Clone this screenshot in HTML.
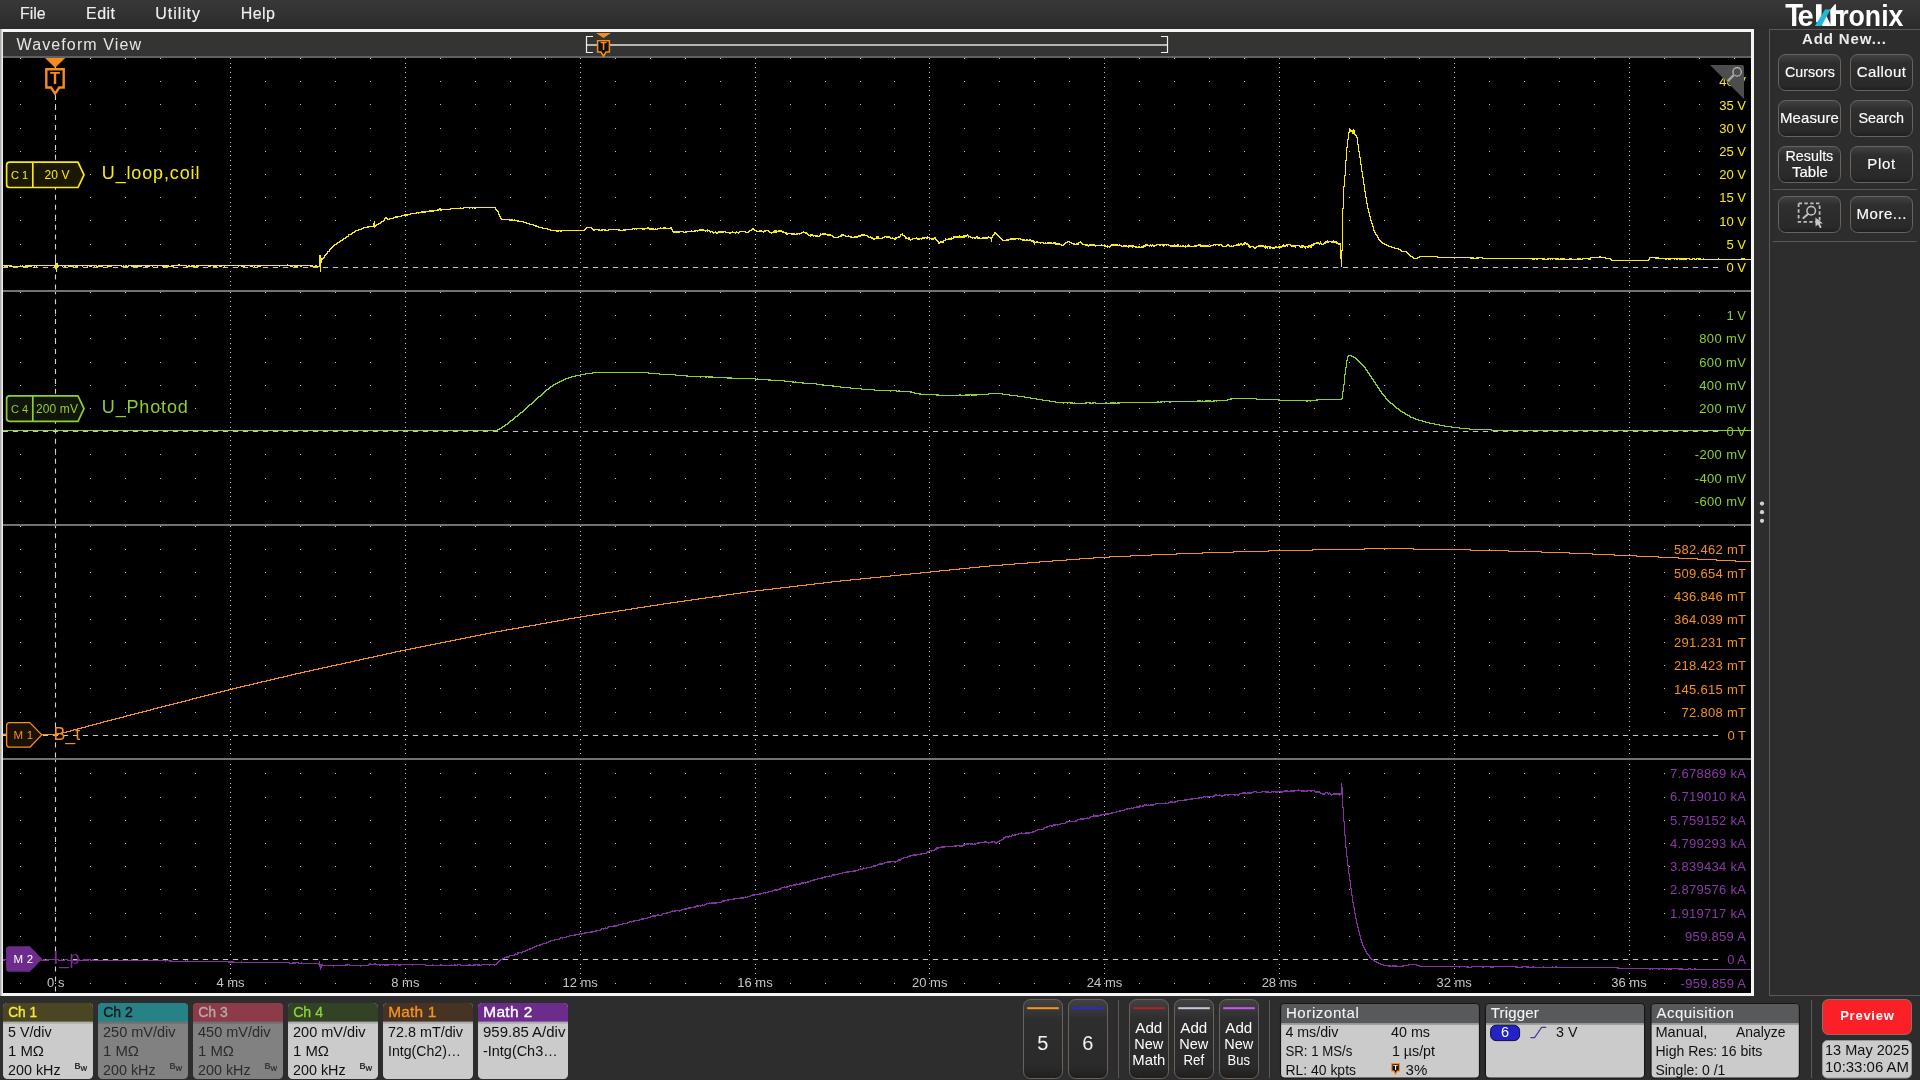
<!DOCTYPE html>
<html><head><meta charset="utf-8"><title>Tektronix Waveform View</title>
<style>
html,body{margin:0;padding:0;background:#2d2d2d;overflow:hidden;}
svg{display:block;font-family:"Liberation Sans", sans-serif;will-change:transform;}
</style></head><body>
<svg width="1920" height="1080" viewBox="0 0 1920 1080">
<defs>
<linearGradient id="gbtn" x1="0" y1="0" x2="0" y2="1"><stop offset="0" stop-color="#424242"/><stop offset="0.25" stop-color="#2e2e2e"/><stop offset="0.85" stop-color="#2a2a2a"/><stop offset="1" stop-color="#1e1e1e"/></linearGradient>
<linearGradient id="gtop" x1="0" y1="0" x2="0" y2="1"><stop offset="0" stop-color="#383838"/><stop offset="1" stop-color="#2b2b2b"/></linearGradient>
<linearGradient id="gleft" x1="0" y1="0" x2="1" y2="0"><stop offset="0" stop-color="#9a9a9a"/><stop offset="1" stop-color="#ffffff"/></linearGradient>
</defs>
<rect x="0" y="0" width="1920" height="1080" fill="#2d2d2d"/>
<rect x="0" y="0" width="1920" height="29" fill="url(#gtop)"/>
<text x="20.00" y="19.25" font-size="16" fill="#efefef" textLength="25.7" lengthAdjust="spacingAndGlyphs" stroke="#efefef" stroke-width="0.15">File</text>
<text x="86.00" y="19.25" font-size="16" fill="#efefef" textLength="29.0" lengthAdjust="spacing" stroke="#efefef" stroke-width="0.15">Edit</text>
<text x="155.30" y="19.25" font-size="16" fill="#efefef" textLength="44.7" lengthAdjust="spacing" stroke="#efefef" stroke-width="0.15">Utility</text>
<text x="240.70" y="19.25" font-size="16" fill="#efefef" textLength="34.3" lengthAdjust="spacing" stroke="#efefef" stroke-width="0.15">Help</text>
<rect x="0" y="29" width="1754" height="967" fill="#f4f4f4"/>
<rect x="0" y="29" width="3" height="967" fill="url(#gleft)"/>
<rect x="3" y="32" width="1748" height="24" fill="#343433"/>
<rect x="3" y="56" width="1748" height="2" fill="#606163"/>
<rect x="3" y="58" width="1748" height="935" fill="#000000"/>
<text x="16.50" y="49.75" font-size="16" fill="#e6e6e6" textLength="124.6" lengthAdjust="spacing">Waveform View</text>
<path d="M20 58.5h1M55 58.5h1M90 58.5h1M125 58.5h1M160 58.5h1M195 58.5h1M230 58.5h1M265 58.5h1M300 58.5h1M335 58.5h1M370 58.5h1M405 58.5h1M440 58.5h1M475 58.5h1M510 58.5h1M545 58.5h1M580 58.5h1M615 58.5h1M650 58.5h1M685 58.5h1M720 58.5h1M755 58.5h1M790 58.5h1M825 58.5h1M860 58.5h1M894 58.5h1M929 58.5h1M964 58.5h1M999 58.5h1M1034 58.5h1M1069 58.5h1M1104 58.5h1M1139 58.5h1M1174 58.5h1M1209 58.5h1M1244 58.5h1M1279 58.5h1M1314 58.5h1M1349 58.5h1M1384 58.5h1M1419 58.5h1M1454 58.5h1M1489 58.5h1M1524 58.5h1M1559 58.5h1M1594 58.5h1M1629 58.5h1M1664 58.5h1M1699 58.5h1M1734 58.5h1M20 81.5h1M55 81.5h1M90 81.5h1M125 81.5h1M160 81.5h1M195 81.5h1M230 81.5h1M265 81.5h1M300 81.5h1M335 81.5h1M370 81.5h1M405 81.5h1M440 81.5h1M475 81.5h1M510 81.5h1M545 81.5h1M580 81.5h1M615 81.5h1M650 81.5h1M685 81.5h1M720 81.5h1M755 81.5h1M790 81.5h1M825 81.5h1M860 81.5h1M894 81.5h1M929 81.5h1M964 81.5h1M999 81.5h1M1034 81.5h1M1069 81.5h1M1104 81.5h1M1139 81.5h1M1174 81.5h1M1209 81.5h1M1244 81.5h1M1279 81.5h1M1314 81.5h1M1349 81.5h1M1384 81.5h1M1419 81.5h1M1454 81.5h1M1489 81.5h1M1524 81.5h1M1559 81.5h1M1594 81.5h1M1629 81.5h1M1664 81.5h1M1699 81.5h1M1734 81.5h1M20 104.5h1M55 104.5h1M90 104.5h1M125 104.5h1M160 104.5h1M195 104.5h1M230 104.5h1M265 104.5h1M300 104.5h1M335 104.5h1M370 104.5h1M405 104.5h1M440 104.5h1M475 104.5h1M510 104.5h1M545 104.5h1M580 104.5h1M615 104.5h1M650 104.5h1M685 104.5h1M720 104.5h1M755 104.5h1M790 104.5h1M825 104.5h1M860 104.5h1M894 104.5h1M929 104.5h1M964 104.5h1M999 104.5h1M1034 104.5h1M1069 104.5h1M1104 104.5h1M1139 104.5h1M1174 104.5h1M1209 104.5h1M1244 104.5h1M1279 104.5h1M1314 104.5h1M1349 104.5h1M1384 104.5h1M1419 104.5h1M1454 104.5h1M1489 104.5h1M1524 104.5h1M1559 104.5h1M1594 104.5h1M1629 104.5h1M1664 104.5h1M1699 104.5h1M1734 104.5h1M20 128.5h1M55 128.5h1M90 128.5h1M125 128.5h1M160 128.5h1M195 128.5h1M230 128.5h1M265 128.5h1M300 128.5h1M335 128.5h1M370 128.5h1M405 128.5h1M440 128.5h1M475 128.5h1M510 128.5h1M545 128.5h1M580 128.5h1M615 128.5h1M650 128.5h1M685 128.5h1M720 128.5h1M755 128.5h1M790 128.5h1M825 128.5h1M860 128.5h1M894 128.5h1M929 128.5h1M964 128.5h1M999 128.5h1M1034 128.5h1M1069 128.5h1M1104 128.5h1M1139 128.5h1M1174 128.5h1M1209 128.5h1M1244 128.5h1M1279 128.5h1M1314 128.5h1M1349 128.5h1M1384 128.5h1M1419 128.5h1M1454 128.5h1M1489 128.5h1M1524 128.5h1M1559 128.5h1M1594 128.5h1M1629 128.5h1M1664 128.5h1M1699 128.5h1M1734 128.5h1M20 151.5h1M55 151.5h1M90 151.5h1M125 151.5h1M160 151.5h1M195 151.5h1M230 151.5h1M265 151.5h1M300 151.5h1M335 151.5h1M370 151.5h1M405 151.5h1M440 151.5h1M475 151.5h1M510 151.5h1M545 151.5h1M580 151.5h1M615 151.5h1M650 151.5h1M685 151.5h1M720 151.5h1M755 151.5h1M790 151.5h1M825 151.5h1M860 151.5h1M894 151.5h1M929 151.5h1M964 151.5h1M999 151.5h1M1034 151.5h1M1069 151.5h1M1104 151.5h1M1139 151.5h1M1174 151.5h1M1209 151.5h1M1244 151.5h1M1279 151.5h1M1314 151.5h1M1349 151.5h1M1384 151.5h1M1419 151.5h1M1454 151.5h1M1489 151.5h1M1524 151.5h1M1559 151.5h1M1594 151.5h1M1629 151.5h1M1664 151.5h1M1699 151.5h1M1734 151.5h1M20 174.5h1M55 174.5h1M90 174.5h1M125 174.5h1M160 174.5h1M195 174.5h1M230 174.5h1M265 174.5h1M300 174.5h1M335 174.5h1M370 174.5h1M405 174.5h1M440 174.5h1M475 174.5h1M510 174.5h1M545 174.5h1M580 174.5h1M615 174.5h1M650 174.5h1M685 174.5h1M720 174.5h1M755 174.5h1M790 174.5h1M825 174.5h1M860 174.5h1M894 174.5h1M929 174.5h1M964 174.5h1M999 174.5h1M1034 174.5h1M1069 174.5h1M1104 174.5h1M1139 174.5h1M1174 174.5h1M1209 174.5h1M1244 174.5h1M1279 174.5h1M1314 174.5h1M1349 174.5h1M1384 174.5h1M1419 174.5h1M1454 174.5h1M1489 174.5h1M1524 174.5h1M1559 174.5h1M1594 174.5h1M1629 174.5h1M1664 174.5h1M1699 174.5h1M1734 174.5h1M20 197.5h1M55 197.5h1M90 197.5h1M125 197.5h1M160 197.5h1M195 197.5h1M230 197.5h1M265 197.5h1M300 197.5h1M335 197.5h1M370 197.5h1M405 197.5h1M440 197.5h1M475 197.5h1M510 197.5h1M545 197.5h1M580 197.5h1M615 197.5h1M650 197.5h1M685 197.5h1M720 197.5h1M755 197.5h1M790 197.5h1M825 197.5h1M860 197.5h1M894 197.5h1M929 197.5h1M964 197.5h1M999 197.5h1M1034 197.5h1M1069 197.5h1M1104 197.5h1M1139 197.5h1M1174 197.5h1M1209 197.5h1M1244 197.5h1M1279 197.5h1M1314 197.5h1M1349 197.5h1M1384 197.5h1M1419 197.5h1M1454 197.5h1M1489 197.5h1M1524 197.5h1M1559 197.5h1M1594 197.5h1M1629 197.5h1M1664 197.5h1M1699 197.5h1M1734 197.5h1M20 220.5h1M55 220.5h1M90 220.5h1M125 220.5h1M160 220.5h1M195 220.5h1M230 220.5h1M265 220.5h1M300 220.5h1M335 220.5h1M370 220.5h1M405 220.5h1M440 220.5h1M475 220.5h1M510 220.5h1M545 220.5h1M580 220.5h1M615 220.5h1M650 220.5h1M685 220.5h1M720 220.5h1M755 220.5h1M790 220.5h1M825 220.5h1M860 220.5h1M894 220.5h1M929 220.5h1M964 220.5h1M999 220.5h1M1034 220.5h1M1069 220.5h1M1104 220.5h1M1139 220.5h1M1174 220.5h1M1209 220.5h1M1244 220.5h1M1279 220.5h1M1314 220.5h1M1349 220.5h1M1384 220.5h1M1419 220.5h1M1454 220.5h1M1489 220.5h1M1524 220.5h1M1559 220.5h1M1594 220.5h1M1629 220.5h1M1664 220.5h1M1699 220.5h1M1734 220.5h1M20 244.5h1M55 244.5h1M90 244.5h1M125 244.5h1M160 244.5h1M195 244.5h1M230 244.5h1M265 244.5h1M300 244.5h1M335 244.5h1M370 244.5h1M405 244.5h1M440 244.5h1M475 244.5h1M510 244.5h1M545 244.5h1M580 244.5h1M615 244.5h1M650 244.5h1M685 244.5h1M720 244.5h1M755 244.5h1M790 244.5h1M825 244.5h1M860 244.5h1M894 244.5h1M929 244.5h1M964 244.5h1M999 244.5h1M1034 244.5h1M1069 244.5h1M1104 244.5h1M1139 244.5h1M1174 244.5h1M1209 244.5h1M1244 244.5h1M1279 244.5h1M1314 244.5h1M1349 244.5h1M1384 244.5h1M1419 244.5h1M1454 244.5h1M1489 244.5h1M1524 244.5h1M1559 244.5h1M1594 244.5h1M1629 244.5h1M1664 244.5h1M1699 244.5h1M1734 244.5h1M20 267.5h1M55 267.5h1M90 267.5h1M125 267.5h1M160 267.5h1M195 267.5h1M230 267.5h1M265 267.5h1M300 267.5h1M335 267.5h1M370 267.5h1M405 267.5h1M440 267.5h1M475 267.5h1M510 267.5h1M545 267.5h1M580 267.5h1M615 267.5h1M650 267.5h1M685 267.5h1M720 267.5h1M755 267.5h1M790 267.5h1M825 267.5h1M860 267.5h1M894 267.5h1M929 267.5h1M964 267.5h1M999 267.5h1M1034 267.5h1M1069 267.5h1M1104 267.5h1M1139 267.5h1M1174 267.5h1M1209 267.5h1M1244 267.5h1M1279 267.5h1M1314 267.5h1M1349 267.5h1M1384 267.5h1M1419 267.5h1M1454 267.5h1M1489 267.5h1M1524 267.5h1M1559 267.5h1M1594 267.5h1M1629 267.5h1M1664 267.5h1M1699 267.5h1M1734 267.5h1M20 290.5h1M55 290.5h1M90 290.5h1M125 290.5h1M160 290.5h1M195 290.5h1M230 290.5h1M265 290.5h1M300 290.5h1M335 290.5h1M370 290.5h1M405 290.5h1M440 290.5h1M475 290.5h1M510 290.5h1M545 290.5h1M580 290.5h1M615 290.5h1M650 290.5h1M685 290.5h1M720 290.5h1M755 290.5h1M790 290.5h1M825 290.5h1M860 290.5h1M894 290.5h1M929 290.5h1M964 290.5h1M999 290.5h1M1034 290.5h1M1069 290.5h1M1104 290.5h1M1139 290.5h1M1174 290.5h1M1209 290.5h1M1244 290.5h1M1279 290.5h1M1314 290.5h1M1349 290.5h1M1384 290.5h1M1419 290.5h1M1454 290.5h1M1489 290.5h1M1524 290.5h1M1559 290.5h1M1594 290.5h1M1629 290.5h1M1664 290.5h1M1699 290.5h1M1734 290.5h1M20 292.5h1M55 292.5h1M90 292.5h1M125 292.5h1M160 292.5h1M195 292.5h1M230 292.5h1M265 292.5h1M300 292.5h1M335 292.5h1M370 292.5h1M405 292.5h1M440 292.5h1M475 292.5h1M510 292.5h1M545 292.5h1M580 292.5h1M615 292.5h1M650 292.5h1M685 292.5h1M720 292.5h1M755 292.5h1M790 292.5h1M825 292.5h1M860 292.5h1M894 292.5h1M929 292.5h1M964 292.5h1M999 292.5h1M1034 292.5h1M1069 292.5h1M1104 292.5h1M1139 292.5h1M1174 292.5h1M1209 292.5h1M1244 292.5h1M1279 292.5h1M1314 292.5h1M1349 292.5h1M1384 292.5h1M1419 292.5h1M1454 292.5h1M1489 292.5h1M1524 292.5h1M1559 292.5h1M1594 292.5h1M1629 292.5h1M1664 292.5h1M1699 292.5h1M1734 292.5h1M20 315.5h1M55 315.5h1M90 315.5h1M125 315.5h1M160 315.5h1M195 315.5h1M230 315.5h1M265 315.5h1M300 315.5h1M335 315.5h1M370 315.5h1M405 315.5h1M440 315.5h1M475 315.5h1M510 315.5h1M545 315.5h1M580 315.5h1M615 315.5h1M650 315.5h1M685 315.5h1M720 315.5h1M755 315.5h1M790 315.5h1M825 315.5h1M860 315.5h1M894 315.5h1M929 315.5h1M964 315.5h1M999 315.5h1M1034 315.5h1M1069 315.5h1M1104 315.5h1M1139 315.5h1M1174 315.5h1M1209 315.5h1M1244 315.5h1M1279 315.5h1M1314 315.5h1M1349 315.5h1M1384 315.5h1M1419 315.5h1M1454 315.5h1M1489 315.5h1M1524 315.5h1M1559 315.5h1M1594 315.5h1M1629 315.5h1M1664 315.5h1M1699 315.5h1M1734 315.5h1M20 338.5h1M55 338.5h1M90 338.5h1M125 338.5h1M160 338.5h1M195 338.5h1M230 338.5h1M265 338.5h1M300 338.5h1M335 338.5h1M370 338.5h1M405 338.5h1M440 338.5h1M475 338.5h1M510 338.5h1M545 338.5h1M580 338.5h1M615 338.5h1M650 338.5h1M685 338.5h1M720 338.5h1M755 338.5h1M790 338.5h1M825 338.5h1M860 338.5h1M894 338.5h1M929 338.5h1M964 338.5h1M999 338.5h1M1034 338.5h1M1069 338.5h1M1104 338.5h1M1139 338.5h1M1174 338.5h1M1209 338.5h1M1244 338.5h1M1279 338.5h1M1314 338.5h1M1349 338.5h1M1384 338.5h1M1419 338.5h1M1454 338.5h1M1489 338.5h1M1524 338.5h1M1559 338.5h1M1594 338.5h1M1629 338.5h1M1664 338.5h1M1699 338.5h1M1734 338.5h1M20 362.5h1M55 362.5h1M90 362.5h1M125 362.5h1M160 362.5h1M195 362.5h1M230 362.5h1M265 362.5h1M300 362.5h1M335 362.5h1M370 362.5h1M405 362.5h1M440 362.5h1M475 362.5h1M510 362.5h1M545 362.5h1M580 362.5h1M615 362.5h1M650 362.5h1M685 362.5h1M720 362.5h1M755 362.5h1M790 362.5h1M825 362.5h1M860 362.5h1M894 362.5h1M929 362.5h1M964 362.5h1M999 362.5h1M1034 362.5h1M1069 362.5h1M1104 362.5h1M1139 362.5h1M1174 362.5h1M1209 362.5h1M1244 362.5h1M1279 362.5h1M1314 362.5h1M1349 362.5h1M1384 362.5h1M1419 362.5h1M1454 362.5h1M1489 362.5h1M1524 362.5h1M1559 362.5h1M1594 362.5h1M1629 362.5h1M1664 362.5h1M1699 362.5h1M1734 362.5h1M20 385.5h1M55 385.5h1M90 385.5h1M125 385.5h1M160 385.5h1M195 385.5h1M230 385.5h1M265 385.5h1M300 385.5h1M335 385.5h1M370 385.5h1M405 385.5h1M440 385.5h1M475 385.5h1M510 385.5h1M545 385.5h1M580 385.5h1M615 385.5h1M650 385.5h1M685 385.5h1M720 385.5h1M755 385.5h1M790 385.5h1M825 385.5h1M860 385.5h1M894 385.5h1M929 385.5h1M964 385.5h1M999 385.5h1M1034 385.5h1M1069 385.5h1M1104 385.5h1M1139 385.5h1M1174 385.5h1M1209 385.5h1M1244 385.5h1M1279 385.5h1M1314 385.5h1M1349 385.5h1M1384 385.5h1M1419 385.5h1M1454 385.5h1M1489 385.5h1M1524 385.5h1M1559 385.5h1M1594 385.5h1M1629 385.5h1M1664 385.5h1M1699 385.5h1M1734 385.5h1M20 408.5h1M55 408.5h1M90 408.5h1M125 408.5h1M160 408.5h1M195 408.5h1M230 408.5h1M265 408.5h1M300 408.5h1M335 408.5h1M370 408.5h1M405 408.5h1M440 408.5h1M475 408.5h1M510 408.5h1M545 408.5h1M580 408.5h1M615 408.5h1M650 408.5h1M685 408.5h1M720 408.5h1M755 408.5h1M790 408.5h1M825 408.5h1M860 408.5h1M894 408.5h1M929 408.5h1M964 408.5h1M999 408.5h1M1034 408.5h1M1069 408.5h1M1104 408.5h1M1139 408.5h1M1174 408.5h1M1209 408.5h1M1244 408.5h1M1279 408.5h1M1314 408.5h1M1349 408.5h1M1384 408.5h1M1419 408.5h1M1454 408.5h1M1489 408.5h1M1524 408.5h1M1559 408.5h1M1594 408.5h1M1629 408.5h1M1664 408.5h1M1699 408.5h1M1734 408.5h1M20 431.5h1M55 431.5h1M90 431.5h1M125 431.5h1M160 431.5h1M195 431.5h1M230 431.5h1M265 431.5h1M300 431.5h1M335 431.5h1M370 431.5h1M405 431.5h1M440 431.5h1M475 431.5h1M510 431.5h1M545 431.5h1M580 431.5h1M615 431.5h1M650 431.5h1M685 431.5h1M720 431.5h1M755 431.5h1M790 431.5h1M825 431.5h1M860 431.5h1M894 431.5h1M929 431.5h1M964 431.5h1M999 431.5h1M1034 431.5h1M1069 431.5h1M1104 431.5h1M1139 431.5h1M1174 431.5h1M1209 431.5h1M1244 431.5h1M1279 431.5h1M1314 431.5h1M1349 431.5h1M1384 431.5h1M1419 431.5h1M1454 431.5h1M1489 431.5h1M1524 431.5h1M1559 431.5h1M1594 431.5h1M1629 431.5h1M1664 431.5h1M1699 431.5h1M1734 431.5h1M20 454.5h1M55 454.5h1M90 454.5h1M125 454.5h1M160 454.5h1M195 454.5h1M230 454.5h1M265 454.5h1M300 454.5h1M335 454.5h1M370 454.5h1M405 454.5h1M440 454.5h1M475 454.5h1M510 454.5h1M545 454.5h1M580 454.5h1M615 454.5h1M650 454.5h1M685 454.5h1M720 454.5h1M755 454.5h1M790 454.5h1M825 454.5h1M860 454.5h1M894 454.5h1M929 454.5h1M964 454.5h1M999 454.5h1M1034 454.5h1M1069 454.5h1M1104 454.5h1M1139 454.5h1M1174 454.5h1M1209 454.5h1M1244 454.5h1M1279 454.5h1M1314 454.5h1M1349 454.5h1M1384 454.5h1M1419 454.5h1M1454 454.5h1M1489 454.5h1M1524 454.5h1M1559 454.5h1M1594 454.5h1M1629 454.5h1M1664 454.5h1M1699 454.5h1M1734 454.5h1M20 478.5h1M55 478.5h1M90 478.5h1M125 478.5h1M160 478.5h1M195 478.5h1M230 478.5h1M265 478.5h1M300 478.5h1M335 478.5h1M370 478.5h1M405 478.5h1M440 478.5h1M475 478.5h1M510 478.5h1M545 478.5h1M580 478.5h1M615 478.5h1M650 478.5h1M685 478.5h1M720 478.5h1M755 478.5h1M790 478.5h1M825 478.5h1M860 478.5h1M894 478.5h1M929 478.5h1M964 478.5h1M999 478.5h1M1034 478.5h1M1069 478.5h1M1104 478.5h1M1139 478.5h1M1174 478.5h1M1209 478.5h1M1244 478.5h1M1279 478.5h1M1314 478.5h1M1349 478.5h1M1384 478.5h1M1419 478.5h1M1454 478.5h1M1489 478.5h1M1524 478.5h1M1559 478.5h1M1594 478.5h1M1629 478.5h1M1664 478.5h1M1699 478.5h1M1734 478.5h1M20 501.5h1M55 501.5h1M90 501.5h1M125 501.5h1M160 501.5h1M195 501.5h1M230 501.5h1M265 501.5h1M300 501.5h1M335 501.5h1M370 501.5h1M405 501.5h1M440 501.5h1M475 501.5h1M510 501.5h1M545 501.5h1M580 501.5h1M615 501.5h1M650 501.5h1M685 501.5h1M720 501.5h1M755 501.5h1M790 501.5h1M825 501.5h1M860 501.5h1M894 501.5h1M929 501.5h1M964 501.5h1M999 501.5h1M1034 501.5h1M1069 501.5h1M1104 501.5h1M1139 501.5h1M1174 501.5h1M1209 501.5h1M1244 501.5h1M1279 501.5h1M1314 501.5h1M1349 501.5h1M1384 501.5h1M1419 501.5h1M1454 501.5h1M1489 501.5h1M1524 501.5h1M1559 501.5h1M1594 501.5h1M1629 501.5h1M1664 501.5h1M1699 501.5h1M1734 501.5h1M20 524.5h1M55 524.5h1M90 524.5h1M125 524.5h1M160 524.5h1M195 524.5h1M230 524.5h1M265 524.5h1M300 524.5h1M335 524.5h1M370 524.5h1M405 524.5h1M440 524.5h1M475 524.5h1M510 524.5h1M545 524.5h1M580 524.5h1M615 524.5h1M650 524.5h1M685 524.5h1M720 524.5h1M755 524.5h1M790 524.5h1M825 524.5h1M860 524.5h1M894 524.5h1M929 524.5h1M964 524.5h1M999 524.5h1M1034 524.5h1M1069 524.5h1M1104 524.5h1M1139 524.5h1M1174 524.5h1M1209 524.5h1M1244 524.5h1M1279 524.5h1M1314 524.5h1M1349 524.5h1M1384 524.5h1M1419 524.5h1M1454 524.5h1M1489 524.5h1M1524 524.5h1M1559 524.5h1M1594 524.5h1M1629 524.5h1M1664 524.5h1M1699 524.5h1M1734 524.5h1M20 526.5h1M55 526.5h1M90 526.5h1M125 526.5h1M160 526.5h1M195 526.5h1M230 526.5h1M265 526.5h1M300 526.5h1M335 526.5h1M370 526.5h1M405 526.5h1M440 526.5h1M475 526.5h1M510 526.5h1M545 526.5h1M580 526.5h1M615 526.5h1M650 526.5h1M685 526.5h1M720 526.5h1M755 526.5h1M790 526.5h1M825 526.5h1M860 526.5h1M894 526.5h1M929 526.5h1M964 526.5h1M999 526.5h1M1034 526.5h1M1069 526.5h1M1104 526.5h1M1139 526.5h1M1174 526.5h1M1209 526.5h1M1244 526.5h1M1279 526.5h1M1314 526.5h1M1349 526.5h1M1384 526.5h1M1419 526.5h1M1454 526.5h1M1489 526.5h1M1524 526.5h1M1559 526.5h1M1594 526.5h1M1629 526.5h1M1664 526.5h1M1699 526.5h1M1734 526.5h1M20 549.5h1M55 549.5h1M90 549.5h1M125 549.5h1M160 549.5h1M195 549.5h1M230 549.5h1M265 549.5h1M300 549.5h1M335 549.5h1M370 549.5h1M405 549.5h1M440 549.5h1M475 549.5h1M510 549.5h1M545 549.5h1M580 549.5h1M615 549.5h1M650 549.5h1M685 549.5h1M720 549.5h1M755 549.5h1M790 549.5h1M825 549.5h1M860 549.5h1M894 549.5h1M929 549.5h1M964 549.5h1M999 549.5h1M1034 549.5h1M1069 549.5h1M1104 549.5h1M1139 549.5h1M1174 549.5h1M1209 549.5h1M1244 549.5h1M1279 549.5h1M1314 549.5h1M1349 549.5h1M1384 549.5h1M1419 549.5h1M1454 549.5h1M1489 549.5h1M1524 549.5h1M1559 549.5h1M1594 549.5h1M1629 549.5h1M1664 549.5h1M1699 549.5h1M1734 549.5h1M20 572.5h1M55 572.5h1M90 572.5h1M125 572.5h1M160 572.5h1M195 572.5h1M230 572.5h1M265 572.5h1M300 572.5h1M335 572.5h1M370 572.5h1M405 572.5h1M440 572.5h1M475 572.5h1M510 572.5h1M545 572.5h1M580 572.5h1M615 572.5h1M650 572.5h1M685 572.5h1M720 572.5h1M755 572.5h1M790 572.5h1M825 572.5h1M860 572.5h1M894 572.5h1M929 572.5h1M964 572.5h1M999 572.5h1M1034 572.5h1M1069 572.5h1M1104 572.5h1M1139 572.5h1M1174 572.5h1M1209 572.5h1M1244 572.5h1M1279 572.5h1M1314 572.5h1M1349 572.5h1M1384 572.5h1M1419 572.5h1M1454 572.5h1M1489 572.5h1M1524 572.5h1M1559 572.5h1M1594 572.5h1M1629 572.5h1M1664 572.5h1M1699 572.5h1M1734 572.5h1M20 596.5h1M55 596.5h1M90 596.5h1M125 596.5h1M160 596.5h1M195 596.5h1M230 596.5h1M265 596.5h1M300 596.5h1M335 596.5h1M370 596.5h1M405 596.5h1M440 596.5h1M475 596.5h1M510 596.5h1M545 596.5h1M580 596.5h1M615 596.5h1M650 596.5h1M685 596.5h1M720 596.5h1M755 596.5h1M790 596.5h1M825 596.5h1M860 596.5h1M894 596.5h1M929 596.5h1M964 596.5h1M999 596.5h1M1034 596.5h1M1069 596.5h1M1104 596.5h1M1139 596.5h1M1174 596.5h1M1209 596.5h1M1244 596.5h1M1279 596.5h1M1314 596.5h1M1349 596.5h1M1384 596.5h1M1419 596.5h1M1454 596.5h1M1489 596.5h1M1524 596.5h1M1559 596.5h1M1594 596.5h1M1629 596.5h1M1664 596.5h1M1699 596.5h1M1734 596.5h1M20 619.5h1M55 619.5h1M90 619.5h1M125 619.5h1M160 619.5h1M195 619.5h1M230 619.5h1M265 619.5h1M300 619.5h1M335 619.5h1M370 619.5h1M405 619.5h1M440 619.5h1M475 619.5h1M510 619.5h1M545 619.5h1M580 619.5h1M615 619.5h1M650 619.5h1M685 619.5h1M720 619.5h1M755 619.5h1M790 619.5h1M825 619.5h1M860 619.5h1M894 619.5h1M929 619.5h1M964 619.5h1M999 619.5h1M1034 619.5h1M1069 619.5h1M1104 619.5h1M1139 619.5h1M1174 619.5h1M1209 619.5h1M1244 619.5h1M1279 619.5h1M1314 619.5h1M1349 619.5h1M1384 619.5h1M1419 619.5h1M1454 619.5h1M1489 619.5h1M1524 619.5h1M1559 619.5h1M1594 619.5h1M1629 619.5h1M1664 619.5h1M1699 619.5h1M1734 619.5h1M20 642.5h1M55 642.5h1M90 642.5h1M125 642.5h1M160 642.5h1M195 642.5h1M230 642.5h1M265 642.5h1M300 642.5h1M335 642.5h1M370 642.5h1M405 642.5h1M440 642.5h1M475 642.5h1M510 642.5h1M545 642.5h1M580 642.5h1M615 642.5h1M650 642.5h1M685 642.5h1M720 642.5h1M755 642.5h1M790 642.5h1M825 642.5h1M860 642.5h1M894 642.5h1M929 642.5h1M964 642.5h1M999 642.5h1M1034 642.5h1M1069 642.5h1M1104 642.5h1M1139 642.5h1M1174 642.5h1M1209 642.5h1M1244 642.5h1M1279 642.5h1M1314 642.5h1M1349 642.5h1M1384 642.5h1M1419 642.5h1M1454 642.5h1M1489 642.5h1M1524 642.5h1M1559 642.5h1M1594 642.5h1M1629 642.5h1M1664 642.5h1M1699 642.5h1M1734 642.5h1M20 665.5h1M55 665.5h1M90 665.5h1M125 665.5h1M160 665.5h1M195 665.5h1M230 665.5h1M265 665.5h1M300 665.5h1M335 665.5h1M370 665.5h1M405 665.5h1M440 665.5h1M475 665.5h1M510 665.5h1M545 665.5h1M580 665.5h1M615 665.5h1M650 665.5h1M685 665.5h1M720 665.5h1M755 665.5h1M790 665.5h1M825 665.5h1M860 665.5h1M894 665.5h1M929 665.5h1M964 665.5h1M999 665.5h1M1034 665.5h1M1069 665.5h1M1104 665.5h1M1139 665.5h1M1174 665.5h1M1209 665.5h1M1244 665.5h1M1279 665.5h1M1314 665.5h1M1349 665.5h1M1384 665.5h1M1419 665.5h1M1454 665.5h1M1489 665.5h1M1524 665.5h1M1559 665.5h1M1594 665.5h1M1629 665.5h1M1664 665.5h1M1699 665.5h1M1734 665.5h1M20 688.5h1M55 688.5h1M90 688.5h1M125 688.5h1M160 688.5h1M195 688.5h1M230 688.5h1M265 688.5h1M300 688.5h1M335 688.5h1M370 688.5h1M405 688.5h1M440 688.5h1M475 688.5h1M510 688.5h1M545 688.5h1M580 688.5h1M615 688.5h1M650 688.5h1M685 688.5h1M720 688.5h1M755 688.5h1M790 688.5h1M825 688.5h1M860 688.5h1M894 688.5h1M929 688.5h1M964 688.5h1M999 688.5h1M1034 688.5h1M1069 688.5h1M1104 688.5h1M1139 688.5h1M1174 688.5h1M1209 688.5h1M1244 688.5h1M1279 688.5h1M1314 688.5h1M1349 688.5h1M1384 688.5h1M1419 688.5h1M1454 688.5h1M1489 688.5h1M1524 688.5h1M1559 688.5h1M1594 688.5h1M1629 688.5h1M1664 688.5h1M1699 688.5h1M1734 688.5h1M20 712.5h1M55 712.5h1M90 712.5h1M125 712.5h1M160 712.5h1M195 712.5h1M230 712.5h1M265 712.5h1M300 712.5h1M335 712.5h1M370 712.5h1M405 712.5h1M440 712.5h1M475 712.5h1M510 712.5h1M545 712.5h1M580 712.5h1M615 712.5h1M650 712.5h1M685 712.5h1M720 712.5h1M755 712.5h1M790 712.5h1M825 712.5h1M860 712.5h1M894 712.5h1M929 712.5h1M964 712.5h1M999 712.5h1M1034 712.5h1M1069 712.5h1M1104 712.5h1M1139 712.5h1M1174 712.5h1M1209 712.5h1M1244 712.5h1M1279 712.5h1M1314 712.5h1M1349 712.5h1M1384 712.5h1M1419 712.5h1M1454 712.5h1M1489 712.5h1M1524 712.5h1M1559 712.5h1M1594 712.5h1M1629 712.5h1M1664 712.5h1M1699 712.5h1M1734 712.5h1M20 735.5h1M55 735.5h1M90 735.5h1M125 735.5h1M160 735.5h1M195 735.5h1M230 735.5h1M265 735.5h1M300 735.5h1M335 735.5h1M370 735.5h1M405 735.5h1M440 735.5h1M475 735.5h1M510 735.5h1M545 735.5h1M580 735.5h1M615 735.5h1M650 735.5h1M685 735.5h1M720 735.5h1M755 735.5h1M790 735.5h1M825 735.5h1M860 735.5h1M894 735.5h1M929 735.5h1M964 735.5h1M999 735.5h1M1034 735.5h1M1069 735.5h1M1104 735.5h1M1139 735.5h1M1174 735.5h1M1209 735.5h1M1244 735.5h1M1279 735.5h1M1314 735.5h1M1349 735.5h1M1384 735.5h1M1419 735.5h1M1454 735.5h1M1489 735.5h1M1524 735.5h1M1559 735.5h1M1594 735.5h1M1629 735.5h1M1664 735.5h1M1699 735.5h1M1734 735.5h1M20 758.5h1M55 758.5h1M90 758.5h1M125 758.5h1M160 758.5h1M195 758.5h1M230 758.5h1M265 758.5h1M300 758.5h1M335 758.5h1M370 758.5h1M405 758.5h1M440 758.5h1M475 758.5h1M510 758.5h1M545 758.5h1M580 758.5h1M615 758.5h1M650 758.5h1M685 758.5h1M720 758.5h1M755 758.5h1M790 758.5h1M825 758.5h1M860 758.5h1M894 758.5h1M929 758.5h1M964 758.5h1M999 758.5h1M1034 758.5h1M1069 758.5h1M1104 758.5h1M1139 758.5h1M1174 758.5h1M1209 758.5h1M1244 758.5h1M1279 758.5h1M1314 758.5h1M1349 758.5h1M1384 758.5h1M1419 758.5h1M1454 758.5h1M1489 758.5h1M1524 758.5h1M1559 758.5h1M1594 758.5h1M1629 758.5h1M1664 758.5h1M1699 758.5h1M1734 758.5h1M20 773.5h1M55 773.5h1M90 773.5h1M125 773.5h1M160 773.5h1M195 773.5h1M230 773.5h1M265 773.5h1M300 773.5h1M335 773.5h1M370 773.5h1M405 773.5h1M440 773.5h1M475 773.5h1M510 773.5h1M545 773.5h1M580 773.5h1M615 773.5h1M650 773.5h1M685 773.5h1M720 773.5h1M755 773.5h1M790 773.5h1M825 773.5h1M860 773.5h1M894 773.5h1M929 773.5h1M964 773.5h1M999 773.5h1M1034 773.5h1M1069 773.5h1M1104 773.5h1M1139 773.5h1M1174 773.5h1M1209 773.5h1M1244 773.5h1M1279 773.5h1M1314 773.5h1M1349 773.5h1M1384 773.5h1M1419 773.5h1M1454 773.5h1M1489 773.5h1M1524 773.5h1M1559 773.5h1M1594 773.5h1M1629 773.5h1M1664 773.5h1M1699 773.5h1M1734 773.5h1M20 797.5h1M55 797.5h1M90 797.5h1M125 797.5h1M160 797.5h1M195 797.5h1M230 797.5h1M265 797.5h1M300 797.5h1M335 797.5h1M370 797.5h1M405 797.5h1M440 797.5h1M475 797.5h1M510 797.5h1M545 797.5h1M580 797.5h1M615 797.5h1M650 797.5h1M685 797.5h1M720 797.5h1M755 797.5h1M790 797.5h1M825 797.5h1M860 797.5h1M894 797.5h1M929 797.5h1M964 797.5h1M999 797.5h1M1034 797.5h1M1069 797.5h1M1104 797.5h1M1139 797.5h1M1174 797.5h1M1209 797.5h1M1244 797.5h1M1279 797.5h1M1314 797.5h1M1349 797.5h1M1384 797.5h1M1419 797.5h1M1454 797.5h1M1489 797.5h1M1524 797.5h1M1559 797.5h1M1594 797.5h1M1629 797.5h1M1664 797.5h1M1699 797.5h1M1734 797.5h1M20 820.5h1M55 820.5h1M90 820.5h1M125 820.5h1M160 820.5h1M195 820.5h1M230 820.5h1M265 820.5h1M300 820.5h1M335 820.5h1M370 820.5h1M405 820.5h1M440 820.5h1M475 820.5h1M510 820.5h1M545 820.5h1M580 820.5h1M615 820.5h1M650 820.5h1M685 820.5h1M720 820.5h1M755 820.5h1M790 820.5h1M825 820.5h1M860 820.5h1M894 820.5h1M929 820.5h1M964 820.5h1M999 820.5h1M1034 820.5h1M1069 820.5h1M1104 820.5h1M1139 820.5h1M1174 820.5h1M1209 820.5h1M1244 820.5h1M1279 820.5h1M1314 820.5h1M1349 820.5h1M1384 820.5h1M1419 820.5h1M1454 820.5h1M1489 820.5h1M1524 820.5h1M1559 820.5h1M1594 820.5h1M1629 820.5h1M1664 820.5h1M1699 820.5h1M1734 820.5h1M20 843.5h1M55 843.5h1M90 843.5h1M125 843.5h1M160 843.5h1M195 843.5h1M230 843.5h1M265 843.5h1M300 843.5h1M335 843.5h1M370 843.5h1M405 843.5h1M440 843.5h1M475 843.5h1M510 843.5h1M545 843.5h1M580 843.5h1M615 843.5h1M650 843.5h1M685 843.5h1M720 843.5h1M755 843.5h1M790 843.5h1M825 843.5h1M860 843.5h1M894 843.5h1M929 843.5h1M964 843.5h1M999 843.5h1M1034 843.5h1M1069 843.5h1M1104 843.5h1M1139 843.5h1M1174 843.5h1M1209 843.5h1M1244 843.5h1M1279 843.5h1M1314 843.5h1M1349 843.5h1M1384 843.5h1M1419 843.5h1M1454 843.5h1M1489 843.5h1M1524 843.5h1M1559 843.5h1M1594 843.5h1M1629 843.5h1M1664 843.5h1M1699 843.5h1M1734 843.5h1M20 866.5h1M55 866.5h1M90 866.5h1M125 866.5h1M160 866.5h1M195 866.5h1M230 866.5h1M265 866.5h1M300 866.5h1M335 866.5h1M370 866.5h1M405 866.5h1M440 866.5h1M475 866.5h1M510 866.5h1M545 866.5h1M580 866.5h1M615 866.5h1M650 866.5h1M685 866.5h1M720 866.5h1M755 866.5h1M790 866.5h1M825 866.5h1M860 866.5h1M894 866.5h1M929 866.5h1M964 866.5h1M999 866.5h1M1034 866.5h1M1069 866.5h1M1104 866.5h1M1139 866.5h1M1174 866.5h1M1209 866.5h1M1244 866.5h1M1279 866.5h1M1314 866.5h1M1349 866.5h1M1384 866.5h1M1419 866.5h1M1454 866.5h1M1489 866.5h1M1524 866.5h1M1559 866.5h1M1594 866.5h1M1629 866.5h1M1664 866.5h1M1699 866.5h1M1734 866.5h1M20 889.5h1M55 889.5h1M90 889.5h1M125 889.5h1M160 889.5h1M195 889.5h1M230 889.5h1M265 889.5h1M300 889.5h1M335 889.5h1M370 889.5h1M405 889.5h1M440 889.5h1M475 889.5h1M510 889.5h1M545 889.5h1M580 889.5h1M615 889.5h1M650 889.5h1M685 889.5h1M720 889.5h1M755 889.5h1M790 889.5h1M825 889.5h1M860 889.5h1M894 889.5h1M929 889.5h1M964 889.5h1M999 889.5h1M1034 889.5h1M1069 889.5h1M1104 889.5h1M1139 889.5h1M1174 889.5h1M1209 889.5h1M1244 889.5h1M1279 889.5h1M1314 889.5h1M1349 889.5h1M1384 889.5h1M1419 889.5h1M1454 889.5h1M1489 889.5h1M1524 889.5h1M1559 889.5h1M1594 889.5h1M1629 889.5h1M1664 889.5h1M1699 889.5h1M1734 889.5h1M20 913.5h1M55 913.5h1M90 913.5h1M125 913.5h1M160 913.5h1M195 913.5h1M230 913.5h1M265 913.5h1M300 913.5h1M335 913.5h1M370 913.5h1M405 913.5h1M440 913.5h1M475 913.5h1M510 913.5h1M545 913.5h1M580 913.5h1M615 913.5h1M650 913.5h1M685 913.5h1M720 913.5h1M755 913.5h1M790 913.5h1M825 913.5h1M860 913.5h1M894 913.5h1M929 913.5h1M964 913.5h1M999 913.5h1M1034 913.5h1M1069 913.5h1M1104 913.5h1M1139 913.5h1M1174 913.5h1M1209 913.5h1M1244 913.5h1M1279 913.5h1M1314 913.5h1M1349 913.5h1M1384 913.5h1M1419 913.5h1M1454 913.5h1M1489 913.5h1M1524 913.5h1M1559 913.5h1M1594 913.5h1M1629 913.5h1M1664 913.5h1M1699 913.5h1M1734 913.5h1M20 936.5h1M55 936.5h1M90 936.5h1M125 936.5h1M160 936.5h1M195 936.5h1M230 936.5h1M265 936.5h1M300 936.5h1M335 936.5h1M370 936.5h1M405 936.5h1M440 936.5h1M475 936.5h1M510 936.5h1M545 936.5h1M580 936.5h1M615 936.5h1M650 936.5h1M685 936.5h1M720 936.5h1M755 936.5h1M790 936.5h1M825 936.5h1M860 936.5h1M894 936.5h1M929 936.5h1M964 936.5h1M999 936.5h1M1034 936.5h1M1069 936.5h1M1104 936.5h1M1139 936.5h1M1174 936.5h1M1209 936.5h1M1244 936.5h1M1279 936.5h1M1314 936.5h1M1349 936.5h1M1384 936.5h1M1419 936.5h1M1454 936.5h1M1489 936.5h1M1524 936.5h1M1559 936.5h1M1594 936.5h1M1629 936.5h1M1664 936.5h1M1699 936.5h1M1734 936.5h1M20 959.5h1M55 959.5h1M90 959.5h1M125 959.5h1M160 959.5h1M195 959.5h1M230 959.5h1M265 959.5h1M300 959.5h1M335 959.5h1M370 959.5h1M405 959.5h1M440 959.5h1M475 959.5h1M510 959.5h1M545 959.5h1M580 959.5h1M615 959.5h1M650 959.5h1M685 959.5h1M720 959.5h1M755 959.5h1M790 959.5h1M825 959.5h1M860 959.5h1M894 959.5h1M929 959.5h1M964 959.5h1M999 959.5h1M1034 959.5h1M1069 959.5h1M1104 959.5h1M1139 959.5h1M1174 959.5h1M1209 959.5h1M1244 959.5h1M1279 959.5h1M1314 959.5h1M1349 959.5h1M1384 959.5h1M1419 959.5h1M1454 959.5h1M1489 959.5h1M1524 959.5h1M1559 959.5h1M1594 959.5h1M1629 959.5h1M1664 959.5h1M1699 959.5h1M1734 959.5h1M20 983.5h1M55 983.5h1M90 983.5h1M125 983.5h1M160 983.5h1M195 983.5h1M230 983.5h1M265 983.5h1M300 983.5h1M335 983.5h1M370 983.5h1M405 983.5h1M440 983.5h1M475 983.5h1M510 983.5h1M545 983.5h1M580 983.5h1M615 983.5h1M650 983.5h1M685 983.5h1M720 983.5h1M755 983.5h1M790 983.5h1M825 983.5h1M860 983.5h1M894 983.5h1M929 983.5h1M964 983.5h1M999 983.5h1M1034 983.5h1M1069 983.5h1M1104 983.5h1M1139 983.5h1M1174 983.5h1M1209 983.5h1M1244 983.5h1M1279 983.5h1M1314 983.5h1M1349 983.5h1M1384 983.5h1M1419 983.5h1M1454 983.5h1M1489 983.5h1M1524 983.5h1M1559 983.5h1M1594 983.5h1M1629 983.5h1M1664 983.5h1M1699 983.5h1M1734 983.5h1M230 58.5h1M230 63.5h1M230 67.5h1M230 72.5h1M230 77.5h1M230 81.5h1M230 86.5h1M230 90.5h1M230 95.5h1M230 100.5h1M230 104.5h1M230 109.5h1M230 114.5h1M230 118.5h1M230 123.5h1M230 128.5h1M230 132.5h1M230 137.5h1M230 142.5h1M230 146.5h1M230 151.5h1M230 155.5h1M230 160.5h1M230 165.5h1M230 169.5h1M230 174.5h1M230 179.5h1M230 183.5h1M230 188.5h1M230 193.5h1M230 197.5h1M230 202.5h1M230 206.5h1M230 211.5h1M230 216.5h1M230 220.5h1M230 225.5h1M230 230.5h1M230 234.5h1M230 239.5h1M230 244.5h1M230 248.5h1M230 253.5h1M230 258.5h1M230 262.5h1M230 267.5h1M230 271.5h1M230 276.5h1M230 281.5h1M230 285.5h1M230 292.5h1M230 297.5h1M230 301.5h1M230 306.5h1M230 311.5h1M230 315.5h1M230 320.5h1M230 324.5h1M230 329.5h1M230 334.5h1M230 338.5h1M230 343.5h1M230 348.5h1M230 352.5h1M230 357.5h1M230 362.5h1M230 366.5h1M230 371.5h1M230 376.5h1M230 380.5h1M230 385.5h1M230 389.5h1M230 394.5h1M230 399.5h1M230 403.5h1M230 408.5h1M230 413.5h1M230 417.5h1M230 422.5h1M230 427.5h1M230 431.5h1M230 436.5h1M230 440.5h1M230 445.5h1M230 450.5h1M230 454.5h1M230 459.5h1M230 464.5h1M230 468.5h1M230 473.5h1M230 478.5h1M230 482.5h1M230 487.5h1M230 492.5h1M230 496.5h1M230 501.5h1M230 505.5h1M230 510.5h1M230 515.5h1M230 519.5h1M230 526.5h1M230 531.5h1M230 535.5h1M230 540.5h1M230 545.5h1M230 549.5h1M230 554.5h1M230 558.5h1M230 563.5h1M230 568.5h1M230 572.5h1M230 577.5h1M230 582.5h1M230 586.5h1M230 591.5h1M230 596.5h1M230 600.5h1M230 605.5h1M230 610.5h1M230 614.5h1M230 619.5h1M230 623.5h1M230 628.5h1M230 633.5h1M230 637.5h1M230 642.5h1M230 647.5h1M230 651.5h1M230 656.5h1M230 661.5h1M230 665.5h1M230 670.5h1M230 674.5h1M230 679.5h1M230 684.5h1M230 688.5h1M230 693.5h1M230 698.5h1M230 702.5h1M230 707.5h1M230 712.5h1M230 716.5h1M230 721.5h1M230 726.5h1M230 730.5h1M230 735.5h1M230 739.5h1M230 744.5h1M230 749.5h1M230 753.5h1M230 764.5h1M230 769.5h1M230 773.5h1M230 778.5h1M230 783.5h1M230 787.5h1M230 792.5h1M230 797.5h1M230 801.5h1M230 806.5h1M230 811.5h1M230 815.5h1M230 820.5h1M230 824.5h1M230 829.5h1M230 834.5h1M230 838.5h1M230 843.5h1M230 848.5h1M230 852.5h1M230 857.5h1M230 862.5h1M230 866.5h1M230 871.5h1M230 875.5h1M230 880.5h1M230 885.5h1M230 889.5h1M230 894.5h1M230 899.5h1M230 903.5h1M230 908.5h1M230 913.5h1M230 917.5h1M230 922.5h1M230 927.5h1M230 931.5h1M230 936.5h1M230 940.5h1M230 945.5h1M230 950.5h1M230 954.5h1M230 959.5h1M230 964.5h1M230 968.5h1M230 973.5h1M230 978.5h1M230 983.5h1M405 58.5h1M405 63.5h1M405 67.5h1M405 72.5h1M405 77.5h1M405 81.5h1M405 86.5h1M405 90.5h1M405 95.5h1M405 100.5h1M405 104.5h1M405 109.5h1M405 114.5h1M405 118.5h1M405 123.5h1M405 128.5h1M405 132.5h1M405 137.5h1M405 142.5h1M405 146.5h1M405 151.5h1M405 155.5h1M405 160.5h1M405 165.5h1M405 169.5h1M405 174.5h1M405 179.5h1M405 183.5h1M405 188.5h1M405 193.5h1M405 197.5h1M405 202.5h1M405 206.5h1M405 211.5h1M405 216.5h1M405 220.5h1M405 225.5h1M405 230.5h1M405 234.5h1M405 239.5h1M405 244.5h1M405 248.5h1M405 253.5h1M405 258.5h1M405 262.5h1M405 267.5h1M405 271.5h1M405 276.5h1M405 281.5h1M405 285.5h1M405 292.5h1M405 297.5h1M405 301.5h1M405 306.5h1M405 311.5h1M405 315.5h1M405 320.5h1M405 324.5h1M405 329.5h1M405 334.5h1M405 338.5h1M405 343.5h1M405 348.5h1M405 352.5h1M405 357.5h1M405 362.5h1M405 366.5h1M405 371.5h1M405 376.5h1M405 380.5h1M405 385.5h1M405 389.5h1M405 394.5h1M405 399.5h1M405 403.5h1M405 408.5h1M405 413.5h1M405 417.5h1M405 422.5h1M405 427.5h1M405 431.5h1M405 436.5h1M405 440.5h1M405 445.5h1M405 450.5h1M405 454.5h1M405 459.5h1M405 464.5h1M405 468.5h1M405 473.5h1M405 478.5h1M405 482.5h1M405 487.5h1M405 492.5h1M405 496.5h1M405 501.5h1M405 505.5h1M405 510.5h1M405 515.5h1M405 519.5h1M405 526.5h1M405 531.5h1M405 535.5h1M405 540.5h1M405 545.5h1M405 549.5h1M405 554.5h1M405 558.5h1M405 563.5h1M405 568.5h1M405 572.5h1M405 577.5h1M405 582.5h1M405 586.5h1M405 591.5h1M405 596.5h1M405 600.5h1M405 605.5h1M405 610.5h1M405 614.5h1M405 619.5h1M405 623.5h1M405 628.5h1M405 633.5h1M405 637.5h1M405 642.5h1M405 647.5h1M405 651.5h1M405 656.5h1M405 661.5h1M405 665.5h1M405 670.5h1M405 674.5h1M405 679.5h1M405 684.5h1M405 688.5h1M405 693.5h1M405 698.5h1M405 702.5h1M405 707.5h1M405 712.5h1M405 716.5h1M405 721.5h1M405 726.5h1M405 730.5h1M405 735.5h1M405 739.5h1M405 744.5h1M405 749.5h1M405 753.5h1M405 764.5h1M405 769.5h1M405 773.5h1M405 778.5h1M405 783.5h1M405 787.5h1M405 792.5h1M405 797.5h1M405 801.5h1M405 806.5h1M405 811.5h1M405 815.5h1M405 820.5h1M405 824.5h1M405 829.5h1M405 834.5h1M405 838.5h1M405 843.5h1M405 848.5h1M405 852.5h1M405 857.5h1M405 862.5h1M405 866.5h1M405 871.5h1M405 875.5h1M405 880.5h1M405 885.5h1M405 889.5h1M405 894.5h1M405 899.5h1M405 903.5h1M405 908.5h1M405 913.5h1M405 917.5h1M405 922.5h1M405 927.5h1M405 931.5h1M405 936.5h1M405 940.5h1M405 945.5h1M405 950.5h1M405 954.5h1M405 959.5h1M405 964.5h1M405 968.5h1M405 973.5h1M405 978.5h1M405 983.5h1M580 58.5h1M580 63.5h1M580 67.5h1M580 72.5h1M580 77.5h1M580 81.5h1M580 86.5h1M580 90.5h1M580 95.5h1M580 100.5h1M580 104.5h1M580 109.5h1M580 114.5h1M580 118.5h1M580 123.5h1M580 128.5h1M580 132.5h1M580 137.5h1M580 142.5h1M580 146.5h1M580 151.5h1M580 155.5h1M580 160.5h1M580 165.5h1M580 169.5h1M580 174.5h1M580 179.5h1M580 183.5h1M580 188.5h1M580 193.5h1M580 197.5h1M580 202.5h1M580 206.5h1M580 211.5h1M580 216.5h1M580 220.5h1M580 225.5h1M580 230.5h1M580 234.5h1M580 239.5h1M580 244.5h1M580 248.5h1M580 253.5h1M580 258.5h1M580 262.5h1M580 267.5h1M580 271.5h1M580 276.5h1M580 281.5h1M580 285.5h1M580 292.5h1M580 297.5h1M580 301.5h1M580 306.5h1M580 311.5h1M580 315.5h1M580 320.5h1M580 324.5h1M580 329.5h1M580 334.5h1M580 338.5h1M580 343.5h1M580 348.5h1M580 352.5h1M580 357.5h1M580 362.5h1M580 366.5h1M580 371.5h1M580 376.5h1M580 380.5h1M580 385.5h1M580 389.5h1M580 394.5h1M580 399.5h1M580 403.5h1M580 408.5h1M580 413.5h1M580 417.5h1M580 422.5h1M580 427.5h1M580 431.5h1M580 436.5h1M580 440.5h1M580 445.5h1M580 450.5h1M580 454.5h1M580 459.5h1M580 464.5h1M580 468.5h1M580 473.5h1M580 478.5h1M580 482.5h1M580 487.5h1M580 492.5h1M580 496.5h1M580 501.5h1M580 505.5h1M580 510.5h1M580 515.5h1M580 519.5h1M580 526.5h1M580 531.5h1M580 535.5h1M580 540.5h1M580 545.5h1M580 549.5h1M580 554.5h1M580 558.5h1M580 563.5h1M580 568.5h1M580 572.5h1M580 577.5h1M580 582.5h1M580 586.5h1M580 591.5h1M580 596.5h1M580 600.5h1M580 605.5h1M580 610.5h1M580 614.5h1M580 619.5h1M580 623.5h1M580 628.5h1M580 633.5h1M580 637.5h1M580 642.5h1M580 647.5h1M580 651.5h1M580 656.5h1M580 661.5h1M580 665.5h1M580 670.5h1M580 674.5h1M580 679.5h1M580 684.5h1M580 688.5h1M580 693.5h1M580 698.5h1M580 702.5h1M580 707.5h1M580 712.5h1M580 716.5h1M580 721.5h1M580 726.5h1M580 730.5h1M580 735.5h1M580 739.5h1M580 744.5h1M580 749.5h1M580 753.5h1M580 764.5h1M580 769.5h1M580 773.5h1M580 778.5h1M580 783.5h1M580 787.5h1M580 792.5h1M580 797.5h1M580 801.5h1M580 806.5h1M580 811.5h1M580 815.5h1M580 820.5h1M580 824.5h1M580 829.5h1M580 834.5h1M580 838.5h1M580 843.5h1M580 848.5h1M580 852.5h1M580 857.5h1M580 862.5h1M580 866.5h1M580 871.5h1M580 875.5h1M580 880.5h1M580 885.5h1M580 889.5h1M580 894.5h1M580 899.5h1M580 903.5h1M580 908.5h1M580 913.5h1M580 917.5h1M580 922.5h1M580 927.5h1M580 931.5h1M580 936.5h1M580 940.5h1M580 945.5h1M580 950.5h1M580 954.5h1M580 959.5h1M580 964.5h1M580 968.5h1M580 973.5h1M580 978.5h1M580 983.5h1M755 58.5h1M755 63.5h1M755 67.5h1M755 72.5h1M755 77.5h1M755 81.5h1M755 86.5h1M755 90.5h1M755 95.5h1M755 100.5h1M755 104.5h1M755 109.5h1M755 114.5h1M755 118.5h1M755 123.5h1M755 128.5h1M755 132.5h1M755 137.5h1M755 142.5h1M755 146.5h1M755 151.5h1M755 155.5h1M755 160.5h1M755 165.5h1M755 169.5h1M755 174.5h1M755 179.5h1M755 183.5h1M755 188.5h1M755 193.5h1M755 197.5h1M755 202.5h1M755 206.5h1M755 211.5h1M755 216.5h1M755 220.5h1M755 225.5h1M755 230.5h1M755 234.5h1M755 239.5h1M755 244.5h1M755 248.5h1M755 253.5h1M755 258.5h1M755 262.5h1M755 267.5h1M755 271.5h1M755 276.5h1M755 281.5h1M755 285.5h1M755 292.5h1M755 297.5h1M755 301.5h1M755 306.5h1M755 311.5h1M755 315.5h1M755 320.5h1M755 324.5h1M755 329.5h1M755 334.5h1M755 338.5h1M755 343.5h1M755 348.5h1M755 352.5h1M755 357.5h1M755 362.5h1M755 366.5h1M755 371.5h1M755 376.5h1M755 380.5h1M755 385.5h1M755 389.5h1M755 394.5h1M755 399.5h1M755 403.5h1M755 408.5h1M755 413.5h1M755 417.5h1M755 422.5h1M755 427.5h1M755 431.5h1M755 436.5h1M755 440.5h1M755 445.5h1M755 450.5h1M755 454.5h1M755 459.5h1M755 464.5h1M755 468.5h1M755 473.5h1M755 478.5h1M755 482.5h1M755 487.5h1M755 492.5h1M755 496.5h1M755 501.5h1M755 505.5h1M755 510.5h1M755 515.5h1M755 519.5h1M755 526.5h1M755 531.5h1M755 535.5h1M755 540.5h1M755 545.5h1M755 549.5h1M755 554.5h1M755 558.5h1M755 563.5h1M755 568.5h1M755 572.5h1M755 577.5h1M755 582.5h1M755 586.5h1M755 591.5h1M755 596.5h1M755 600.5h1M755 605.5h1M755 610.5h1M755 614.5h1M755 619.5h1M755 623.5h1M755 628.5h1M755 633.5h1M755 637.5h1M755 642.5h1M755 647.5h1M755 651.5h1M755 656.5h1M755 661.5h1M755 665.5h1M755 670.5h1M755 674.5h1M755 679.5h1M755 684.5h1M755 688.5h1M755 693.5h1M755 698.5h1M755 702.5h1M755 707.5h1M755 712.5h1M755 716.5h1M755 721.5h1M755 726.5h1M755 730.5h1M755 735.5h1M755 739.5h1M755 744.5h1M755 749.5h1M755 753.5h1M755 764.5h1M755 769.5h1M755 773.5h1M755 778.5h1M755 783.5h1M755 787.5h1M755 792.5h1M755 797.5h1M755 801.5h1M755 806.5h1M755 811.5h1M755 815.5h1M755 820.5h1M755 824.5h1M755 829.5h1M755 834.5h1M755 838.5h1M755 843.5h1M755 848.5h1M755 852.5h1M755 857.5h1M755 862.5h1M755 866.5h1M755 871.5h1M755 875.5h1M755 880.5h1M755 885.5h1M755 889.5h1M755 894.5h1M755 899.5h1M755 903.5h1M755 908.5h1M755 913.5h1M755 917.5h1M755 922.5h1M755 927.5h1M755 931.5h1M755 936.5h1M755 940.5h1M755 945.5h1M755 950.5h1M755 954.5h1M755 959.5h1M755 964.5h1M755 968.5h1M755 973.5h1M755 978.5h1M755 983.5h1M929 58.5h1M929 63.5h1M929 67.5h1M929 72.5h1M929 77.5h1M929 81.5h1M929 86.5h1M929 90.5h1M929 95.5h1M929 100.5h1M929 104.5h1M929 109.5h1M929 114.5h1M929 118.5h1M929 123.5h1M929 128.5h1M929 132.5h1M929 137.5h1M929 142.5h1M929 146.5h1M929 151.5h1M929 155.5h1M929 160.5h1M929 165.5h1M929 169.5h1M929 174.5h1M929 179.5h1M929 183.5h1M929 188.5h1M929 193.5h1M929 197.5h1M929 202.5h1M929 206.5h1M929 211.5h1M929 216.5h1M929 220.5h1M929 225.5h1M929 230.5h1M929 234.5h1M929 239.5h1M929 244.5h1M929 248.5h1M929 253.5h1M929 258.5h1M929 262.5h1M929 267.5h1M929 271.5h1M929 276.5h1M929 281.5h1M929 285.5h1M929 292.5h1M929 297.5h1M929 301.5h1M929 306.5h1M929 311.5h1M929 315.5h1M929 320.5h1M929 324.5h1M929 329.5h1M929 334.5h1M929 338.5h1M929 343.5h1M929 348.5h1M929 352.5h1M929 357.5h1M929 362.5h1M929 366.5h1M929 371.5h1M929 376.5h1M929 380.5h1M929 385.5h1M929 389.5h1M929 394.5h1M929 399.5h1M929 403.5h1M929 408.5h1M929 413.5h1M929 417.5h1M929 422.5h1M929 427.5h1M929 431.5h1M929 436.5h1M929 440.5h1M929 445.5h1M929 450.5h1M929 454.5h1M929 459.5h1M929 464.5h1M929 468.5h1M929 473.5h1M929 478.5h1M929 482.5h1M929 487.5h1M929 492.5h1M929 496.5h1M929 501.5h1M929 505.5h1M929 510.5h1M929 515.5h1M929 519.5h1M929 526.5h1M929 531.5h1M929 535.5h1M929 540.5h1M929 545.5h1M929 549.5h1M929 554.5h1M929 558.5h1M929 563.5h1M929 568.5h1M929 572.5h1M929 577.5h1M929 582.5h1M929 586.5h1M929 591.5h1M929 596.5h1M929 600.5h1M929 605.5h1M929 610.5h1M929 614.5h1M929 619.5h1M929 623.5h1M929 628.5h1M929 633.5h1M929 637.5h1M929 642.5h1M929 647.5h1M929 651.5h1M929 656.5h1M929 661.5h1M929 665.5h1M929 670.5h1M929 674.5h1M929 679.5h1M929 684.5h1M929 688.5h1M929 693.5h1M929 698.5h1M929 702.5h1M929 707.5h1M929 712.5h1M929 716.5h1M929 721.5h1M929 726.5h1M929 730.5h1M929 735.5h1M929 739.5h1M929 744.5h1M929 749.5h1M929 753.5h1M929 764.5h1M929 769.5h1M929 773.5h1M929 778.5h1M929 783.5h1M929 787.5h1M929 792.5h1M929 797.5h1M929 801.5h1M929 806.5h1M929 811.5h1M929 815.5h1M929 820.5h1M929 824.5h1M929 829.5h1M929 834.5h1M929 838.5h1M929 843.5h1M929 848.5h1M929 852.5h1M929 857.5h1M929 862.5h1M929 866.5h1M929 871.5h1M929 875.5h1M929 880.5h1M929 885.5h1M929 889.5h1M929 894.5h1M929 899.5h1M929 903.5h1M929 908.5h1M929 913.5h1M929 917.5h1M929 922.5h1M929 927.5h1M929 931.5h1M929 936.5h1M929 940.5h1M929 945.5h1M929 950.5h1M929 954.5h1M929 959.5h1M929 964.5h1M929 968.5h1M929 973.5h1M929 978.5h1M929 983.5h1M1104 58.5h1M1104 63.5h1M1104 67.5h1M1104 72.5h1M1104 77.5h1M1104 81.5h1M1104 86.5h1M1104 90.5h1M1104 95.5h1M1104 100.5h1M1104 104.5h1M1104 109.5h1M1104 114.5h1M1104 118.5h1M1104 123.5h1M1104 128.5h1M1104 132.5h1M1104 137.5h1M1104 142.5h1M1104 146.5h1M1104 151.5h1M1104 155.5h1M1104 160.5h1M1104 165.5h1M1104 169.5h1M1104 174.5h1M1104 179.5h1M1104 183.5h1M1104 188.5h1M1104 193.5h1M1104 197.5h1M1104 202.5h1M1104 206.5h1M1104 211.5h1M1104 216.5h1M1104 220.5h1M1104 225.5h1M1104 230.5h1M1104 234.5h1M1104 239.5h1M1104 244.5h1M1104 248.5h1M1104 253.5h1M1104 258.5h1M1104 262.5h1M1104 267.5h1M1104 271.5h1M1104 276.5h1M1104 281.5h1M1104 285.5h1M1104 292.5h1M1104 297.5h1M1104 301.5h1M1104 306.5h1M1104 311.5h1M1104 315.5h1M1104 320.5h1M1104 324.5h1M1104 329.5h1M1104 334.5h1M1104 338.5h1M1104 343.5h1M1104 348.5h1M1104 352.5h1M1104 357.5h1M1104 362.5h1M1104 366.5h1M1104 371.5h1M1104 376.5h1M1104 380.5h1M1104 385.5h1M1104 389.5h1M1104 394.5h1M1104 399.5h1M1104 403.5h1M1104 408.5h1M1104 413.5h1M1104 417.5h1M1104 422.5h1M1104 427.5h1M1104 431.5h1M1104 436.5h1M1104 440.5h1M1104 445.5h1M1104 450.5h1M1104 454.5h1M1104 459.5h1M1104 464.5h1M1104 468.5h1M1104 473.5h1M1104 478.5h1M1104 482.5h1M1104 487.5h1M1104 492.5h1M1104 496.5h1M1104 501.5h1M1104 505.5h1M1104 510.5h1M1104 515.5h1M1104 519.5h1M1104 526.5h1M1104 531.5h1M1104 535.5h1M1104 540.5h1M1104 545.5h1M1104 549.5h1M1104 554.5h1M1104 558.5h1M1104 563.5h1M1104 568.5h1M1104 572.5h1M1104 577.5h1M1104 582.5h1M1104 586.5h1M1104 591.5h1M1104 596.5h1M1104 600.5h1M1104 605.5h1M1104 610.5h1M1104 614.5h1M1104 619.5h1M1104 623.5h1M1104 628.5h1M1104 633.5h1M1104 637.5h1M1104 642.5h1M1104 647.5h1M1104 651.5h1M1104 656.5h1M1104 661.5h1M1104 665.5h1M1104 670.5h1M1104 674.5h1M1104 679.5h1M1104 684.5h1M1104 688.5h1M1104 693.5h1M1104 698.5h1M1104 702.5h1M1104 707.5h1M1104 712.5h1M1104 716.5h1M1104 721.5h1M1104 726.5h1M1104 730.5h1M1104 735.5h1M1104 739.5h1M1104 744.5h1M1104 749.5h1M1104 753.5h1M1104 764.5h1M1104 769.5h1M1104 773.5h1M1104 778.5h1M1104 783.5h1M1104 787.5h1M1104 792.5h1M1104 797.5h1M1104 801.5h1M1104 806.5h1M1104 811.5h1M1104 815.5h1M1104 820.5h1M1104 824.5h1M1104 829.5h1M1104 834.5h1M1104 838.5h1M1104 843.5h1M1104 848.5h1M1104 852.5h1M1104 857.5h1M1104 862.5h1M1104 866.5h1M1104 871.5h1M1104 875.5h1M1104 880.5h1M1104 885.5h1M1104 889.5h1M1104 894.5h1M1104 899.5h1M1104 903.5h1M1104 908.5h1M1104 913.5h1M1104 917.5h1M1104 922.5h1M1104 927.5h1M1104 931.5h1M1104 936.5h1M1104 940.5h1M1104 945.5h1M1104 950.5h1M1104 954.5h1M1104 959.5h1M1104 964.5h1M1104 968.5h1M1104 973.5h1M1104 978.5h1M1104 983.5h1M1279 58.5h1M1279 63.5h1M1279 67.5h1M1279 72.5h1M1279 77.5h1M1279 81.5h1M1279 86.5h1M1279 90.5h1M1279 95.5h1M1279 100.5h1M1279 104.5h1M1279 109.5h1M1279 114.5h1M1279 118.5h1M1279 123.5h1M1279 128.5h1M1279 132.5h1M1279 137.5h1M1279 142.5h1M1279 146.5h1M1279 151.5h1M1279 155.5h1M1279 160.5h1M1279 165.5h1M1279 169.5h1M1279 174.5h1M1279 179.5h1M1279 183.5h1M1279 188.5h1M1279 193.5h1M1279 197.5h1M1279 202.5h1M1279 206.5h1M1279 211.5h1M1279 216.5h1M1279 220.5h1M1279 225.5h1M1279 230.5h1M1279 234.5h1M1279 239.5h1M1279 244.5h1M1279 248.5h1M1279 253.5h1M1279 258.5h1M1279 262.5h1M1279 267.5h1M1279 271.5h1M1279 276.5h1M1279 281.5h1M1279 285.5h1M1279 292.5h1M1279 297.5h1M1279 301.5h1M1279 306.5h1M1279 311.5h1M1279 315.5h1M1279 320.5h1M1279 324.5h1M1279 329.5h1M1279 334.5h1M1279 338.5h1M1279 343.5h1M1279 348.5h1M1279 352.5h1M1279 357.5h1M1279 362.5h1M1279 366.5h1M1279 371.5h1M1279 376.5h1M1279 380.5h1M1279 385.5h1M1279 389.5h1M1279 394.5h1M1279 399.5h1M1279 403.5h1M1279 408.5h1M1279 413.5h1M1279 417.5h1M1279 422.5h1M1279 427.5h1M1279 431.5h1M1279 436.5h1M1279 440.5h1M1279 445.5h1M1279 450.5h1M1279 454.5h1M1279 459.5h1M1279 464.5h1M1279 468.5h1M1279 473.5h1M1279 478.5h1M1279 482.5h1M1279 487.5h1M1279 492.5h1M1279 496.5h1M1279 501.5h1M1279 505.5h1M1279 510.5h1M1279 515.5h1M1279 519.5h1M1279 526.5h1M1279 531.5h1M1279 535.5h1M1279 540.5h1M1279 545.5h1M1279 549.5h1M1279 554.5h1M1279 558.5h1M1279 563.5h1M1279 568.5h1M1279 572.5h1M1279 577.5h1M1279 582.5h1M1279 586.5h1M1279 591.5h1M1279 596.5h1M1279 600.5h1M1279 605.5h1M1279 610.5h1M1279 614.5h1M1279 619.5h1M1279 623.5h1M1279 628.5h1M1279 633.5h1M1279 637.5h1M1279 642.5h1M1279 647.5h1M1279 651.5h1M1279 656.5h1M1279 661.5h1M1279 665.5h1M1279 670.5h1M1279 674.5h1M1279 679.5h1M1279 684.5h1M1279 688.5h1M1279 693.5h1M1279 698.5h1M1279 702.5h1M1279 707.5h1M1279 712.5h1M1279 716.5h1M1279 721.5h1M1279 726.5h1M1279 730.5h1M1279 735.5h1M1279 739.5h1M1279 744.5h1M1279 749.5h1M1279 753.5h1M1279 764.5h1M1279 769.5h1M1279 773.5h1M1279 778.5h1M1279 783.5h1M1279 787.5h1M1279 792.5h1M1279 797.5h1M1279 801.5h1M1279 806.5h1M1279 811.5h1M1279 815.5h1M1279 820.5h1M1279 824.5h1M1279 829.5h1M1279 834.5h1M1279 838.5h1M1279 843.5h1M1279 848.5h1M1279 852.5h1M1279 857.5h1M1279 862.5h1M1279 866.5h1M1279 871.5h1M1279 875.5h1M1279 880.5h1M1279 885.5h1M1279 889.5h1M1279 894.5h1M1279 899.5h1M1279 903.5h1M1279 908.5h1M1279 913.5h1M1279 917.5h1M1279 922.5h1M1279 927.5h1M1279 931.5h1M1279 936.5h1M1279 940.5h1M1279 945.5h1M1279 950.5h1M1279 954.5h1M1279 959.5h1M1279 964.5h1M1279 968.5h1M1279 973.5h1M1279 978.5h1M1279 983.5h1M1454 58.5h1M1454 63.5h1M1454 67.5h1M1454 72.5h1M1454 77.5h1M1454 81.5h1M1454 86.5h1M1454 90.5h1M1454 95.5h1M1454 100.5h1M1454 104.5h1M1454 109.5h1M1454 114.5h1M1454 118.5h1M1454 123.5h1M1454 128.5h1M1454 132.5h1M1454 137.5h1M1454 142.5h1M1454 146.5h1M1454 151.5h1M1454 155.5h1M1454 160.5h1M1454 165.5h1M1454 169.5h1M1454 174.5h1M1454 179.5h1M1454 183.5h1M1454 188.5h1M1454 193.5h1M1454 197.5h1M1454 202.5h1M1454 206.5h1M1454 211.5h1M1454 216.5h1M1454 220.5h1M1454 225.5h1M1454 230.5h1M1454 234.5h1M1454 239.5h1M1454 244.5h1M1454 248.5h1M1454 253.5h1M1454 258.5h1M1454 262.5h1M1454 267.5h1M1454 271.5h1M1454 276.5h1M1454 281.5h1M1454 285.5h1M1454 292.5h1M1454 297.5h1M1454 301.5h1M1454 306.5h1M1454 311.5h1M1454 315.5h1M1454 320.5h1M1454 324.5h1M1454 329.5h1M1454 334.5h1M1454 338.5h1M1454 343.5h1M1454 348.5h1M1454 352.5h1M1454 357.5h1M1454 362.5h1M1454 366.5h1M1454 371.5h1M1454 376.5h1M1454 380.5h1M1454 385.5h1M1454 389.5h1M1454 394.5h1M1454 399.5h1M1454 403.5h1M1454 408.5h1M1454 413.5h1M1454 417.5h1M1454 422.5h1M1454 427.5h1M1454 431.5h1M1454 436.5h1M1454 440.5h1M1454 445.5h1M1454 450.5h1M1454 454.5h1M1454 459.5h1M1454 464.5h1M1454 468.5h1M1454 473.5h1M1454 478.5h1M1454 482.5h1M1454 487.5h1M1454 492.5h1M1454 496.5h1M1454 501.5h1M1454 505.5h1M1454 510.5h1M1454 515.5h1M1454 519.5h1M1454 526.5h1M1454 531.5h1M1454 535.5h1M1454 540.5h1M1454 545.5h1M1454 549.5h1M1454 554.5h1M1454 558.5h1M1454 563.5h1M1454 568.5h1M1454 572.5h1M1454 577.5h1M1454 582.5h1M1454 586.5h1M1454 591.5h1M1454 596.5h1M1454 600.5h1M1454 605.5h1M1454 610.5h1M1454 614.5h1M1454 619.5h1M1454 623.5h1M1454 628.5h1M1454 633.5h1M1454 637.5h1M1454 642.5h1M1454 647.5h1M1454 651.5h1M1454 656.5h1M1454 661.5h1M1454 665.5h1M1454 670.5h1M1454 674.5h1M1454 679.5h1M1454 684.5h1M1454 688.5h1M1454 693.5h1M1454 698.5h1M1454 702.5h1M1454 707.5h1M1454 712.5h1M1454 716.5h1M1454 721.5h1M1454 726.5h1M1454 730.5h1M1454 735.5h1M1454 739.5h1M1454 744.5h1M1454 749.5h1M1454 753.5h1M1454 764.5h1M1454 769.5h1M1454 773.5h1M1454 778.5h1M1454 783.5h1M1454 787.5h1M1454 792.5h1M1454 797.5h1M1454 801.5h1M1454 806.5h1M1454 811.5h1M1454 815.5h1M1454 820.5h1M1454 824.5h1M1454 829.5h1M1454 834.5h1M1454 838.5h1M1454 843.5h1M1454 848.5h1M1454 852.5h1M1454 857.5h1M1454 862.5h1M1454 866.5h1M1454 871.5h1M1454 875.5h1M1454 880.5h1M1454 885.5h1M1454 889.5h1M1454 894.5h1M1454 899.5h1M1454 903.5h1M1454 908.5h1M1454 913.5h1M1454 917.5h1M1454 922.5h1M1454 927.5h1M1454 931.5h1M1454 936.5h1M1454 940.5h1M1454 945.5h1M1454 950.5h1M1454 954.5h1M1454 959.5h1M1454 964.5h1M1454 968.5h1M1454 973.5h1M1454 978.5h1M1454 983.5h1M1629 58.5h1M1629 63.5h1M1629 67.5h1M1629 72.5h1M1629 77.5h1M1629 81.5h1M1629 86.5h1M1629 90.5h1M1629 95.5h1M1629 100.5h1M1629 104.5h1M1629 109.5h1M1629 114.5h1M1629 118.5h1M1629 123.5h1M1629 128.5h1M1629 132.5h1M1629 137.5h1M1629 142.5h1M1629 146.5h1M1629 151.5h1M1629 155.5h1M1629 160.5h1M1629 165.5h1M1629 169.5h1M1629 174.5h1M1629 179.5h1M1629 183.5h1M1629 188.5h1M1629 193.5h1M1629 197.5h1M1629 202.5h1M1629 206.5h1M1629 211.5h1M1629 216.5h1M1629 220.5h1M1629 225.5h1M1629 230.5h1M1629 234.5h1M1629 239.5h1M1629 244.5h1M1629 248.5h1M1629 253.5h1M1629 258.5h1M1629 262.5h1M1629 267.5h1M1629 271.5h1M1629 276.5h1M1629 281.5h1M1629 285.5h1M1629 292.5h1M1629 297.5h1M1629 301.5h1M1629 306.5h1M1629 311.5h1M1629 315.5h1M1629 320.5h1M1629 324.5h1M1629 329.5h1M1629 334.5h1M1629 338.5h1M1629 343.5h1M1629 348.5h1M1629 352.5h1M1629 357.5h1M1629 362.5h1M1629 366.5h1M1629 371.5h1M1629 376.5h1M1629 380.5h1M1629 385.5h1M1629 389.5h1M1629 394.5h1M1629 399.5h1M1629 403.5h1M1629 408.5h1M1629 413.5h1M1629 417.5h1M1629 422.5h1M1629 427.5h1M1629 431.5h1M1629 436.5h1M1629 440.5h1M1629 445.5h1M1629 450.5h1M1629 454.5h1M1629 459.5h1M1629 464.5h1M1629 468.5h1M1629 473.5h1M1629 478.5h1M1629 482.5h1M1629 487.5h1M1629 492.5h1M1629 496.5h1M1629 501.5h1M1629 505.5h1M1629 510.5h1M1629 515.5h1M1629 519.5h1M1629 526.5h1M1629 531.5h1M1629 535.5h1M1629 540.5h1M1629 545.5h1M1629 549.5h1M1629 554.5h1M1629 558.5h1M1629 563.5h1M1629 568.5h1M1629 572.5h1M1629 577.5h1M1629 582.5h1M1629 586.5h1M1629 591.5h1M1629 596.5h1M1629 600.5h1M1629 605.5h1M1629 610.5h1M1629 614.5h1M1629 619.5h1M1629 623.5h1M1629 628.5h1M1629 633.5h1M1629 637.5h1M1629 642.5h1M1629 647.5h1M1629 651.5h1M1629 656.5h1M1629 661.5h1M1629 665.5h1M1629 670.5h1M1629 674.5h1M1629 679.5h1M1629 684.5h1M1629 688.5h1M1629 693.5h1M1629 698.5h1M1629 702.5h1M1629 707.5h1M1629 712.5h1M1629 716.5h1M1629 721.5h1M1629 726.5h1M1629 730.5h1M1629 735.5h1M1629 739.5h1M1629 744.5h1M1629 749.5h1M1629 753.5h1M1629 764.5h1M1629 769.5h1M1629 773.5h1M1629 778.5h1M1629 783.5h1M1629 787.5h1M1629 792.5h1M1629 797.5h1M1629 801.5h1M1629 806.5h1M1629 811.5h1M1629 815.5h1M1629 820.5h1M1629 824.5h1M1629 829.5h1M1629 834.5h1M1629 838.5h1M1629 843.5h1M1629 848.5h1M1629 852.5h1M1629 857.5h1M1629 862.5h1M1629 866.5h1M1629 871.5h1M1629 875.5h1M1629 880.5h1M1629 885.5h1M1629 889.5h1M1629 894.5h1M1629 899.5h1M1629 903.5h1M1629 908.5h1M1629 913.5h1M1629 917.5h1M1629 922.5h1M1629 927.5h1M1629 931.5h1M1629 936.5h1M1629 940.5h1M1629 945.5h1M1629 950.5h1M1629 954.5h1M1629 959.5h1M1629 964.5h1M1629 968.5h1M1629 973.5h1M1629 978.5h1M1629 983.5h1" stroke="#c4c4c4" stroke-width="1" fill="none" shape-rendering="crispEdges"/>
<rect x="1716" y="74" width="31" height="16" fill="#000"/>
<rect x="1716" y="97" width="31" height="16" fill="#000"/>
<rect x="1716" y="120" width="31" height="16" fill="#000"/>
<rect x="1716" y="144" width="31" height="16" fill="#000"/>
<rect x="1716" y="167" width="31" height="16" fill="#000"/>
<rect x="1716" y="190" width="31" height="16" fill="#000"/>
<rect x="1716" y="213" width="31" height="16" fill="#000"/>
<rect x="1723" y="236" width="24" height="16" fill="#000"/>
<rect x="1723" y="260" width="24" height="16" fill="#000"/>
<rect x="1723" y="308" width="24" height="16" fill="#000"/>
<rect x="1696" y="331" width="51" height="16" fill="#000"/>
<rect x="1696" y="354" width="51" height="16" fill="#000"/>
<rect x="1696" y="377" width="51" height="16" fill="#000"/>
<rect x="1696" y="400" width="51" height="16" fill="#000"/>
<rect x="1723" y="424" width="24" height="16" fill="#000"/>
<rect x="1692" y="447" width="55" height="16" fill="#000"/>
<rect x="1692" y="470" width="55" height="16" fill="#000"/>
<rect x="1692" y="493" width="55" height="16" fill="#000"/>
<rect x="1671" y="542" width="76" height="16" fill="#000"/>
<rect x="1671" y="565" width="76" height="16" fill="#000"/>
<rect x="1671" y="588" width="76" height="16" fill="#000"/>
<rect x="1671" y="612" width="76" height="16" fill="#000"/>
<rect x="1671" y="635" width="76" height="16" fill="#000"/>
<rect x="1671" y="658" width="76" height="16" fill="#000"/>
<rect x="1671" y="681" width="76" height="16" fill="#000"/>
<rect x="1679" y="704" width="68" height="16" fill="#000"/>
<rect x="1724" y="728" width="23" height="16" fill="#000"/>
<rect x="1667" y="766" width="80" height="16" fill="#000"/>
<rect x="1667" y="789" width="80" height="16" fill="#000"/>
<rect x="1667" y="812" width="80" height="16" fill="#000"/>
<rect x="1667" y="835" width="80" height="16" fill="#000"/>
<rect x="1667" y="858" width="80" height="16" fill="#000"/>
<rect x="1667" y="882" width="80" height="16" fill="#000"/>
<rect x="1667" y="905" width="80" height="16" fill="#000"/>
<rect x="1682" y="928" width="65" height="16" fill="#000"/>
<rect x="1724" y="952" width="23" height="16" fill="#000"/>
<rect x="1678" y="976" width="69" height="16" fill="#000"/>
<line x1="3" y1="267.5" x2="1719" y2="267.5" stroke="#000" stroke-width="1"/>
<line x1="2.9" y1="267.5" x2="1719" y2="267.5" stroke="#c8c8c8" stroke-width="1.15" stroke-dasharray="5.2 4.8"/>
<line x1="3" y1="431.5" x2="1719" y2="431.5" stroke="#000" stroke-width="1"/>
<line x1="2.9" y1="431.5" x2="1719" y2="431.5" stroke="#c8c8c8" stroke-width="1.15" stroke-dasharray="5.2 4.8"/>
<line x1="3" y1="735.5" x2="1719" y2="735.5" stroke="#000" stroke-width="1"/>
<line x1="2.9" y1="735.5" x2="1719" y2="735.5" stroke="#c8c8c8" stroke-width="1.15" stroke-dasharray="5.2 4.8"/>
<line x1="3" y1="959.5" x2="1719" y2="959.5" stroke="#000" stroke-width="1"/>
<line x1="2.9" y1="959.5" x2="1719" y2="959.5" stroke="#c8c8c8" stroke-width="1.15" stroke-dasharray="5.2 4.8"/>
<line x1="55.5" y1="58" x2="55.5" y2="290" stroke="#d4d4d4" stroke-width="1.1" stroke-dasharray="5 4.967" stroke-dashoffset="2.8"/>
<line x1="55.5" y1="292" x2="55.5" y2="524" stroke="#d4d4d4" stroke-width="1.1" stroke-dasharray="5 4.967" stroke-dashoffset="2.8"/>
<line x1="55.5" y1="526" x2="55.5" y2="758" stroke="#d4d4d4" stroke-width="1.1" stroke-dasharray="5 4.967" stroke-dashoffset="2.8"/>
<line x1="55.5" y1="760" x2="55.5" y2="993" stroke="#d4d4d4" stroke-width="1.1" stroke-dasharray="5 4.967" stroke-dashoffset="2.8"/>
<path d="M3.5 265V266M4.5 265V267M5.5 265V267M6.5 265V267M7.5 265V267M8.5 265V266M9.5 265V267M10.5 265V267M11.5 265V267M12.5 266V267M13.5 266V267M14.5 266V267M15.5 266V267M16.5 266V267M17.5 266V267M18.5 266V267M19.5 266V267M20.5 265V267M21.5 266V267M22.5 265V267M23.5 266V267M24.5 266V267M25.5 265V267M26.5 265V267M27.5 265V267M28.5 265V267M29.5 265V267M30.5 265V267M31.5 265V267M32.5 265V266M33.5 265V266M34.5 265V267M35.5 265V266M36.5 265V267M37.5 265V266M38.5 265V266M39.5 265V266M40.5 265V266M41.5 265V266M42.5 265V266M43.5 265V266M44.5 265V266M45.5 265V266M46.5 265V266M47.5 265V266M48.5 265V266M49.5 265V266M50.5 265V266M51.5 265V266M52.5 265V266M53.5 265V266M54.5 265V267M55.5 259V268M56.5 263V272M57.5 263V267M58.5 265V267M59.5 265V266M60.5 265V266M61.5 265V266M62.5 265V267M63.5 265V266M64.5 265V267M65.5 265V267M66.5 265V266M67.5 265V266M68.5 265V267M69.5 265V267M70.5 265V267M71.5 265V267M72.5 265V267M73.5 265V267M74.5 265V266M75.5 265V267M76.5 265V267M77.5 265V267M78.5 265V266M79.5 265V266M80.5 265V266M81.5 265V266M82.5 265V267M83.5 265V266M84.5 265V266M85.5 265V266M86.5 265V266M87.5 265V267M88.5 265V266M89.5 265V267M90.5 265V267M91.5 265V267M92.5 265V266M93.5 265V266M94.5 265V267M95.5 265V266M96.5 265V267M97.5 266V267M98.5 265V267M99.5 265V267M100.5 265V267M101.5 265V267M102.5 265V267M103.5 265V266M104.5 265V266M105.5 265V266M106.5 265V266M107.5 265V267M108.5 265V267M109.5 265V267M110.5 265V267M111.5 265V267M112.5 265V266M113.5 265V266M114.5 265V266M115.5 265V266M116.5 265V266M117.5 265V266M118.5 265V266M119.5 265V266M120.5 265V266M121.5 265V267M122.5 266V267M123.5 265V267M124.5 266V267M125.5 265V267M126.5 265V267M127.5 266V267M128.5 265V267M129.5 265V266M130.5 265V266M131.5 265V267M132.5 265V267M133.5 265V267M134.5 265V267M135.5 265V267M136.5 265V267M137.5 265V267M138.5 265V267M139.5 265V267M140.5 265V267M141.5 265V267M142.5 265V266M143.5 265V266M144.5 265V266M145.5 265V267M146.5 265V267M147.5 265V267M148.5 265V267M149.5 265V267M150.5 265V266M151.5 265V266M152.5 265V267M153.5 265V266M154.5 265V266M155.5 265V266M156.5 265V266M157.5 265V267M158.5 265V266M159.5 265V266M160.5 265V266M161.5 265V266M162.5 265V267M163.5 265V267M164.5 265V267M165.5 265V267M166.5 265V267M167.5 265V267M168.5 265V267M169.5 266V267M170.5 266V267M171.5 265V267M172.5 265V267M173.5 265V267M174.5 265V266M175.5 265V266M176.5 265V266M177.5 265V266M178.5 264V266M179.5 264V266M180.5 265V266M181.5 265V266M182.5 265V266M183.5 265V266M184.5 265V266M185.5 265V266M186.5 265V267M187.5 266V267M188.5 265V267M189.5 265V267M190.5 266V267M191.5 265V267M192.5 265V267M193.5 265V267M194.5 265V267M195.5 266V267M196.5 265V267M197.5 265V267M198.5 265V267M199.5 265V266M200.5 265V266M201.5 265V266M202.5 265V266M203.5 265V266M204.5 265V266M205.5 265V266M206.5 265V266M207.5 265V266M208.5 265V267M209.5 265V267M210.5 265V267M211.5 265V266M212.5 265V266M213.5 265V267M214.5 265V267M215.5 265V267M216.5 265V267M217.5 265V266M218.5 265V266M219.5 265V267M220.5 265V267M221.5 265V267M222.5 265V266M223.5 265V266M224.5 265V267M225.5 265V266M226.5 265V266M227.5 265V266M228.5 265V266M229.5 265V266M230.5 265V266M231.5 265V266M232.5 265V266M233.5 265V266M234.5 265V266M235.5 265V266M236.5 265V266M237.5 265V266M238.5 265V267M239.5 265V266M240.5 265V266M241.5 265V267M242.5 265V267M243.5 265V267M244.5 265V267M245.5 265V266M246.5 265V266M247.5 265V266M248.5 265V266M249.5 265V266M250.5 265V267M251.5 265V267M252.5 265V267M253.5 265V266M254.5 265V267M255.5 265V266M256.5 265V266M257.5 265V267M258.5 265V267M259.5 265V267M260.5 265V267M261.5 265V266M262.5 265V266M263.5 265V266M264.5 265V266M265.5 265V266M266.5 265V266M267.5 265V266M268.5 265V266M269.5 265V266M270.5 265V266M271.5 265V266M272.5 265V266M273.5 265V266M274.5 265V266M275.5 265V266M276.5 265V266M277.5 265V266M278.5 265V266M279.5 265V267M280.5 265V266M281.5 265V266M282.5 265V266M283.5 265V266M284.5 265V266M285.5 265V266M286.5 265V266M287.5 264V266M288.5 265V266M289.5 265V266M290.5 265V267M291.5 265V267M292.5 265V267M293.5 265V266M294.5 265V267M295.5 265V267M296.5 265V267M297.5 265V267M298.5 265V266M299.5 265V266M300.5 265V267M301.5 265V267M302.5 265V266M303.5 265V266M304.5 265V266M305.5 265V266M306.5 265V266M307.5 265V266M308.5 265V266M309.5 265V266M310.5 265V267M311.5 265V267M312.5 265V267M313.5 266V267M314.5 266V267M315.5 265V267M316.5 265V267M317.5 266V267M318.5 266V267M319.5 255V267M320.5 255V272M321.5 258V263M322.5 258V260M323.5 257V259M324.5 255V258M325.5 254V256M326.5 253V255M327.5 251V254M328.5 251V252M329.5 249V252M330.5 248V250M331.5 247V249M332.5 246V248M333.5 245V247M334.5 244V246M335.5 244V245M336.5 243V245M337.5 242V244M338.5 242V243M339.5 241V243M340.5 240V242M341.5 240V241M342.5 239V241M343.5 238V240M344.5 238V239M345.5 237V239M346.5 236V238M347.5 236V237M348.5 234V237M349.5 234V235M350.5 234V235M351.5 233V235M352.5 232V234M353.5 232V233M354.5 231V233M355.5 230V232M356.5 230V231M357.5 230V231M358.5 229V231M359.5 229V230M360.5 229V230M361.5 228V230M362.5 228V229M363.5 227V229M364.5 227V228M365.5 227V228M366.5 227V228M367.5 226V228M368.5 226V228M369.5 226V227M370.5 226V227M371.5 226V227M372.5 226V227M373.5 223V227M374.5 221V228M375.5 225V227M376.5 224V226M377.5 224V225M378.5 223V225M379.5 223V224M380.5 222V224M381.5 221V223M382.5 221V222M383.5 220V222M384.5 218V221M385.5 217V219M386.5 217V219M387.5 218V220M388.5 219V220M389.5 218V220M390.5 218V219M391.5 218V219M392.5 218V219M393.5 217V219M394.5 217V218M395.5 216V218M396.5 216V218M397.5 216V218M398.5 216V217M399.5 216V217M400.5 216V217M401.5 215V217M402.5 215V216M403.5 215V216M404.5 214V216M405.5 214V216M406.5 214V216M407.5 214V216M408.5 214V215M409.5 214V215M410.5 213V215M411.5 213V214M412.5 213V214M413.5 213V214M414.5 213V214M415.5 213V214M416.5 212V214M417.5 212V213M418.5 212V214M419.5 212V213M420.5 212V213M421.5 211V213M422.5 211V213M423.5 211V213M424.5 211V213M425.5 211V213M426.5 211V212M427.5 211V212M428.5 211V212M429.5 210V212M430.5 210V212M431.5 210V212M432.5 210V212M433.5 210V212M434.5 210V211M435.5 210V211M436.5 210V211M437.5 209V211M438.5 209V211M439.5 208V210M440.5 208V211M441.5 209V211M442.5 209V210M443.5 209V210M444.5 209V210M445.5 209V210M446.5 209V210M447.5 209V210M448.5 209V210M449.5 209V210M450.5 208V210M451.5 208V209M452.5 208V209M453.5 208V209M454.5 208V209M455.5 208V209M456.5 208V209M457.5 208V209M458.5 208V209M459.5 208V209M460.5 207V209M461.5 208V209M462.5 208V209M463.5 207V209M464.5 207V208M465.5 207V208M466.5 207V208M467.5 207V208M468.5 207V208M469.5 207V209M470.5 207V208M471.5 207V208M472.5 207V209M473.5 207V208M474.5 207V209M475.5 207V209M476.5 207V208M477.5 207V208M478.5 207V208M479.5 207V208M480.5 207V208M481.5 207V208M482.5 207V208M483.5 207V208M484.5 207V208M485.5 207V208M486.5 207V208M487.5 207V208M488.5 207V208M489.5 207V208M490.5 207V208M491.5 207V208M492.5 207V208M493.5 207V208M494.5 207V208M495.5 207V210M496.5 209V211M497.5 210V212M498.5 211V215M499.5 214V217M500.5 216V219M501.5 218V220M502.5 219V220M503.5 219V220M504.5 219V220M505.5 219V220M506.5 219V220M507.5 219V220M508.5 219V220M509.5 219V221M510.5 219V221M511.5 219V221M512.5 219V221M513.5 220V221M514.5 219V221M515.5 220V221M516.5 220V221M517.5 220V222M518.5 220V222M519.5 221V222M520.5 221V222M521.5 221V222M522.5 221V222M523.5 221V223M524.5 222V223M525.5 222V223M526.5 222V224M527.5 223V224M528.5 223V224M529.5 223V225M530.5 224V225M531.5 224V225M532.5 224V225M533.5 224V226M534.5 225V226M535.5 225V227M536.5 225V227M537.5 226V227M538.5 226V228M539.5 227V228M540.5 227V228M541.5 227V228M542.5 227V229M543.5 228V229M544.5 228V229M545.5 228V229M546.5 228V229M547.5 228V230M548.5 229V230M549.5 229V230M550.5 229V231M551.5 230V231M552.5 230V231M553.5 230V231M554.5 230V231M555.5 230V231M556.5 230V232M557.5 230V232M558.5 230V232M559.5 230V231M560.5 230V232M561.5 230V232M562.5 230V231M563.5 230V231M564.5 230V231M565.5 230V231M566.5 230V231M567.5 230V231M568.5 230V231M569.5 230V231M570.5 230V231M571.5 230V231M572.5 230V231M573.5 230V231M574.5 230V231M575.5 230V231M576.5 230V231M577.5 230V231M578.5 230V231M579.5 230V231M580.5 230V231M581.5 230V231M582.5 230V231M583.5 230V231M584.5 229V231M585.5 228V230M586.5 227V229M587.5 227V228M588.5 227V228M589.5 227V228M590.5 227V228M591.5 227V229M592.5 228V230M593.5 229V231M594.5 229V231M595.5 229V230M596.5 229V230M597.5 229V230M598.5 229V231M599.5 229V231M600.5 230V231M601.5 229V231M602.5 229V231M603.5 229V230M604.5 229V231M605.5 229V231M606.5 230V231M607.5 230V231M608.5 229V231M609.5 229V230M610.5 229V230M611.5 229V230M612.5 229V230M613.5 229V230M614.5 229V230M615.5 229V230M616.5 229V230M617.5 229V230M618.5 229V231M619.5 229V231M620.5 230V231M621.5 230V231M622.5 230V231M623.5 229V231M624.5 229V231M625.5 229V231M626.5 229V230M627.5 229V230M628.5 229V230M629.5 229V230M630.5 229V230M631.5 229V230M632.5 228V230M633.5 228V229M634.5 228V230M635.5 228V229M636.5 228V230M637.5 228V229M638.5 228V229M639.5 228V229M640.5 228V229M641.5 228V229M642.5 228V230M643.5 228V230M644.5 228V230M645.5 228V229M646.5 228V229M647.5 227V229M648.5 227V229M649.5 228V230M650.5 228V230M651.5 228V230M652.5 228V230M653.5 228V230M654.5 229V230M655.5 228V230M656.5 229V230M657.5 228V230M658.5 228V229M659.5 228V229M660.5 227V229M661.5 228V229M662.5 228V229M663.5 227V229M664.5 227V229M665.5 227V229M666.5 228V229M667.5 228V229M668.5 228V229M669.5 228V229M670.5 227V229M671.5 227V230M672.5 229V232M673.5 231V233M674.5 231V233M675.5 231V233M676.5 231V233M677.5 231V233M678.5 231V233M679.5 231V233M680.5 231V232M681.5 231V232M682.5 231V232M683.5 231V233M684.5 232V233M685.5 231V233M686.5 231V233M687.5 231V232M688.5 231V232M689.5 231V232M690.5 231V232M691.5 230V232M692.5 231V232M693.5 231V232M694.5 230V232M695.5 230V232M696.5 230V231M697.5 230V232M698.5 230V231M699.5 229V231M700.5 229V231M701.5 229V231M702.5 229V231M703.5 229V231M704.5 230V231M705.5 230V232M706.5 230V231M707.5 229V232M708.5 230V231M709.5 230V232M710.5 231V233M711.5 231V232M712.5 231V233M713.5 232V234M714.5 232V233M715.5 231V233M716.5 232V234M717.5 232V234M718.5 231V233M719.5 231V233M720.5 231V233M721.5 231V233M722.5 231V233M723.5 231V233M724.5 231V232M725.5 231V233M726.5 232V233M727.5 232V233M728.5 232V233M729.5 232V234M730.5 232V234M731.5 232V233M732.5 231V233M733.5 232V233M734.5 232V233M735.5 232V234M736.5 231V233M737.5 232V233M738.5 232V234M739.5 231V233M740.5 231V232M741.5 231V232M742.5 231V232M743.5 231V232M744.5 231V232M745.5 231V233M746.5 232V233M747.5 232V233M748.5 231V233M749.5 230V232M750.5 230V231M751.5 229V231M752.5 228V230M753.5 228V230M754.5 229V231M755.5 230V231M756.5 230V232M757.5 231V232M758.5 231V232M759.5 230V232M760.5 230V232M761.5 230V232M762.5 231V232M763.5 231V233M764.5 230V232M765.5 230V232M766.5 230V231M767.5 230V231M768.5 230V232M769.5 231V233M770.5 232V233M771.5 232V234M772.5 232V233M773.5 231V233M774.5 230V233M775.5 230V233M776.5 230V233M777.5 231V232M778.5 230V232M779.5 230V232M780.5 230V232M781.5 230V232M782.5 231V233M783.5 231V233M784.5 232V233M785.5 232V234M786.5 232V235M787.5 233V235M788.5 233V234M789.5 233V234M790.5 233V234M791.5 233V235M792.5 233V235M793.5 233V235M794.5 233V235M795.5 234V235M796.5 233V235M797.5 233V235M798.5 233V234M799.5 233V235M800.5 233V234M801.5 232V234M802.5 232V233M803.5 231V233M804.5 232V233M805.5 232V234M806.5 232V234M807.5 233V235M808.5 234V236M809.5 235V236M810.5 234V237M811.5 234V236M812.5 234V236M813.5 235V237M814.5 235V236M815.5 235V237M816.5 235V237M817.5 235V237M818.5 236V237M819.5 235V237M820.5 233V236M821.5 234V235M822.5 233V235M823.5 233V235M824.5 233V235M825.5 233V235M826.5 234V235M827.5 234V236M828.5 234V236M829.5 234V236M830.5 234V236M831.5 235V236M832.5 235V237M833.5 236V238M834.5 237V238M835.5 237V238M836.5 237V238M837.5 237V238M838.5 236V238M839.5 236V237M840.5 235V237M841.5 234V237M842.5 234V236M843.5 234V236M844.5 235V236M845.5 235V237M846.5 236V237M847.5 236V237M848.5 235V237M849.5 236V237M850.5 236V238M851.5 236V238M852.5 237V238M853.5 237V238M854.5 236V238M855.5 236V238M856.5 236V238M857.5 236V238M858.5 235V237M859.5 235V237M860.5 235V237M861.5 234V236M862.5 234V236M863.5 234V236M864.5 234V236M865.5 235V236M866.5 235V236M867.5 235V237M868.5 236V238M869.5 237V238M870.5 236V238M871.5 237V239M872.5 237V239M873.5 238V240M874.5 238V240M875.5 238V239M876.5 236V239M877.5 236V239M878.5 236V239M879.5 238V239M880.5 238V239M881.5 238V239M882.5 237V239M883.5 237V238M884.5 236V238M885.5 236V237M886.5 236V238M887.5 236V238M888.5 236V238M889.5 236V238M890.5 237V239M891.5 238V239M892.5 237V239M893.5 238V239M894.5 238V240M895.5 237V240M896.5 237V239M897.5 237V238M898.5 236V238M899.5 236V238M900.5 234V237M901.5 234V235M902.5 233V236M903.5 235V236M904.5 235V237M905.5 236V239M906.5 237V239M907.5 238V239M908.5 237V240M909.5 237V240M910.5 239V241M911.5 239V240M912.5 238V240M913.5 238V239M914.5 238V239M915.5 238V239M916.5 237V239M917.5 238V240M918.5 238V240M919.5 238V240M920.5 238V239M921.5 238V240M922.5 237V239M923.5 237V239M924.5 237V239M925.5 237V238M926.5 237V239M927.5 236V239M928.5 237V238M929.5 237V239M930.5 238V239M931.5 238V240M932.5 238V240M933.5 238V240M934.5 237V239M935.5 237V240M936.5 239V241M937.5 240V242M938.5 241V244M939.5 242V244M940.5 241V243M941.5 241V243M942.5 241V243M943.5 240V243M944.5 240V241M945.5 238V241M946.5 239V240M947.5 239V240M948.5 238V240M949.5 238V240M950.5 238V240M951.5 237V240M952.5 238V239M953.5 236V239M954.5 236V238M955.5 236V238M956.5 236V238M957.5 236V238M958.5 236V238M959.5 235V238M960.5 236V238M961.5 236V238M962.5 236V238M963.5 235V238M964.5 235V238M965.5 235V237M966.5 235V237M967.5 234V236M968.5 235V238M969.5 236V237M970.5 236V238M971.5 237V238M972.5 237V239M973.5 237V238M974.5 237V239M975.5 237V239M976.5 236V238M977.5 236V239M978.5 237V239M979.5 237V239M980.5 238V239M981.5 238V239M982.5 237V239M983.5 237V239M984.5 237V239M985.5 237V239M986.5 237V239M987.5 237V239M988.5 236V238M989.5 237V238M990.5 237V239M991.5 237V242M992.5 235V238M993.5 234V236M994.5 232V235M995.5 232V234M996.5 233V235M997.5 234V236M998.5 235V237M999.5 236V238M1000.5 237V239M1001.5 238V240M1002.5 239V241M1003.5 240V241M1004.5 240V241M1005.5 240V241M1006.5 239V241M1007.5 239V241M1008.5 239V241M1009.5 239V240M1010.5 238V240M1011.5 238V240M1012.5 238V240M1013.5 238V240M1014.5 238V240M1015.5 238V240M1016.5 238V239M1017.5 238V239M1018.5 238V240M1019.5 238V239M1020.5 238V240M1021.5 239V240M1022.5 239V241M1023.5 239V241M1024.5 239V241M1025.5 240V241M1026.5 239V241M1027.5 239V241M1028.5 240V241M1029.5 239V241M1030.5 239V241M1031.5 240V242M1032.5 240V242M1033.5 240V243M1034.5 241V244M1035.5 242V243M1036.5 241V243M1037.5 241V243M1038.5 242V243M1039.5 242V243M1040.5 242V244M1041.5 242V243M1042.5 242V243M1043.5 242V244M1044.5 243V244M1045.5 242V244M1046.5 243V244M1047.5 242V244M1048.5 242V244M1049.5 242V244M1050.5 242V244M1051.5 242V244M1052.5 243V244M1053.5 242V244M1054.5 242V244M1055.5 242V245M1056.5 243V245M1057.5 243V245M1058.5 243V245M1059.5 243V245M1060.5 244V245M1061.5 244V246M1062.5 245V246M1063.5 244V246M1064.5 243V245M1065.5 242V244M1066.5 242V243M1067.5 241V243M1068.5 241V242M1069.5 241V243M1070.5 242V243M1071.5 242V244M1072.5 243V244M1073.5 243V245M1074.5 243V245M1075.5 244V245M1076.5 243V245M1077.5 243V245M1078.5 242V245M1079.5 242V243M1080.5 241V243M1081.5 242V244M1082.5 243V245M1083.5 244V245M1084.5 244V245M1085.5 244V246M1086.5 244V246M1087.5 244V246M1088.5 245V247M1089.5 244V246M1090.5 244V246M1091.5 244V246M1092.5 244V246M1093.5 244V246M1094.5 244V246M1095.5 245V247M1096.5 245V246M1097.5 245V246M1098.5 245V246M1099.5 245V246M1100.5 245V246M1101.5 244V246M1102.5 245V246M1103.5 245V246M1104.5 245V247M1105.5 245V247M1106.5 246V247M1107.5 245V248M1108.5 246V247M1109.5 246V248M1110.5 245V247M1111.5 244V246M1112.5 244V246M1113.5 244V246M1114.5 244V246M1115.5 244V246M1116.5 244V246M1117.5 244V246M1118.5 245V246M1119.5 244V246M1120.5 245V246M1121.5 245V247M1122.5 246V247M1123.5 245V247M1124.5 245V247M1125.5 245V247M1126.5 245V247M1127.5 246V247M1128.5 245V248M1129.5 245V247M1130.5 245V247M1131.5 245V247M1132.5 245V248M1133.5 245V247M1134.5 246V247M1135.5 246V248M1136.5 246V248M1137.5 247V248M1138.5 246V248M1139.5 246V248M1140.5 247V248M1141.5 246V248M1142.5 246V248M1143.5 245V248M1144.5 245V247M1145.5 244V247M1146.5 244V246M1147.5 244V246M1148.5 245V246M1149.5 245V247M1150.5 244V246M1151.5 245V247M1152.5 244V246M1153.5 245V247M1154.5 245V247M1155.5 245V246M1156.5 244V246M1157.5 244V245M1158.5 244V245M1159.5 244V246M1160.5 244V246M1161.5 244V245M1162.5 244V246M1163.5 244V247M1164.5 244V246M1165.5 244V245M1166.5 244V246M1167.5 244V245M1168.5 244V246M1169.5 245V246M1170.5 245V247M1171.5 245V247M1172.5 245V247M1173.5 245V247M1174.5 245V247M1175.5 245V247M1176.5 245V247M1177.5 244V247M1178.5 244V247M1179.5 246V247M1180.5 245V247M1181.5 246V247M1182.5 245V247M1183.5 245V247M1184.5 246V247M1185.5 245V248M1186.5 246V247M1187.5 245V247M1188.5 244V247M1189.5 245V247M1190.5 246V247M1191.5 246V247M1192.5 246V247M1193.5 246V247M1194.5 245V247M1195.5 245V247M1196.5 245V247M1197.5 245V246M1198.5 244V246M1199.5 244V246M1200.5 244V247M1201.5 245V247M1202.5 245V247M1203.5 245V247M1204.5 245V247M1205.5 245V247M1206.5 245V247M1207.5 245V247M1208.5 245V247M1209.5 246V247M1210.5 245V247M1211.5 245V246M1212.5 245V246M1213.5 244V246M1214.5 244V245M1215.5 244V246M1216.5 244V245M1217.5 244V245M1218.5 244V246M1219.5 244V246M1220.5 244V245M1221.5 244V246M1222.5 245V247M1223.5 246V247M1224.5 246V247M1225.5 246V247M1226.5 245V247M1227.5 244V246M1228.5 244V246M1229.5 245V247M1230.5 246V247M1231.5 245V247M1232.5 246V247M1233.5 245V247M1234.5 245V246M1235.5 245V246M1236.5 244V246M1237.5 244V246M1238.5 243V246M1239.5 244V246M1240.5 243V245M1241.5 243V245M1242.5 244V246M1243.5 243V245M1244.5 242V245M1245.5 242V244M1246.5 243V245M1247.5 243V245M1248.5 244V247M1249.5 245V248M1250.5 246V248M1251.5 246V247M1252.5 246V247M1253.5 246V248M1254.5 247V249M1255.5 247V249M1256.5 246V248M1257.5 246V247M1258.5 245V247M1259.5 245V247M1260.5 245V247M1261.5 245V247M1262.5 245V247M1263.5 245V247M1264.5 246V248M1265.5 245V249M1266.5 246V248M1267.5 246V249M1268.5 246V247M1269.5 246V249M1270.5 246V249M1271.5 247V248M1272.5 247V249M1273.5 247V249M1274.5 247V249M1275.5 246V248M1276.5 246V248M1277.5 247V248M1278.5 246V248M1279.5 246V248M1280.5 246V248M1281.5 246V248M1282.5 245V247M1283.5 244V247M1284.5 245V247M1285.5 245V247M1286.5 244V246M1287.5 244V247M1288.5 244V245M1289.5 244V245M1290.5 244V246M1291.5 245V247M1292.5 245V247M1293.5 245V247M1294.5 245V247M1295.5 245V248M1296.5 245V246M1297.5 245V246M1298.5 245V246M1299.5 245V247M1300.5 246V248M1301.5 245V248M1302.5 245V248M1303.5 245V247M1304.5 246V248M1305.5 246V249M1306.5 246V247M1307.5 246V248M1308.5 245V248M1309.5 245V247M1310.5 245V248M1311.5 244V248M1312.5 244V246M1313.5 243V246M1314.5 243V244M1315.5 243V244M1316.5 242V244M1317.5 242V244M1318.5 242V244M1319.5 243V245M1320.5 241V244M1321.5 243V245M1322.5 244V245M1323.5 243V245M1324.5 242V244M1325.5 241V244M1326.5 241V243M1327.5 240V243M1328.5 241V243M1329.5 241V242M1330.5 241V242M1331.5 241V243M1332.5 241V243M1333.5 240V243M1334.5 241V243M1335.5 241V243M1336.5 241V244M1337.5 242V244M1338.5 243V245M1339.5 243V245M1340.5 243V259M1341.5 250V267M1342.5 208V251M1343.5 186V209M1344.5 175V187M1345.5 160V176M1346.5 147V161M1347.5 139V148M1348.5 132V140M1349.5 128V133M1350.5 129V132M1351.5 130V132M1352.5 130V134M1353.5 129V134M1354.5 130V135M1355.5 134V136M1356.5 135V138M1357.5 137V145M1358.5 144V152M1359.5 151V158M1360.5 157V165M1361.5 164V172M1362.5 171V178M1363.5 177V185M1364.5 184V192M1365.5 191V198M1366.5 197V204M1367.5 203V209M1368.5 208V213M1369.5 212V217M1370.5 216V221M1371.5 220V224M1372.5 223V227M1373.5 226V231M1374.5 230V233M1375.5 232V235M1376.5 234V236M1377.5 235V238M1378.5 237V240M1379.5 239V241M1380.5 240V242M1381.5 241V243M1382.5 242V244M1383.5 243V244M1384.5 243V245M1385.5 244V245M1386.5 244V246M1387.5 245V246M1388.5 245V247M1389.5 246V247M1390.5 246V247M1391.5 246V248M1392.5 247V248M1393.5 247V248M1394.5 247V249M1395.5 248V249M1396.5 248V249M1397.5 248V249M1398.5 248V250M1399.5 249V250M1400.5 249V251M1401.5 250V252M1402.5 251V252M1403.5 251V252M1404.5 251V252M1405.5 251V252M1406.5 251V253M1407.5 252V254M1408.5 253V255M1409.5 254V256M1410.5 255V257M1411.5 256V257M1412.5 256V258M1413.5 257V259M1414.5 258V259M1415.5 258V259M1416.5 258V259M1417.5 257V259M1418.5 257V258M1419.5 256V258M1420.5 256V257M1421.5 256V257M1422.5 256V257M1423.5 256V257M1424.5 256V257M1425.5 256V257M1426.5 256V257M1427.5 256V257M1428.5 256V257M1429.5 256V257M1430.5 256V257M1431.5 256V257M1432.5 256V257M1433.5 256V257M1434.5 256V257M1435.5 256V257M1436.5 256V257M1437.5 256V258M1438.5 257V258M1439.5 257V258M1440.5 257V258M1441.5 257V258M1442.5 257V258M1443.5 257V258M1444.5 257V258M1445.5 257V258M1446.5 257V258M1447.5 257V258M1448.5 257V258M1449.5 257V258M1450.5 257V258M1451.5 257V258M1452.5 257V258M1453.5 257V258M1454.5 257V258M1455.5 257V258M1456.5 257V258M1457.5 257V258M1458.5 257V258M1459.5 257V258M1460.5 257V258M1461.5 257V258M1462.5 257V258M1463.5 257V258M1464.5 257V258M1465.5 257V258M1466.5 257V258M1467.5 257V258M1468.5 257V258M1469.5 257V258M1470.5 257V259M1471.5 257V259M1472.5 257V259M1473.5 257V259M1474.5 258V259M1475.5 258V259M1476.5 257V259M1477.5 257V259M1478.5 257V259M1479.5 257V258M1480.5 257V258M1481.5 257V258M1482.5 257V259M1483.5 258V259M1484.5 258V259M1485.5 258V259M1486.5 258V259M1487.5 258V259M1488.5 258V259M1489.5 258V259M1490.5 258V259M1491.5 258V259M1492.5 258V259M1493.5 258V259M1494.5 258V259M1495.5 258V259M1496.5 258V259M1497.5 258V259M1498.5 258V259M1499.5 258V259M1500.5 258V259M1501.5 258V259M1502.5 258V259M1503.5 258V259M1504.5 258V259M1505.5 258V259M1506.5 258V259M1507.5 258V259M1508.5 258V259M1509.5 258V259M1510.5 258V259M1511.5 258V259M1512.5 258V259M1513.5 258V259M1514.5 258V259M1515.5 258V259M1516.5 258V259M1517.5 258V259M1518.5 258V259M1519.5 258V259M1520.5 258V259M1521.5 258V259M1522.5 258V259M1523.5 258V259M1524.5 258V259M1525.5 258V259M1526.5 258V259M1527.5 258V259M1528.5 258V259M1529.5 258V259M1530.5 258V259M1531.5 258V259M1532.5 258V260M1533.5 258V260M1534.5 258V260M1535.5 258V259M1536.5 258V260M1537.5 258V260M1538.5 258V259M1539.5 258V259M1540.5 258V259M1541.5 258V259M1542.5 258V260M1543.5 258V260M1544.5 258V260M1545.5 259V260M1546.5 259V260M1547.5 258V260M1548.5 258V260M1549.5 258V259M1550.5 258V260M1551.5 258V259M1552.5 258V260M1553.5 258V259M1554.5 258V259M1555.5 258V260M1556.5 258V260M1557.5 258V260M1558.5 258V260M1559.5 259V260M1560.5 258V260M1561.5 258V260M1562.5 258V260M1563.5 258V260M1564.5 258V260M1565.5 259V260M1566.5 259V260M1567.5 259V260M1568.5 259V260M1569.5 258V260M1570.5 258V260M1571.5 258V260M1572.5 259V260M1573.5 259V260M1574.5 259V260M1575.5 259V260M1576.5 259V260M1577.5 258V260M1578.5 258V260M1579.5 258V260M1580.5 258V260M1581.5 259V260M1582.5 258V260M1583.5 258V259M1584.5 258V259M1585.5 258V259M1586.5 258V259M1587.5 258V259M1588.5 258V260M1589.5 258V260M1590.5 257V260M1591.5 257V258M1592.5 257V258M1593.5 257V258M1594.5 257V258M1595.5 257V258M1596.5 257V258M1597.5 257V258M1598.5 257V258M1599.5 256V258M1600.5 256V258M1601.5 257V258M1602.5 257V258M1603.5 257V258M1604.5 257V258M1605.5 257V259M1606.5 258V259M1607.5 258V259M1608.5 258V259M1609.5 258V259M1610.5 258V260M1611.5 259V261M1612.5 260V261M1613.5 260V261M1614.5 260V261M1615.5 260V261M1616.5 260V261M1617.5 260V261M1618.5 260V261M1619.5 260V261M1620.5 260V261M1621.5 260V261M1622.5 260V261M1623.5 260V261M1624.5 260V261M1625.5 260V261M1626.5 260V261M1627.5 260V261M1628.5 260V261M1629.5 260V261M1630.5 260V261M1631.5 260V261M1632.5 260V261M1633.5 260V261M1634.5 260V261M1635.5 260V261M1636.5 260V261M1637.5 260V261M1638.5 260V261M1639.5 260V261M1640.5 260V261M1641.5 260V261M1642.5 260V261M1643.5 260V261M1644.5 260V261M1645.5 260V261M1646.5 260V261M1647.5 260V261M1648.5 259V261M1649.5 257V260M1650.5 257V258M1651.5 257V258M1652.5 257V258M1653.5 257V258M1654.5 257V258M1655.5 257V259M1656.5 257V259M1657.5 257V259M1658.5 257V259M1659.5 258V259M1660.5 258V259M1661.5 258V259M1662.5 258V259M1663.5 258V259M1664.5 258V259M1665.5 258V260M1666.5 258V260M1667.5 258V259M1668.5 258V260M1669.5 258V260M1670.5 258V260M1671.5 258V259M1672.5 258V259M1673.5 258V259M1674.5 258V260M1675.5 258V259M1676.5 258V260M1677.5 258V260M1678.5 258V259M1679.5 258V260M1680.5 258V260M1681.5 258V260M1682.5 258V260M1683.5 258V260M1684.5 258V260M1685.5 258V260M1686.5 258V260M1687.5 258V259M1688.5 258V259M1689.5 258V260M1690.5 259V260M1691.5 259V260M1692.5 258V260M1693.5 258V259M1694.5 258V260M1695.5 259V260M1696.5 258V260M1697.5 258V259M1698.5 258V260M1699.5 258V260M1700.5 258V260M1701.5 259V260M1702.5 259V260M1703.5 258V260M1704.5 259V260M1705.5 259V260M1706.5 259V260M1707.5 259V260M1708.5 259V260M1709.5 259V260M1710.5 259V260M1711.5 259V260M1712.5 259V260M1713.5 259V260M1714.5 259V260M1715.5 259V260M1716.5 259V260M1717.5 259V260M1718.5 258V260M1719.5 259V260M1720.5 259V260M1721.5 259V260M1722.5 259V260M1723.5 259V260M1724.5 259V260M1725.5 259V260M1726.5 259V260M1727.5 259V260M1728.5 259V260M1729.5 259V260M1730.5 259V260M1731.5 259V260M1732.5 259V260M1733.5 259V260M1734.5 259V260M1735.5 259V260M1736.5 259V260M1737.5 259V260M1738.5 259V260M1739.5 259V260M1740.5 259V260M1741.5 258V260M1742.5 258V260M1743.5 258V260M1744.5 258V260M1745.5 259V260M1746.5 259V260M1747.5 259V260M1748.5 259V260M1749.5 259V260M1750.5 259V260" fill="none" stroke="#f9eb12" stroke-width="1" shape-rendering="crispEdges"/>
<path d="M3.5 430V431M4.5 430V431M5.5 430V431M6.5 430V431M7.5 430V431M8.5 430V431M9.5 430V431M10.5 430V431M11.5 430V431M12.5 430V431M13.5 430V431M14.5 430V431M15.5 430V431M16.5 430V431M17.5 430V431M18.5 430V431M19.5 430V431M20.5 430V431M21.5 430V431M22.5 430V431M23.5 430V431M24.5 430V431M25.5 430V431M26.5 430V431M27.5 430V431M28.5 430V431M29.5 430V431M30.5 430V431M31.5 430V431M32.5 430V431M33.5 430V431M34.5 430V431M35.5 430V431M36.5 430V431M37.5 430V431M38.5 430V431M39.5 430V431M40.5 430V431M41.5 430V431M42.5 430V431M43.5 430V431M44.5 430V431M45.5 430V431M46.5 430V431M47.5 430V431M48.5 430V431M49.5 430V431M50.5 430V431M51.5 430V431M52.5 430V431M53.5 430V431M54.5 430V431M55.5 430V431M56.5 430V431M57.5 430V431M58.5 430V431M59.5 430V431M60.5 430V431M61.5 430V431M62.5 430V431M63.5 430V431M64.5 430V431M65.5 430V431M66.5 430V431M67.5 430V431M68.5 430V431M69.5 430V431M70.5 430V431M71.5 430V431M72.5 430V431M73.5 430V431M74.5 430V431M75.5 430V431M76.5 430V431M77.5 430V431M78.5 430V431M79.5 430V431M80.5 430V431M81.5 430V431M82.5 430V431M83.5 430V431M84.5 430V431M85.5 430V431M86.5 430V431M87.5 430V431M88.5 430V431M89.5 430V431M90.5 430V431M91.5 430V431M92.5 430V431M93.5 430V431M94.5 430V431M95.5 430V431M96.5 430V431M97.5 430V431M98.5 430V431M99.5 430V431M100.5 430V431M101.5 430V431M102.5 430V431M103.5 430V431M104.5 430V431M105.5 430V431M106.5 430V431M107.5 430V431M108.5 430V431M109.5 430V431M110.5 430V431M111.5 430V431M112.5 430V431M113.5 430V431M114.5 430V431M115.5 430V431M116.5 430V431M117.5 430V431M118.5 430V431M119.5 430V431M120.5 430V431M121.5 430V431M122.5 430V431M123.5 430V431M124.5 430V431M125.5 430V431M126.5 430V431M127.5 430V431M128.5 430V431M129.5 430V431M130.5 430V431M131.5 430V431M132.5 430V431M133.5 430V431M134.5 430V431M135.5 430V431M136.5 430V431M137.5 430V431M138.5 430V431M139.5 430V431M140.5 430V431M141.5 430V431M142.5 430V431M143.5 430V431M144.5 430V431M145.5 430V431M146.5 430V431M147.5 430V431M148.5 430V431M149.5 430V431M150.5 430V431M151.5 430V431M152.5 430V431M153.5 430V431M154.5 430V431M155.5 430V431M156.5 430V431M157.5 430V431M158.5 430V431M159.5 430V431M160.5 430V431M161.5 430V431M162.5 430V431M163.5 430V431M164.5 430V431M165.5 430V431M166.5 430V431M167.5 430V431M168.5 430V431M169.5 430V431M170.5 430V431M171.5 430V431M172.5 430V431M173.5 430V431M174.5 430V431M175.5 430V431M176.5 430V431M177.5 430V431M178.5 430V431M179.5 430V431M180.5 430V431M181.5 430V431M182.5 430V431M183.5 430V431M184.5 430V431M185.5 430V431M186.5 430V431M187.5 430V431M188.5 430V431M189.5 430V431M190.5 430V431M191.5 430V431M192.5 430V431M193.5 430V431M194.5 430V431M195.5 430V431M196.5 430V431M197.5 430V431M198.5 430V431M199.5 430V431M200.5 430V431M201.5 430V431M202.5 430V431M203.5 430V431M204.5 430V431M205.5 430V431M206.5 430V431M207.5 430V431M208.5 430V431M209.5 430V431M210.5 430V431M211.5 430V431M212.5 430V431M213.5 430V431M214.5 430V431M215.5 430V431M216.5 430V431M217.5 430V431M218.5 430V431M219.5 430V431M220.5 430V431M221.5 430V431M222.5 430V431M223.5 430V431M224.5 430V431M225.5 430V431M226.5 430V431M227.5 430V431M228.5 430V431M229.5 430V431M230.5 430V431M231.5 430V431M232.5 430V431M233.5 430V431M234.5 430V431M235.5 430V431M236.5 430V431M237.5 430V431M238.5 430V431M239.5 430V431M240.5 430V431M241.5 430V431M242.5 430V431M243.5 430V431M244.5 430V431M245.5 430V431M246.5 430V431M247.5 430V431M248.5 430V431M249.5 430V431M250.5 430V431M251.5 430V431M252.5 430V431M253.5 430V431M254.5 430V431M255.5 430V431M256.5 430V431M257.5 430V431M258.5 430V431M259.5 430V431M260.5 430V431M261.5 430V431M262.5 430V431M263.5 430V431M264.5 430V431M265.5 430V431M266.5 430V431M267.5 430V431M268.5 430V431M269.5 430V431M270.5 430V431M271.5 430V431M272.5 430V431M273.5 430V431M274.5 430V431M275.5 430V431M276.5 430V431M277.5 430V431M278.5 430V431M279.5 430V431M280.5 430V431M281.5 430V431M282.5 430V431M283.5 430V431M284.5 430V431M285.5 430V431M286.5 430V431M287.5 430V431M288.5 430V431M289.5 430V431M290.5 430V431M291.5 430V431M292.5 430V431M293.5 430V431M294.5 430V431M295.5 430V431M296.5 430V431M297.5 430V431M298.5 430V431M299.5 430V431M300.5 430V431M301.5 430V431M302.5 430V431M303.5 430V431M304.5 430V431M305.5 430V431M306.5 430V431M307.5 430V431M308.5 430V431M309.5 430V431M310.5 430V431M311.5 430V431M312.5 430V431M313.5 430V431M314.5 430V431M315.5 430V431M316.5 430V431M317.5 430V431M318.5 430V431M319.5 430V431M320.5 430V431M321.5 430V431M322.5 430V431M323.5 430V431M324.5 430V431M325.5 430V431M326.5 430V431M327.5 430V431M328.5 430V431M329.5 430V431M330.5 430V431M331.5 430V431M332.5 430V431M333.5 430V431M334.5 430V431M335.5 430V431M336.5 430V431M337.5 430V431M338.5 430V431M339.5 430V431M340.5 430V431M341.5 430V431M342.5 430V431M343.5 430V431M344.5 430V431M345.5 430V431M346.5 430V431M347.5 430V431M348.5 430V431M349.5 430V431M350.5 430V431M351.5 430V431M352.5 430V431M353.5 430V431M354.5 430V431M355.5 430V431M356.5 430V431M357.5 430V431M358.5 430V431M359.5 430V431M360.5 430V431M361.5 430V431M362.5 430V431M363.5 430V431M364.5 430V431M365.5 430V431M366.5 430V431M367.5 430V431M368.5 430V431M369.5 430V431M370.5 430V431M371.5 430V431M372.5 430V431M373.5 430V431M374.5 430V431M375.5 430V431M376.5 430V431M377.5 430V431M378.5 430V431M379.5 430V431M380.5 430V431M381.5 430V431M382.5 430V431M383.5 430V431M384.5 430V431M385.5 430V431M386.5 430V431M387.5 430V431M388.5 430V431M389.5 430V431M390.5 430V431M391.5 430V431M392.5 430V431M393.5 430V431M394.5 430V431M395.5 430V431M396.5 430V431M397.5 430V431M398.5 430V431M399.5 430V431M400.5 430V431M401.5 430V431M402.5 430V431M403.5 430V431M404.5 430V431M405.5 430V431M406.5 430V431M407.5 430V431M408.5 430V431M409.5 430V431M410.5 430V431M411.5 430V431M412.5 430V431M413.5 430V431M414.5 430V431M415.5 430V431M416.5 430V431M417.5 430V431M418.5 430V431M419.5 430V431M420.5 430V431M421.5 430V431M422.5 430V431M423.5 430V431M424.5 430V431M425.5 430V431M426.5 430V431M427.5 430V431M428.5 430V431M429.5 430V431M430.5 430V431M431.5 430V431M432.5 430V431M433.5 430V431M434.5 430V431M435.5 430V431M436.5 430V431M437.5 430V431M438.5 430V431M439.5 430V431M440.5 430V431M441.5 430V431M442.5 430V431M443.5 430V431M444.5 430V431M445.5 430V431M446.5 430V431M447.5 430V431M448.5 430V431M449.5 430V431M450.5 430V431M451.5 430V431M452.5 430V431M453.5 430V431M454.5 430V431M455.5 430V431M456.5 430V431M457.5 430V431M458.5 430V431M459.5 430V431M460.5 430V431M461.5 430V431M462.5 430V431M463.5 430V431M464.5 430V431M465.5 430V431M466.5 430V431M467.5 430V431M468.5 430V431M469.5 430V431M470.5 430V431M471.5 430V431M472.5 430V431M473.5 430V431M474.5 430V431M475.5 430V431M476.5 430V431M477.5 430V431M478.5 430V431M479.5 430V431M480.5 430V431M481.5 430V431M482.5 430V431M483.5 430V431M484.5 430V431M485.5 430V431M486.5 430V431M487.5 430V431M488.5 430V431M489.5 430V431M490.5 430V431M491.5 430V431M492.5 430V431M493.5 430V431M494.5 430V431M495.5 430V431M496.5 430V431M497.5 429V431M498.5 429V430M499.5 428V430M500.5 428V429M501.5 427V429M502.5 426V428M503.5 426V427M504.5 425V427M505.5 424V426M506.5 424V425M507.5 423V425M508.5 422V424M509.5 421V423M510.5 420V422M511.5 420V421M512.5 419V421M513.5 418V420M514.5 417V419M515.5 416V418M516.5 416V417M517.5 415V417M518.5 414V416M519.5 413V415M520.5 412V414M521.5 412V413M522.5 411V413M523.5 410V412M524.5 409V411M525.5 408V410M526.5 407V409M527.5 406V408M528.5 405V407M529.5 404V406M530.5 404V405M531.5 403V405M532.5 402V404M533.5 401V403M534.5 400V402M535.5 399V401M536.5 398V400M537.5 397V399M538.5 396V398M539.5 396V397M540.5 395V397M541.5 394V396M542.5 393V395M543.5 392V394M544.5 391V393M545.5 390V392M546.5 389V391M547.5 389V390M548.5 388V390M549.5 387V389M550.5 386V388M551.5 386V387M552.5 385V387M553.5 384V386M554.5 384V385M555.5 383V385M556.5 383V384M557.5 382V384M558.5 382V383M559.5 381V383M560.5 381V382M561.5 380V382M562.5 380V381M563.5 379V381M564.5 379V380M565.5 378V380M566.5 378V379M567.5 378V379M568.5 377V379M569.5 377V378M570.5 377V378M571.5 376V378M572.5 376V377M573.5 376V377M574.5 376V377M575.5 375V377M576.5 375V376M577.5 375V376M578.5 375V376M579.5 375V376M580.5 374V376M581.5 374V375M582.5 374V375M583.5 374V375M584.5 374V375M585.5 373V375M586.5 373V374M587.5 373V374M588.5 373V374M589.5 373V374M590.5 373V374M591.5 373V374M592.5 372V374M593.5 372V373M594.5 372V373M595.5 372V373M596.5 372V373M597.5 372V373M598.5 372V373M599.5 372V373M600.5 372V373M601.5 372V373M602.5 372V373M603.5 372V373M604.5 372V373M605.5 372V373M606.5 372V373M607.5 372V373M608.5 372V373M609.5 372V373M610.5 372V373M611.5 372V373M612.5 372V373M613.5 372V373M614.5 372V373M615.5 372V373M616.5 372V373M617.5 372V373M618.5 372V373M619.5 372V373M620.5 372V373M621.5 372V373M622.5 372V373M623.5 372V373M624.5 372V373M625.5 372V373M626.5 372V373M627.5 372V373M628.5 372V373M629.5 372V373M630.5 372V373M631.5 372V373M632.5 372V373M633.5 372V373M634.5 372V373M635.5 372V373M636.5 372V373M637.5 372V373M638.5 372V373M639.5 372V373M640.5 372V373M641.5 372V373M642.5 372V373M643.5 372V373M644.5 372V373M645.5 372V373M646.5 372V373M647.5 372V373M648.5 372V374M649.5 373V374M650.5 373V374M651.5 373V374M652.5 373V374M653.5 373V374M654.5 373V374M655.5 373V374M656.5 373V374M657.5 373V374M658.5 373V374M659.5 373V375M660.5 374V375M661.5 374V375M662.5 374V375M663.5 374V375M664.5 374V375M665.5 374V375M666.5 374V375M667.5 374V375M668.5 374V375M669.5 374V375M670.5 374V375M671.5 374V375M672.5 374V375M673.5 374V375M674.5 374V375M675.5 374V376M676.5 375V376M677.5 375V376M678.5 375V376M679.5 375V376M680.5 375V376M681.5 375V376M682.5 375V376M683.5 375V376M684.5 375V376M685.5 375V376M686.5 375V377M687.5 375V377M688.5 376V377M689.5 376V377M690.5 376V377M691.5 376V377M692.5 376V377M693.5 376V377M694.5 376V377M695.5 376V377M696.5 376V377M697.5 376V377M698.5 376V377M699.5 376V377M700.5 376V378M701.5 376V377M702.5 376V377M703.5 376V377M704.5 376V377M705.5 376V378M706.5 376V378M707.5 376V377M708.5 376V378M709.5 376V378M710.5 376V378M711.5 376V378M712.5 376V378M713.5 377V378M714.5 377V378M715.5 377V378M716.5 377V378M717.5 377V378M718.5 377V378M719.5 377V378M720.5 377V378M721.5 377V378M722.5 377V378M723.5 377V378M724.5 377V378M725.5 377V378M726.5 377V378M727.5 377V379M728.5 377V379M729.5 377V379M730.5 377V379M731.5 377V379M732.5 378V379M733.5 378V379M734.5 378V379M735.5 378V379M736.5 378V379M737.5 378V379M738.5 378V379M739.5 378V379M740.5 378V379M741.5 378V379M742.5 378V379M743.5 378V379M744.5 378V379M745.5 378V379M746.5 378V379M747.5 378V379M748.5 378V379M749.5 378V379M750.5 378V379M751.5 378V379M752.5 378V379M753.5 378V379M754.5 378V379M755.5 378V380M756.5 379V380M757.5 378V380M758.5 379V380M759.5 379V380M760.5 379V380M761.5 379V380M762.5 379V380M763.5 379V380M764.5 379V380M765.5 379V380M766.5 379V380M767.5 379V380M768.5 379V381M769.5 379V381M770.5 379V381M771.5 380V381M772.5 380V381M773.5 380V381M774.5 380V381M775.5 380V381M776.5 380V381M777.5 380V381M778.5 380V381M779.5 380V381M780.5 380V381M781.5 380V381M782.5 380V381M783.5 380V381M784.5 380V382M785.5 381V382M786.5 381V382M787.5 381V382M788.5 381V382M789.5 381V382M790.5 381V382M791.5 381V382M792.5 381V383M793.5 381V383M794.5 382V383M795.5 381V383M796.5 382V383M797.5 382V383M798.5 382V383M799.5 382V383M800.5 382V383M801.5 382V383M802.5 382V384M803.5 382V384M804.5 383V384M805.5 383V384M806.5 383V384M807.5 383V384M808.5 383V384M809.5 383V384M810.5 383V384M811.5 383V384M812.5 383V384M813.5 383V384M814.5 383V384M815.5 383V384M816.5 383V385M817.5 384V385M818.5 384V385M819.5 384V385M820.5 384V385M821.5 384V385M822.5 384V386M823.5 384V386M824.5 385V386M825.5 385V386M826.5 385V386M827.5 385V386M828.5 385V386M829.5 385V386M830.5 385V386M831.5 385V386M832.5 385V387M833.5 385V387M834.5 386V387M835.5 386V387M836.5 386V387M837.5 386V387M838.5 386V387M839.5 386V387M840.5 386V388M841.5 387V388M842.5 387V388M843.5 387V388M844.5 387V388M845.5 387V388M846.5 387V388M847.5 387V388M848.5 387V388M849.5 387V388M850.5 387V389M851.5 388V389M852.5 388V389M853.5 388V389M854.5 388V389M855.5 388V389M856.5 388V389M857.5 388V389M858.5 388V389M859.5 388V389M860.5 388V389M861.5 388V390M862.5 389V390M863.5 389V390M864.5 389V390M865.5 389V390M866.5 389V390M867.5 389V390M868.5 389V390M869.5 389V390M870.5 389V390M871.5 389V390M872.5 389V390M873.5 389V390M874.5 389V391M875.5 390V391M876.5 390V391M877.5 390V391M878.5 390V391M879.5 390V391M880.5 390V391M881.5 390V391M882.5 390V391M883.5 390V391M884.5 390V391M885.5 390V391M886.5 390V391M887.5 390V391M888.5 390V391M889.5 390V391M890.5 390V392M891.5 390V391M892.5 390V391M893.5 390V391M894.5 390V391M895.5 390V391M896.5 390V392M897.5 391V392M898.5 390V392M899.5 390V392M900.5 391V392M901.5 391V392M902.5 391V392M903.5 391V392M904.5 391V392M905.5 391V392M906.5 391V392M907.5 391V392M908.5 391V392M909.5 391V392M910.5 391V393M911.5 391V393M912.5 392V393M913.5 392V393M914.5 392V394M915.5 393V394M916.5 393V394M917.5 393V394M918.5 393V394M919.5 393V395M920.5 393V395M921.5 394V395M922.5 394V395M923.5 394V395M924.5 394V395M925.5 394V395M926.5 394V395M927.5 394V395M928.5 394V395M929.5 394V395M930.5 394V395M931.5 394V395M932.5 394V395M933.5 394V395M934.5 394V395M935.5 394V395M936.5 394V396M937.5 394V396M938.5 394V396M939.5 395V396M940.5 395V396M941.5 395V396M942.5 395V396M943.5 395V396M944.5 395V396M945.5 395V396M946.5 395V396M947.5 395V396M948.5 395V396M949.5 395V396M950.5 395V396M951.5 395V396M952.5 395V396M953.5 395V396M954.5 395V396M955.5 395V396M956.5 395V396M957.5 395V396M958.5 395V396M959.5 394V396M960.5 394V396M961.5 395V396M962.5 395V396M963.5 395V396M964.5 395V396M965.5 394V396M966.5 394V396M967.5 394V396M968.5 394V396M969.5 394V396M970.5 394V395M971.5 394V396M972.5 394V396M973.5 394V396M974.5 394V396M975.5 394V396M976.5 394V396M977.5 394V395M978.5 394V395M979.5 394V395M980.5 394V395M981.5 394V395M982.5 394V395M983.5 394V395M984.5 394V395M985.5 394V395M986.5 394V395M987.5 394V395M988.5 393V395M989.5 393V394M990.5 393V394M991.5 393V394M992.5 393V394M993.5 393V394M994.5 393V394M995.5 393V394M996.5 393V394M997.5 393V394M998.5 393V394M999.5 393V394M1000.5 393V394M1001.5 393V394M1002.5 393V395M1003.5 394V395M1004.5 394V395M1005.5 394V395M1006.5 394V395M1007.5 394V395M1008.5 394V395M1009.5 394V396M1010.5 395V396M1011.5 395V396M1012.5 395V396M1013.5 395V396M1014.5 395V396M1015.5 395V396M1016.5 395V396M1017.5 395V397M1018.5 396V397M1019.5 396V397M1020.5 396V397M1021.5 396V397M1022.5 396V397M1023.5 396V397M1024.5 396V398M1025.5 397V398M1026.5 397V398M1027.5 397V398M1028.5 397V398M1029.5 397V398M1030.5 397V399M1031.5 398V399M1032.5 398V399M1033.5 398V399M1034.5 398V399M1035.5 398V399M1036.5 398V400M1037.5 399V400M1038.5 399V400M1039.5 399V400M1040.5 399V400M1041.5 399V400M1042.5 399V401M1043.5 400V401M1044.5 400V401M1045.5 400V401M1046.5 400V401M1047.5 400V401M1048.5 400V401M1049.5 400V402M1050.5 401V402M1051.5 401V402M1052.5 401V402M1053.5 401V402M1054.5 401V402M1055.5 401V403M1056.5 402V403M1057.5 402V403M1058.5 402V403M1059.5 402V403M1060.5 402V403M1061.5 402V403M1062.5 402V403M1063.5 402V404M1064.5 402V403M1065.5 402V403M1066.5 402V403M1067.5 402V404M1068.5 402V403M1069.5 402V403M1070.5 402V404M1071.5 402V404M1072.5 402V404M1073.5 403V404M1074.5 402V404M1075.5 403V404M1076.5 403V404M1077.5 403V404M1078.5 403V404M1079.5 403V404M1080.5 403V404M1081.5 403V404M1082.5 403V404M1083.5 403V404M1084.5 403V404M1085.5 402V404M1086.5 402V404M1087.5 402V403M1088.5 402V403M1089.5 402V404M1090.5 402V404M1091.5 403V404M1092.5 402V404M1093.5 402V404M1094.5 402V403M1095.5 402V404M1096.5 403V404M1097.5 403V404M1098.5 403V404M1099.5 403V404M1100.5 403V404M1101.5 403V404M1102.5 403V404M1103.5 403V404M1104.5 403V404M1105.5 402V404M1106.5 402V404M1107.5 403V404M1108.5 403V404M1109.5 403V404M1110.5 402V404M1111.5 402V404M1112.5 402V404M1113.5 402V404M1114.5 402V404M1115.5 402V404M1116.5 403V404M1117.5 402V404M1118.5 402V404M1119.5 402V404M1120.5 402V403M1121.5 402V403M1122.5 402V403M1123.5 402V403M1124.5 402V403M1125.5 402V403M1126.5 402V403M1127.5 402V403M1128.5 402V403M1129.5 402V403M1130.5 402V403M1131.5 402V403M1132.5 402V403M1133.5 402V403M1134.5 402V403M1135.5 402V403M1136.5 402V403M1137.5 402V403M1138.5 402V403M1139.5 402V403M1140.5 402V403M1141.5 402V403M1142.5 402V403M1143.5 402V403M1144.5 402V403M1145.5 402V403M1146.5 402V403M1147.5 402V403M1148.5 402V403M1149.5 402V403M1150.5 402V403M1151.5 402V403M1152.5 402V403M1153.5 402V403M1154.5 402V403M1155.5 402V403M1156.5 402V403M1157.5 401V403M1158.5 401V403M1159.5 402V403M1160.5 401V403M1161.5 401V403M1162.5 401V402M1163.5 401V402M1164.5 401V403M1165.5 401V402M1166.5 401V402M1167.5 401V402M1168.5 401V402M1169.5 401V403M1170.5 401V403M1171.5 401V402M1172.5 401V402M1173.5 401V402M1174.5 401V402M1175.5 401V402M1176.5 401V402M1177.5 401V402M1178.5 401V402M1179.5 401V402M1180.5 401V402M1181.5 401V402M1182.5 401V402M1183.5 401V402M1184.5 401V402M1185.5 401V402M1186.5 401V402M1187.5 401V402M1188.5 401V402M1189.5 401V402M1190.5 401V402M1191.5 401V402M1192.5 401V402M1193.5 401V402M1194.5 401V402M1195.5 401V402M1196.5 401V402M1197.5 400V402M1198.5 400V402M1199.5 400V402M1200.5 400V402M1201.5 401V402M1202.5 400V402M1203.5 401V402M1204.5 401V402M1205.5 400V402M1206.5 400V402M1207.5 400V402M1208.5 400V402M1209.5 400V402M1210.5 400V402M1211.5 401V402M1212.5 401V402M1213.5 400V402M1214.5 400V402M1215.5 400V401M1216.5 400V402M1217.5 400V401M1218.5 400V401M1219.5 400V401M1220.5 400V401M1221.5 400V401M1222.5 400V401M1223.5 400V401M1224.5 400V401M1225.5 400V401M1226.5 400V401M1227.5 399V401M1228.5 399V400M1229.5 399V400M1230.5 398V400M1231.5 398V400M1232.5 398V399M1233.5 398V399M1234.5 398V399M1235.5 398V399M1236.5 398V399M1237.5 398V399M1238.5 398V399M1239.5 398V399M1240.5 398V399M1241.5 398V399M1242.5 398V399M1243.5 398V399M1244.5 398V399M1245.5 398V399M1246.5 398V399M1247.5 398V399M1248.5 398V399M1249.5 398V399M1250.5 398V399M1251.5 398V399M1252.5 398V399M1253.5 398V399M1254.5 398V399M1255.5 398V399M1256.5 398V400M1257.5 399V400M1258.5 399V400M1259.5 399V400M1260.5 399V400M1261.5 399V400M1262.5 399V400M1263.5 399V400M1264.5 399V400M1265.5 399V400M1266.5 399V400M1267.5 399V400M1268.5 399V400M1269.5 399V400M1270.5 399V400M1271.5 399V400M1272.5 399V400M1273.5 399V400M1274.5 399V400M1275.5 399V400M1276.5 399V400M1277.5 399V400M1278.5 399V401M1279.5 399V401M1280.5 400V401M1281.5 400V401M1282.5 400V401M1283.5 400V401M1284.5 400V401M1285.5 400V401M1286.5 400V401M1287.5 400V401M1288.5 400V401M1289.5 400V401M1290.5 400V401M1291.5 400V401M1292.5 400V401M1293.5 400V401M1294.5 400V401M1295.5 400V401M1296.5 400V401M1297.5 400V401M1298.5 400V401M1299.5 400V401M1300.5 400V401M1301.5 400V401M1302.5 400V401M1303.5 400V401M1304.5 400V401M1305.5 400V401M1306.5 400V402M1307.5 400V402M1308.5 400V401M1309.5 400V401M1310.5 400V402M1311.5 400V401M1312.5 400V401M1313.5 400V401M1314.5 400V401M1315.5 400V401M1316.5 399V401M1317.5 399V401M1318.5 399V400M1319.5 399V400M1320.5 399V400M1321.5 399V400M1322.5 399V400M1323.5 399V400M1324.5 399V400M1325.5 399V400M1326.5 399V400M1327.5 399V400M1328.5 399V400M1329.5 399V400M1330.5 399V400M1331.5 399V400M1332.5 399V400M1333.5 399V400M1334.5 399V400M1335.5 399V400M1336.5 399V400M1337.5 399V400M1338.5 399V400M1339.5 399V400M1340.5 399V400M1341.5 398V400M1342.5 391V399M1343.5 384V392M1344.5 374V385M1345.5 367V375M1346.5 360V368M1347.5 356V361M1348.5 355V357M1349.5 355V356M1350.5 355V356M1351.5 355V357M1352.5 356V357M1353.5 356V358M1354.5 357V358M1355.5 357V359M1356.5 358V360M1357.5 359V361M1358.5 360V362M1359.5 361V363M1360.5 362V364M1361.5 363V365M1362.5 364V366M1363.5 365V367M1364.5 366V368M1365.5 367V370M1366.5 369V371M1367.5 370V373M1368.5 372V374M1369.5 373V376M1370.5 375V377M1371.5 376V379M1372.5 378V380M1373.5 379V382M1374.5 381V383M1375.5 382V385M1376.5 384V386M1377.5 385V388M1378.5 387V389M1379.5 388V391M1380.5 390V392M1381.5 391V394M1382.5 393V395M1383.5 394V396M1384.5 395V397M1385.5 396V399M1386.5 398V400M1387.5 399V401M1388.5 400V402M1389.5 401V403M1390.5 402V404M1391.5 403V404M1392.5 403V405M1393.5 404V406M1394.5 405V407M1395.5 406V408M1396.5 407V409M1397.5 408V409M1398.5 408V410M1399.5 409V411M1400.5 410V412M1401.5 411V412M1402.5 411V413M1403.5 412V413M1404.5 412V414M1405.5 413V415M1406.5 414V415M1407.5 414V416M1408.5 415V416M1409.5 415V417M1410.5 416V418M1411.5 417V418M1412.5 417V418M1413.5 417V419M1414.5 418V419M1415.5 418V420M1416.5 419V420M1417.5 419V420M1418.5 419V421M1419.5 420V421M1420.5 420V421M1421.5 420V421M1422.5 420V422M1423.5 421V422M1424.5 421V422M1425.5 421V423M1426.5 422V423M1427.5 422V423M1428.5 422V423M1429.5 422V424M1430.5 423V424M1431.5 423V424M1432.5 423V424M1433.5 423V424M1434.5 423V425M1435.5 424V425M1436.5 424V425M1437.5 424V425M1438.5 424V425M1439.5 424V426M1440.5 425V426M1441.5 425V426M1442.5 425V426M1443.5 425V426M1444.5 425V427M1445.5 426V427M1446.5 426V427M1447.5 426V427M1448.5 426V427M1449.5 426V427M1450.5 426V427M1451.5 426V428M1452.5 427V428M1453.5 427V428M1454.5 427V428M1455.5 427V428M1456.5 427V428M1457.5 427V428M1458.5 427V428M1459.5 427V429M1460.5 428V429M1461.5 428V429M1462.5 428V429M1463.5 428V429M1464.5 428V429M1465.5 428V429M1466.5 428V429M1467.5 428V429M1468.5 428V429M1469.5 428V430M1470.5 429V430M1471.5 429V430M1472.5 429V430M1473.5 429V430M1474.5 429V430M1475.5 429V430M1476.5 429V430M1477.5 429V430M1478.5 429V430M1479.5 429V430M1480.5 429V430M1481.5 429V430M1482.5 429V430M1483.5 429V430M1484.5 429V430M1485.5 429V430M1486.5 429V430M1487.5 429V430M1488.5 429V430M1489.5 429V430M1490.5 429V430M1491.5 429V431M1492.5 430V431M1493.5 430V431M1494.5 430V431M1495.5 430V431M1496.5 430V431M1497.5 430V431M1498.5 430V431M1499.5 430V431M1500.5 430V431M1501.5 430V431M1502.5 430V431M1503.5 430V431M1504.5 430V431M1505.5 430V431M1506.5 430V431M1507.5 430V431M1508.5 430V431M1509.5 430V431M1510.5 430V431M1511.5 430V431M1512.5 430V431M1513.5 430V431M1514.5 430V431M1515.5 430V431M1516.5 430V431M1517.5 430V431M1518.5 430V431M1519.5 430V431M1520.5 430V431M1521.5 430V431M1522.5 430V431M1523.5 430V431M1524.5 430V431M1525.5 430V431M1526.5 430V431M1527.5 430V431M1528.5 430V431M1529.5 430V431M1530.5 430V431M1531.5 430V431M1532.5 430V431M1533.5 430V431M1534.5 430V431M1535.5 430V431M1536.5 430V431M1537.5 430V431M1538.5 430V431M1539.5 430V431M1540.5 430V431M1541.5 430V431M1542.5 430V431M1543.5 430V431M1544.5 430V431M1545.5 430V431M1546.5 430V431M1547.5 430V431M1548.5 430V431M1549.5 430V431M1550.5 430V431M1551.5 430V431M1552.5 430V431M1553.5 430V431M1554.5 430V431M1555.5 430V431M1556.5 430V431M1557.5 430V431M1558.5 430V431M1559.5 430V431M1560.5 430V431M1561.5 430V431M1562.5 430V431M1563.5 430V431M1564.5 430V431M1565.5 430V431M1566.5 430V431M1567.5 430V431M1568.5 430V431M1569.5 430V431M1570.5 430V431M1571.5 430V431M1572.5 430V431M1573.5 430V431M1574.5 430V431M1575.5 430V431M1576.5 430V431M1577.5 430V431M1578.5 430V431M1579.5 430V431M1580.5 430V431M1581.5 430V431M1582.5 430V431M1583.5 430V431M1584.5 430V431M1585.5 430V431M1586.5 430V431M1587.5 430V431M1588.5 430V431M1589.5 430V431M1590.5 430V431M1591.5 430V431M1592.5 430V431M1593.5 430V431M1594.5 430V431M1595.5 430V431M1596.5 430V431M1597.5 430V431M1598.5 430V431M1599.5 430V431M1600.5 430V431M1601.5 430V431M1602.5 430V431M1603.5 430V431M1604.5 430V431M1605.5 430V431M1606.5 430V431M1607.5 430V431M1608.5 430V431M1609.5 430V431M1610.5 430V431M1611.5 430V431M1612.5 430V431M1613.5 430V431M1614.5 430V431M1615.5 430V431M1616.5 430V431M1617.5 430V431M1618.5 430V431M1619.5 430V431M1620.5 430V431M1621.5 430V431M1622.5 430V431M1623.5 430V431M1624.5 430V431M1625.5 430V431M1626.5 430V431M1627.5 430V431M1628.5 430V431M1629.5 430V431M1630.5 430V431M1631.5 430V431M1632.5 430V431M1633.5 430V431M1634.5 430V431M1635.5 430V431M1636.5 430V431M1637.5 430V431M1638.5 430V431M1639.5 430V431M1640.5 430V431M1641.5 430V431M1642.5 430V431M1643.5 430V431M1644.5 430V431M1645.5 430V431M1646.5 430V431M1647.5 430V431M1648.5 430V431M1649.5 430V431M1650.5 430V431M1651.5 430V431M1652.5 430V431M1653.5 430V431M1654.5 430V431M1655.5 430V431M1656.5 430V431M1657.5 430V431M1658.5 430V431M1659.5 430V431M1660.5 430V431M1661.5 430V431M1662.5 430V431M1663.5 430V431M1664.5 430V431M1665.5 430V431M1666.5 430V431M1667.5 430V431M1668.5 430V431M1669.5 430V431M1670.5 430V431M1671.5 430V431M1672.5 430V431M1673.5 430V431M1674.5 430V431M1675.5 430V431M1676.5 430V431M1677.5 430V431M1678.5 430V431M1679.5 430V431M1680.5 430V431M1681.5 430V431M1682.5 430V431M1683.5 430V431M1684.5 430V431M1685.5 430V431M1686.5 430V431M1687.5 430V431M1688.5 430V431M1689.5 430V431M1690.5 430V431M1691.5 430V431M1692.5 430V431M1693.5 430V431M1694.5 430V431M1695.5 430V431M1696.5 430V431M1697.5 430V431M1698.5 430V431M1699.5 430V431M1700.5 430V431M1701.5 430V431M1702.5 430V431M1703.5 430V431M1704.5 430V431M1705.5 430V431M1706.5 430V431M1707.5 430V431M1708.5 430V431M1709.5 430V431M1710.5 430V431M1711.5 430V431M1712.5 430V431M1713.5 430V431M1714.5 430V431M1715.5 430V431M1716.5 430V431M1717.5 430V431M1718.5 430V431M1719.5 430V431M1720.5 430V431M1721.5 430V431M1722.5 430V431M1723.5 430V431M1724.5 430V431M1725.5 430V431M1726.5 430V431M1727.5 430V431M1728.5 430V431M1729.5 430V431M1730.5 430V431M1731.5 430V431M1732.5 430V431M1733.5 430V431M1734.5 430V431M1735.5 430V431M1736.5 430V431M1737.5 430V431M1738.5 430V431M1739.5 430V431M1740.5 430V431M1741.5 430V431M1742.5 430V431M1743.5 430V431M1744.5 430V431M1745.5 430V431M1746.5 430V431M1747.5 430V431M1748.5 430V431M1749.5 430V431M1750.5 430V431" fill="none" stroke="#8ed030" stroke-width="1" shape-rendering="crispEdges"/>
<path d="M3.5 734V735M4.5 734V735M5.5 734V735M6.5 734V735M7.5 734V735M8.5 734V735M9.5 734V735M10.5 734V735M11.5 734V735M12.5 734V735M13.5 734V735M14.5 734V735M15.5 734V735M16.5 734V735M17.5 734V735M18.5 734V735M19.5 734V735M20.5 734V735M21.5 734V735M22.5 734V735M23.5 734V735M24.5 734V735M25.5 734V735M26.5 734V735M27.5 734V735M28.5 734V735M29.5 734V735M30.5 734V735M31.5 734V735M32.5 734V735M33.5 734V735M34.5 734V735M35.5 734V735M36.5 734V735M37.5 734V735M38.5 734V735M39.5 734V735M40.5 734V735M41.5 734V735M42.5 734V735M43.5 734V735M44.5 734V735M45.5 734V735M46.5 734V735M47.5 734V735M48.5 734V735M49.5 734V735M50.5 734V735M51.5 734V735M52.5 734V735M53.5 734V735M54.5 734V736M55.5 734V736M56.5 734V735M57.5 734V735M58.5 733V735M59.5 733V734M60.5 733V734M61.5 733V734M62.5 732V734M63.5 732V733M64.5 732V733M65.5 732V733M66.5 731V733M67.5 731V732M68.5 731V732M69.5 731V732M70.5 730V732M71.5 730V731M72.5 730V731M73.5 729V731M74.5 729V730M75.5 729V730M76.5 729V730M77.5 728V730M78.5 728V729M79.5 728V729M80.5 728V729M81.5 727V729M82.5 727V728M83.5 727V728M84.5 727V728M85.5 726V728M86.5 726V727M87.5 726V727M88.5 725V727M89.5 725V726M90.5 725V726M91.5 725V726M92.5 724V726M93.5 724V725M94.5 724V725M95.5 724V725M96.5 723V725M97.5 723V724M98.5 723V724M99.5 723V724M100.5 722V724M101.5 722V723M102.5 722V723M103.5 721V723M104.5 721V722M105.5 721V722M106.5 721V722M107.5 720V722M108.5 720V721M109.5 720V721M110.5 720V721M111.5 719V721M112.5 719V720M113.5 719V720M114.5 719V720M115.5 718V720M116.5 718V719M117.5 718V719M118.5 718V719M119.5 717V719M120.5 717V718M121.5 717V718M122.5 717V718M123.5 716V718M124.5 716V717M125.5 716V717M126.5 715V717M127.5 715V716M128.5 715V716M129.5 715V716M130.5 714V716M131.5 714V715M132.5 714V715M133.5 714V715M134.5 713V715M135.5 713V714M136.5 713V714M137.5 713V714M138.5 712V714M139.5 712V713M140.5 712V713M141.5 712V713M142.5 711V713M143.5 711V712M144.5 711V712M145.5 711V712M146.5 710V712M147.5 710V711M148.5 710V711M149.5 710V711M150.5 709V711M151.5 709V710M152.5 709V710M153.5 708V710M154.5 708V709M155.5 708V709M156.5 708V709M157.5 707V709M158.5 707V708M159.5 707V708M160.5 707V708M161.5 706V708M162.5 706V707M163.5 706V707M164.5 706V707M165.5 705V707M166.5 705V706M167.5 705V706M168.5 705V706M169.5 704V706M170.5 704V705M171.5 704V705M172.5 704V705M173.5 703V705M174.5 703V704M175.5 703V704M176.5 703V704M177.5 702V704M178.5 702V703M179.5 702V703M180.5 702V703M181.5 701V703M182.5 701V702M183.5 701V702M184.5 701V702M185.5 700V702M186.5 700V701M187.5 700V701M188.5 700V701M189.5 699V701M190.5 699V700M191.5 699V700M192.5 698V700M193.5 698V699M194.5 698V699M195.5 698V699M196.5 697V699M197.5 697V698M198.5 697V698M199.5 697V698M200.5 696V698M201.5 696V697M202.5 696V697M203.5 696V697M204.5 695V697M205.5 695V696M206.5 695V696M207.5 695V696M208.5 694V696M209.5 694V695M210.5 694V695M211.5 694V695M212.5 693V695M213.5 693V694M214.5 693V694M215.5 693V694M216.5 692V694M217.5 692V693M218.5 692V693M219.5 692V693M220.5 691V693M221.5 691V692M222.5 691V692M223.5 691V692M224.5 690V692M225.5 690V691M226.5 690V691M227.5 690V691M228.5 689V691M229.5 689V690M230.5 689V690M231.5 689V690M232.5 688V690M233.5 688V689M234.5 688V689M235.5 688V689M236.5 687V689M237.5 687V688M238.5 687V688M239.5 687V688M240.5 686V688M241.5 686V687M242.5 686V687M243.5 686V687M244.5 685V687M245.5 685V686M246.5 685V686M247.5 685V686M248.5 685V686M249.5 684V686M250.5 684V685M251.5 684V685M252.5 684V685M253.5 683V685M254.5 683V684M255.5 683V684M256.5 683V684M257.5 682V684M258.5 682V683M259.5 682V683M260.5 682V683M261.5 681V683M262.5 681V682M263.5 681V682M264.5 681V682M265.5 681V682M266.5 680V682M267.5 680V681M268.5 680V681M269.5 680V681M270.5 679V681M271.5 679V680M272.5 679V680M273.5 679V680M274.5 678V680M275.5 678V679M276.5 678V679M277.5 678V679M278.5 677V679M279.5 677V678M280.5 677V678M281.5 677V678M282.5 677V678M283.5 676V678M284.5 676V677M285.5 676V677M286.5 676V677M287.5 675V677M288.5 675V676M289.5 675V676M290.5 675V676M291.5 674V676M292.5 674V675M293.5 674V675M294.5 674V675M295.5 673V675M296.5 673V674M297.5 673V674M298.5 673V674M299.5 673V674M300.5 672V674M301.5 672V673M302.5 672V673M303.5 672V673M304.5 671V673M305.5 671V672M306.5 671V672M307.5 671V672M308.5 671V672M309.5 670V672M310.5 670V671M311.5 670V671M312.5 670V671M313.5 669V671M314.5 669V670M315.5 669V670M316.5 669V670M317.5 669V670M318.5 668V670M319.5 668V669M320.5 668V669M321.5 668V669M322.5 667V669M323.5 667V668M324.5 667V668M325.5 667V668M326.5 667V668M327.5 666V668M328.5 666V667M329.5 666V667M330.5 666V667M331.5 665V667M332.5 665V666M333.5 665V666M334.5 665V666M335.5 665V666M336.5 664V666M337.5 664V665M338.5 664V665M339.5 664V665M340.5 664V665M341.5 663V665M342.5 663V664M343.5 663V664M344.5 663V664M345.5 662V664M346.5 662V663M347.5 662V663M348.5 662V663M349.5 662V663M350.5 661V663M351.5 661V662M352.5 661V662M353.5 661V662M354.5 660V662M355.5 660V661M356.5 660V661M357.5 660V661M358.5 660V661M359.5 659V661M360.5 659V660M361.5 659V660M362.5 659V660M363.5 658V660M364.5 658V659M365.5 658V659M366.5 658V659M367.5 658V659M368.5 657V659M369.5 657V658M370.5 657V658M371.5 657V658M372.5 657V658M373.5 656V658M374.5 656V657M375.5 656V657M376.5 656V657M377.5 655V657M378.5 655V656M379.5 655V656M380.5 655V656M381.5 655V656M382.5 654V656M383.5 654V655M384.5 654V655M385.5 654V655M386.5 653V655M387.5 653V654M388.5 653V654M389.5 653V654M390.5 653V654M391.5 652V654M392.5 652V653M393.5 652V653M394.5 652V653M395.5 651V653M396.5 651V652M397.5 651V652M398.5 651V652M399.5 651V652M400.5 650V652M401.5 650V651M402.5 650V651M403.5 650V651M404.5 650V651M405.5 649V651M406.5 649V650M407.5 649V650M408.5 649V650M409.5 649V650M410.5 648V650M411.5 648V649M412.5 648V649M413.5 648V649M414.5 648V649M415.5 647V649M416.5 647V648M417.5 647V648M418.5 647V648M419.5 647V648M420.5 646V648M421.5 646V647M422.5 646V647M423.5 646V647M424.5 646V647M425.5 645V647M426.5 645V646M427.5 645V646M428.5 645V646M429.5 645V646M430.5 644V646M431.5 644V645M432.5 644V645M433.5 644V645M434.5 644V645M435.5 643V645M436.5 643V644M437.5 643V644M438.5 643V644M439.5 643V644M440.5 642V644M441.5 642V643M442.5 642V643M443.5 642V643M444.5 642V643M445.5 641V643M446.5 641V642M447.5 641V642M448.5 641V642M449.5 641V642M450.5 640V642M451.5 640V641M452.5 640V641M453.5 640V641M454.5 640V641M455.5 639V641M456.5 639V640M457.5 639V640M458.5 639V640M459.5 639V640M460.5 638V640M461.5 638V639M462.5 638V639M463.5 638V639M464.5 638V639M465.5 637V639M466.5 637V638M467.5 637V638M468.5 637V638M469.5 637V638M470.5 636V638M471.5 636V637M472.5 636V637M473.5 636V637M474.5 636V637M475.5 635V637M476.5 635V636M477.5 635V636M478.5 635V636M479.5 635V636M480.5 634V636M481.5 634V635M482.5 634V635M483.5 634V635M484.5 634V635M485.5 633V635M486.5 633V634M487.5 633V634M488.5 633V634M489.5 633V634M490.5 632V634M491.5 632V633M492.5 632V633M493.5 632V633M494.5 632V633M495.5 631V633M496.5 631V632M497.5 631V632M498.5 631V632M499.5 631V632M500.5 631V632M501.5 630V632M502.5 630V631M503.5 630V631M504.5 630V631M505.5 630V631M506.5 629V631M507.5 629V630M508.5 629V630M509.5 629V630M510.5 629V630M511.5 629V630M512.5 628V630M513.5 628V629M514.5 628V629M515.5 628V629M516.5 628V629M517.5 628V629M518.5 627V629M519.5 627V628M520.5 627V628M521.5 627V628M522.5 627V628M523.5 626V628M524.5 626V627M525.5 626V627M526.5 626V627M527.5 626V627M528.5 626V627M529.5 625V627M530.5 625V626M531.5 625V626M532.5 625V626M533.5 625V626M534.5 625V626M535.5 624V626M536.5 624V625M537.5 624V625M538.5 624V625M539.5 624V625M540.5 623V625M541.5 623V624M542.5 623V624M543.5 623V624M544.5 623V624M545.5 623V624M546.5 622V624M547.5 622V623M548.5 622V623M549.5 622V623M550.5 622V623M551.5 621V623M552.5 621V622M553.5 621V622M554.5 621V622M555.5 621V622M556.5 621V622M557.5 620V622M558.5 620V621M559.5 620V621M560.5 620V621M561.5 620V621M562.5 620V621M563.5 619V621M564.5 619V620M565.5 619V620M566.5 619V620M567.5 619V620M568.5 618V620M569.5 618V619M570.5 618V619M571.5 618V619M572.5 618V619M573.5 618V619M574.5 617V619M575.5 617V618M576.5 617V618M577.5 617V618M578.5 617V618M579.5 617V618M580.5 616V618M581.5 616V617M582.5 616V617M583.5 616V617M584.5 616V617M585.5 616V617M586.5 615V617M587.5 615V616M588.5 615V616M589.5 615V616M590.5 615V616M591.5 615V616M592.5 614V616M593.5 614V615M594.5 614V615M595.5 614V615M596.5 614V615M597.5 614V615M598.5 614V615M599.5 613V615M600.5 613V614M601.5 613V614M602.5 613V614M603.5 613V614M604.5 613V614M605.5 612V614M606.5 612V613M607.5 612V613M608.5 612V613M609.5 612V613M610.5 612V613M611.5 612V613M612.5 611V613M613.5 611V612M614.5 611V612M615.5 611V612M616.5 611V612M617.5 611V612M618.5 610V612M619.5 610V611M620.5 610V611M621.5 610V611M622.5 610V611M623.5 610V611M624.5 610V611M625.5 609V611M626.5 609V610M627.5 609V610M628.5 609V610M629.5 609V610M630.5 609V610M631.5 608V610M632.5 608V609M633.5 608V609M634.5 608V609M635.5 608V609M636.5 608V609M637.5 607V609M638.5 607V608M639.5 607V608M640.5 607V608M641.5 607V608M642.5 607V608M643.5 607V608M644.5 606V608M645.5 606V607M646.5 606V607M647.5 606V607M648.5 606V607M649.5 606V607M650.5 605V607M651.5 605V606M652.5 605V606M653.5 605V606M654.5 605V606M655.5 605V606M656.5 605V606M657.5 604V606M658.5 604V605M659.5 604V605M660.5 604V605M661.5 604V605M662.5 604V605M663.5 603V605M664.5 603V604M665.5 603V604M666.5 603V604M667.5 603V604M668.5 603V604M669.5 603V604M670.5 602V604M671.5 602V603M672.5 602V603M673.5 602V603M674.5 602V603M675.5 602V603M676.5 602V603M677.5 601V603M678.5 601V602M679.5 601V602M680.5 601V602M681.5 601V602M682.5 601V602M683.5 601V602M684.5 600V602M685.5 600V601M686.5 600V601M687.5 600V601M688.5 600V601M689.5 600V601M690.5 600V601M691.5 599V601M692.5 599V600M693.5 599V600M694.5 599V600M695.5 599V600M696.5 599V600M697.5 599V600M698.5 598V600M699.5 598V599M700.5 598V599M701.5 598V599M702.5 598V599M703.5 598V599M704.5 598V599M705.5 597V599M706.5 597V598M707.5 597V598M708.5 597V598M709.5 597V598M710.5 597V598M711.5 597V598M712.5 596V598M713.5 596V597M714.5 596V597M715.5 596V597M716.5 596V597M717.5 596V597M718.5 596V597M719.5 595V597M720.5 595V596M721.5 595V596M722.5 595V596M723.5 595V596M724.5 595V596M725.5 595V596M726.5 594V596M727.5 594V595M728.5 594V595M729.5 594V595M730.5 594V595M731.5 594V595M732.5 594V595M733.5 593V595M734.5 593V594M735.5 593V594M736.5 593V594M737.5 593V594M738.5 593V594M739.5 593V594M740.5 592V594M741.5 592V593M742.5 592V593M743.5 592V593M744.5 592V593M745.5 592V593M746.5 592V593M747.5 591V593M748.5 591V592M749.5 591V592M750.5 591V592M751.5 591V592M752.5 591V592M753.5 591V592M754.5 591V592M755.5 590V592M756.5 590V591M757.5 590V591M758.5 590V591M759.5 590V591M760.5 590V591M761.5 590V591M762.5 590V591M763.5 589V591M764.5 589V590M765.5 589V590M766.5 589V590M767.5 589V590M768.5 589V590M769.5 589V590M770.5 589V590M771.5 589V590M772.5 588V590M773.5 588V589M774.5 588V589M775.5 588V589M776.5 588V589M777.5 588V589M778.5 588V589M779.5 588V589M780.5 587V589M781.5 587V588M782.5 587V588M783.5 587V588M784.5 587V588M785.5 587V588M786.5 587V588M787.5 587V588M788.5 587V588M789.5 586V588M790.5 586V587M791.5 586V587M792.5 586V587M793.5 586V587M794.5 586V587M795.5 586V587M796.5 586V587M797.5 585V587M798.5 585V586M799.5 585V586M800.5 585V586M801.5 585V586M802.5 585V586M803.5 585V586M804.5 585V586M805.5 585V586M806.5 584V586M807.5 584V585M808.5 584V585M809.5 584V585M810.5 584V585M811.5 584V585M812.5 584V585M813.5 584V585M814.5 583V585M815.5 583V584M816.5 583V584M817.5 583V584M818.5 583V584M819.5 583V584M820.5 583V584M821.5 583V584M822.5 583V584M823.5 582V584M824.5 582V583M825.5 582V583M826.5 582V583M827.5 582V583M828.5 582V583M829.5 582V583M830.5 582V583M831.5 581V583M832.5 581V582M833.5 581V582M834.5 581V582M835.5 581V582M836.5 581V582M837.5 581V582M838.5 581V582M839.5 581V582M840.5 580V582M841.5 580V581M842.5 580V581M843.5 580V581M844.5 580V581M845.5 580V581M846.5 580V581M847.5 580V581M848.5 580V581M849.5 580V581M850.5 579V581M851.5 579V580M852.5 579V580M853.5 579V580M854.5 579V580M855.5 579V580M856.5 579V580M857.5 579V580M858.5 579V580M859.5 579V580M860.5 578V580M861.5 578V579M862.5 578V579M863.5 578V579M864.5 578V579M865.5 578V579M866.5 578V579M867.5 578V579M868.5 578V579M869.5 578V579M870.5 577V579M871.5 577V578M872.5 577V578M873.5 577V578M874.5 577V578M875.5 577V578M876.5 577V578M877.5 577V578M878.5 577V578M879.5 577V578M880.5 576V578M881.5 576V577M882.5 576V577M883.5 576V577M884.5 576V577M885.5 576V577M886.5 576V577M887.5 576V577M888.5 576V577M889.5 576V577M890.5 575V577M891.5 575V576M892.5 575V576M893.5 575V576M894.5 575V576M895.5 575V576M896.5 575V576M897.5 575V576M898.5 575V576M899.5 575V576M900.5 574V576M901.5 574V575M902.5 574V575M903.5 574V575M904.5 574V575M905.5 574V575M906.5 574V575M907.5 574V575M908.5 574V575M909.5 574V575M910.5 573V575M911.5 573V574M912.5 573V574M913.5 573V574M914.5 573V574M915.5 573V574M916.5 573V574M917.5 573V574M918.5 573V574M919.5 573V574M920.5 572V574M921.5 572V573M922.5 572V573M923.5 572V573M924.5 572V573M925.5 572V573M926.5 572V573M927.5 572V573M928.5 572V573M929.5 572V573M930.5 571V573M931.5 571V572M932.5 571V572M933.5 571V572M934.5 571V572M935.5 571V572M936.5 571V572M937.5 571V572M938.5 571V572M939.5 570V572M940.5 570V571M941.5 570V571M942.5 570V571M943.5 570V571M944.5 570V571M945.5 570V571M946.5 570V571M947.5 570V571M948.5 570V571M949.5 569V571M950.5 569V570M951.5 569V570M952.5 569V570M953.5 569V570M954.5 569V570M955.5 569V570M956.5 569V570M957.5 569V570M958.5 569V570M959.5 568V570M960.5 568V569M961.5 568V569M962.5 568V569M963.5 568V569M964.5 568V569M965.5 568V569M966.5 568V569M967.5 568V569M968.5 568V569M969.5 567V569M970.5 567V568M971.5 567V568M972.5 567V568M973.5 567V568M974.5 567V568M975.5 567V568M976.5 567V568M977.5 567V568M978.5 567V568M979.5 566V568M980.5 566V567M981.5 566V567M982.5 566V567M983.5 566V567M984.5 566V567M985.5 566V567M986.5 566V567M987.5 566V567M988.5 566V567M989.5 565V567M990.5 565V566M991.5 565V566M992.5 565V566M993.5 565V566M994.5 565V566M995.5 565V566M996.5 565V566M997.5 565V566M998.5 565V566M999.5 565V566M1000.5 565V566M1001.5 565V566M1002.5 564V566M1003.5 564V565M1004.5 564V565M1005.5 564V565M1006.5 564V565M1007.5 564V565M1008.5 564V565M1009.5 564V565M1010.5 564V565M1011.5 564V565M1012.5 564V565M1013.5 564V565M1014.5 563V565M1015.5 563V564M1016.5 563V564M1017.5 563V564M1018.5 563V564M1019.5 563V564M1020.5 563V564M1021.5 563V564M1022.5 563V564M1023.5 563V564M1024.5 563V564M1025.5 563V564M1026.5 563V564M1027.5 562V564M1028.5 562V563M1029.5 562V563M1030.5 562V563M1031.5 562V563M1032.5 562V563M1033.5 562V563M1034.5 562V563M1035.5 562V563M1036.5 562V563M1037.5 562V563M1038.5 562V563M1039.5 561V563M1040.5 561V562M1041.5 561V562M1042.5 561V562M1043.5 561V562M1044.5 561V562M1045.5 561V562M1046.5 561V562M1047.5 561V562M1048.5 561V562M1049.5 561V562M1050.5 561V562M1051.5 561V562M1052.5 560V562M1053.5 560V561M1054.5 560V561M1055.5 560V561M1056.5 560V561M1057.5 560V561M1058.5 560V561M1059.5 560V561M1060.5 560V561M1061.5 560V561M1062.5 560V561M1063.5 560V561M1064.5 560V561M1065.5 560V561M1066.5 559V561M1067.5 559V560M1068.5 559V560M1069.5 559V560M1070.5 559V560M1071.5 559V560M1072.5 559V560M1073.5 559V560M1074.5 559V560M1075.5 559V560M1076.5 559V560M1077.5 559V560M1078.5 559V560M1079.5 558V560M1080.5 558V559M1081.5 558V559M1082.5 558V559M1083.5 558V559M1084.5 558V559M1085.5 558V559M1086.5 558V559M1087.5 558V559M1088.5 558V559M1089.5 558V559M1090.5 558V559M1091.5 558V559M1092.5 558V559M1093.5 557V559M1094.5 557V558M1095.5 557V558M1096.5 557V558M1097.5 557V558M1098.5 557V558M1099.5 557V558M1100.5 557V558M1101.5 557V558M1102.5 557V558M1103.5 557V558M1104.5 557V558M1105.5 557V558M1106.5 557V558M1107.5 557V558M1108.5 557V558M1109.5 556V558M1110.5 556V557M1111.5 556V557M1112.5 556V557M1113.5 556V557M1114.5 556V557M1115.5 556V557M1116.5 556V557M1117.5 556V557M1118.5 556V557M1119.5 556V557M1120.5 556V557M1121.5 556V557M1122.5 556V557M1123.5 556V557M1124.5 556V557M1125.5 556V557M1126.5 556V557M1127.5 556V557M1128.5 556V557M1129.5 556V557M1130.5 555V557M1131.5 555V556M1132.5 555V556M1133.5 555V556M1134.5 555V556M1135.5 555V556M1136.5 555V556M1137.5 555V556M1138.5 555V556M1139.5 555V556M1140.5 555V556M1141.5 555V556M1142.5 555V556M1143.5 555V556M1144.5 555V556M1145.5 555V556M1146.5 555V556M1147.5 555V556M1148.5 555V556M1149.5 555V556M1150.5 555V556M1151.5 554V556M1152.5 554V555M1153.5 554V555M1154.5 554V555M1155.5 554V555M1156.5 554V555M1157.5 554V555M1158.5 554V555M1159.5 554V555M1160.5 554V555M1161.5 554V555M1162.5 554V555M1163.5 554V555M1164.5 554V555M1165.5 554V555M1166.5 554V555M1167.5 554V555M1168.5 554V555M1169.5 554V555M1170.5 554V555M1171.5 554V555M1172.5 554V555M1173.5 554V555M1174.5 554V555M1175.5 554V555M1176.5 553V555M1177.5 553V554M1178.5 553V554M1179.5 553V554M1180.5 553V554M1181.5 553V554M1182.5 553V554M1183.5 553V554M1184.5 553V554M1185.5 553V554M1186.5 553V554M1187.5 553V554M1188.5 553V554M1189.5 553V554M1190.5 553V554M1191.5 553V554M1192.5 553V554M1193.5 553V554M1194.5 553V554M1195.5 553V554M1196.5 553V554M1197.5 553V554M1198.5 553V554M1199.5 553V554M1200.5 553V554M1201.5 553V554M1202.5 552V554M1203.5 552V553M1204.5 552V553M1205.5 552V553M1206.5 552V553M1207.5 552V553M1208.5 552V553M1209.5 552V553M1210.5 552V553M1211.5 552V553M1212.5 552V553M1213.5 552V553M1214.5 552V553M1215.5 552V553M1216.5 552V553M1217.5 552V553M1218.5 552V553M1219.5 552V553M1220.5 552V553M1221.5 552V553M1222.5 552V553M1223.5 552V553M1224.5 552V553M1225.5 552V553M1226.5 552V553M1227.5 552V553M1228.5 552V553M1229.5 552V553M1230.5 552V553M1231.5 552V553M1232.5 552V553M1233.5 551V553M1234.5 551V552M1235.5 551V552M1236.5 551V552M1237.5 551V552M1238.5 551V552M1239.5 551V552M1240.5 551V552M1241.5 551V552M1242.5 551V552M1243.5 551V552M1244.5 551V552M1245.5 551V552M1246.5 551V552M1247.5 551V552M1248.5 551V552M1249.5 551V552M1250.5 551V552M1251.5 551V552M1252.5 551V552M1253.5 551V552M1254.5 551V552M1255.5 551V552M1256.5 551V552M1257.5 551V552M1258.5 551V552M1259.5 551V552M1260.5 551V552M1261.5 551V552M1262.5 551V552M1263.5 551V552M1264.5 551V552M1265.5 551V552M1266.5 551V552M1267.5 551V552M1268.5 550V552M1269.5 550V551M1270.5 550V551M1271.5 550V551M1272.5 550V551M1273.5 550V551M1274.5 550V551M1275.5 550V551M1276.5 550V551M1277.5 550V551M1278.5 550V551M1279.5 550V551M1280.5 550V551M1281.5 550V551M1282.5 550V551M1283.5 550V551M1284.5 550V551M1285.5 550V551M1286.5 550V551M1287.5 550V551M1288.5 550V551M1289.5 550V551M1290.5 550V551M1291.5 550V551M1292.5 550V551M1293.5 550V551M1294.5 550V551M1295.5 550V551M1296.5 550V551M1297.5 550V551M1298.5 550V551M1299.5 550V551M1300.5 550V551M1301.5 550V551M1302.5 550V551M1303.5 550V551M1304.5 550V551M1305.5 550V551M1306.5 550V551M1307.5 550V551M1308.5 550V551M1309.5 550V551M1310.5 550V551M1311.5 550V551M1312.5 549V551M1313.5 549V550M1314.5 549V550M1315.5 549V550M1316.5 549V550M1317.5 549V550M1318.5 549V550M1319.5 549V550M1320.5 549V550M1321.5 549V550M1322.5 549V550M1323.5 549V550M1324.5 549V550M1325.5 549V550M1326.5 549V550M1327.5 549V550M1328.5 549V550M1329.5 549V550M1330.5 549V550M1331.5 549V550M1332.5 549V550M1333.5 549V550M1334.5 549V550M1335.5 549V550M1336.5 549V550M1337.5 549V550M1338.5 549V550M1339.5 549V550M1340.5 549V550M1341.5 549V550M1342.5 549V550M1343.5 549V550M1344.5 549V550M1345.5 549V550M1346.5 549V550M1347.5 549V550M1348.5 549V550M1349.5 549V550M1350.5 549V550M1351.5 549V550M1352.5 549V550M1353.5 549V550M1354.5 549V550M1355.5 549V550M1356.5 549V550M1357.5 549V550M1358.5 549V550M1359.5 549V550M1360.5 549V550M1361.5 549V550M1362.5 549V550M1363.5 549V550M1364.5 548V550M1365.5 548V549M1366.5 548V549M1367.5 548V549M1368.5 548V549M1369.5 548V549M1370.5 548V549M1371.5 548V549M1372.5 548V549M1373.5 548V549M1374.5 548V549M1375.5 548V549M1376.5 548V549M1377.5 548V549M1378.5 548V549M1379.5 548V549M1380.5 548V549M1381.5 548V549M1382.5 548V549M1383.5 548V549M1384.5 548V549M1385.5 548V549M1386.5 548V549M1387.5 548V549M1388.5 548V549M1389.5 548V549M1390.5 548V549M1391.5 548V549M1392.5 548V549M1393.5 548V549M1394.5 548V549M1395.5 548V549M1396.5 548V549M1397.5 548V549M1398.5 548V549M1399.5 548V549M1400.5 548V549M1401.5 548V549M1402.5 548V549M1403.5 548V549M1404.5 548V549M1405.5 548V549M1406.5 548V549M1407.5 548V549M1408.5 548V549M1409.5 548V549M1410.5 548V549M1411.5 548V549M1412.5 548V549M1413.5 548V550M1414.5 549V550M1415.5 549V550M1416.5 549V550M1417.5 549V550M1418.5 549V550M1419.5 549V550M1420.5 549V550M1421.5 549V550M1422.5 549V550M1423.5 549V550M1424.5 549V550M1425.5 549V550M1426.5 549V550M1427.5 549V550M1428.5 549V550M1429.5 549V550M1430.5 549V550M1431.5 549V550M1432.5 549V550M1433.5 549V550M1434.5 549V550M1435.5 549V550M1436.5 549V550M1437.5 549V550M1438.5 549V550M1439.5 549V550M1440.5 549V550M1441.5 549V550M1442.5 549V550M1443.5 549V550M1444.5 549V550M1445.5 549V550M1446.5 549V550M1447.5 549V550M1448.5 549V550M1449.5 549V550M1450.5 549V550M1451.5 549V550M1452.5 549V550M1453.5 549V550M1454.5 549V550M1455.5 549V550M1456.5 549V550M1457.5 549V550M1458.5 549V550M1459.5 549V550M1460.5 549V550M1461.5 549V550M1462.5 549V550M1463.5 549V550M1464.5 549V550M1465.5 549V550M1466.5 549V550M1467.5 549V550M1468.5 549V550M1469.5 549V550M1470.5 549V551M1471.5 550V551M1472.5 550V551M1473.5 550V551M1474.5 550V551M1475.5 550V551M1476.5 550V551M1477.5 550V551M1478.5 550V551M1479.5 550V551M1480.5 550V551M1481.5 550V551M1482.5 550V551M1483.5 550V551M1484.5 550V551M1485.5 550V551M1486.5 550V551M1487.5 550V551M1488.5 550V551M1489.5 550V551M1490.5 550V551M1491.5 550V551M1492.5 550V551M1493.5 550V551M1494.5 550V551M1495.5 550V551M1496.5 550V551M1497.5 550V551M1498.5 550V551M1499.5 550V551M1500.5 550V551M1501.5 550V551M1502.5 550V551M1503.5 550V551M1504.5 550V551M1505.5 550V551M1506.5 550V551M1507.5 550V551M1508.5 550V552M1509.5 551V552M1510.5 551V552M1511.5 551V552M1512.5 551V552M1513.5 551V552M1514.5 551V552M1515.5 551V552M1516.5 551V552M1517.5 551V552M1518.5 551V552M1519.5 551V552M1520.5 551V552M1521.5 551V552M1522.5 551V552M1523.5 551V552M1524.5 551V552M1525.5 551V552M1526.5 551V552M1527.5 551V552M1528.5 551V552M1529.5 551V552M1530.5 551V552M1531.5 551V552M1532.5 551V552M1533.5 551V552M1534.5 551V552M1535.5 551V552M1536.5 551V552M1537.5 551V552M1538.5 551V552M1539.5 551V552M1540.5 551V552M1541.5 551V553M1542.5 552V553M1543.5 552V553M1544.5 552V553M1545.5 552V553M1546.5 552V553M1547.5 552V553M1548.5 552V553M1549.5 552V553M1550.5 552V553M1551.5 552V553M1552.5 552V553M1553.5 552V553M1554.5 552V553M1555.5 552V553M1556.5 552V553M1557.5 552V553M1558.5 552V553M1559.5 552V553M1560.5 552V553M1561.5 552V553M1562.5 552V553M1563.5 552V553M1564.5 552V553M1565.5 552V553M1566.5 552V553M1567.5 552V553M1568.5 552V553M1569.5 552V554M1570.5 553V554M1571.5 553V554M1572.5 553V554M1573.5 553V554M1574.5 553V554M1575.5 553V554M1576.5 553V554M1577.5 553V554M1578.5 553V554M1579.5 553V554M1580.5 553V554M1581.5 553V554M1582.5 553V554M1583.5 553V554M1584.5 553V554M1585.5 553V554M1586.5 553V554M1587.5 553V554M1588.5 553V554M1589.5 553V554M1590.5 553V554M1591.5 553V554M1592.5 553V555M1593.5 554V555M1594.5 554V555M1595.5 554V555M1596.5 554V555M1597.5 554V555M1598.5 554V555M1599.5 554V555M1600.5 554V555M1601.5 554V555M1602.5 554V555M1603.5 554V555M1604.5 554V555M1605.5 554V555M1606.5 554V555M1607.5 554V555M1608.5 554V555M1609.5 554V555M1610.5 554V555M1611.5 554V555M1612.5 554V555M1613.5 554V555M1614.5 554V556M1615.5 555V556M1616.5 555V556M1617.5 555V556M1618.5 555V556M1619.5 555V556M1620.5 555V556M1621.5 555V556M1622.5 555V556M1623.5 555V556M1624.5 555V556M1625.5 555V556M1626.5 555V556M1627.5 555V556M1628.5 555V556M1629.5 555V556M1630.5 555V556M1631.5 555V556M1632.5 555V556M1633.5 555V556M1634.5 555V556M1635.5 555V556M1636.5 555V557M1637.5 556V557M1638.5 556V557M1639.5 556V557M1640.5 556V557M1641.5 556V557M1642.5 556V557M1643.5 556V557M1644.5 556V557M1645.5 556V557M1646.5 556V557M1647.5 556V557M1648.5 556V557M1649.5 556V557M1650.5 556V557M1651.5 556V557M1652.5 556V557M1653.5 556V557M1654.5 556V557M1655.5 556V557M1656.5 556V557M1657.5 556V557M1658.5 556V558M1659.5 557V558M1660.5 557V558M1661.5 557V558M1662.5 557V558M1663.5 557V558M1664.5 557V558M1665.5 557V558M1666.5 557V558M1667.5 557V558M1668.5 557V558M1669.5 557V558M1670.5 557V558M1671.5 557V558M1672.5 557V558M1673.5 557V558M1674.5 557V558M1675.5 557V558M1676.5 557V558M1677.5 557V558M1678.5 557V559M1679.5 558V559M1680.5 558V559M1681.5 558V559M1682.5 558V559M1683.5 558V559M1684.5 558V559M1685.5 558V559M1686.5 558V559M1687.5 558V559M1688.5 558V559M1689.5 558V559M1690.5 558V559M1691.5 558V559M1692.5 558V559M1693.5 558V559M1694.5 558V559M1695.5 558V559M1696.5 558V559M1697.5 558V560M1698.5 559V560M1699.5 559V560M1700.5 559V560M1701.5 559V560M1702.5 559V560M1703.5 559V560M1704.5 559V560M1705.5 559V560M1706.5 559V560M1707.5 559V560M1708.5 559V560M1709.5 559V560M1710.5 559V560M1711.5 559V560M1712.5 559V560M1713.5 559V560M1714.5 559V560M1715.5 559V560M1716.5 559V561M1717.5 560V561M1718.5 560V561M1719.5 560V561M1720.5 560V561M1721.5 560V561M1722.5 560V561M1723.5 560V561M1724.5 560V561M1725.5 560V561M1726.5 560V561M1727.5 560V561M1728.5 560V561M1729.5 560V561M1730.5 560V561M1731.5 560V561M1732.5 560V561M1733.5 560V561M1734.5 560V561M1735.5 560V562M1736.5 561V562M1737.5 561V562M1738.5 561V562M1739.5 561V562M1740.5 561V562M1741.5 561V562M1742.5 561V562M1743.5 561V562M1744.5 561V562M1745.5 561V562M1746.5 561V562M1747.5 561V562M1748.5 561V562M1749.5 561V562M1750.5 561V562" fill="none" stroke="#f5911e" stroke-width="1" shape-rendering="crispEdges"/>
<path d="M3.5 959V961M4.5 959V961M5.5 959V960M6.5 959V961M7.5 959V961M8.5 960V961M9.5 960V961M10.5 959V961M11.5 959V961M12.5 960V961M13.5 959V961M14.5 959V961M15.5 959V961M16.5 959V961M17.5 959V961M18.5 959V961M19.5 960V961M20.5 959V961M21.5 959V961M22.5 959V960M23.5 959V961M24.5 959V961M25.5 960V961M26.5 959V961M27.5 959V960M28.5 959V961M29.5 959V961M30.5 959V960M31.5 959V961M32.5 959V961M33.5 959V961M34.5 959V961M35.5 959V961M36.5 959V961M37.5 959V960M38.5 959V960M39.5 959V960M40.5 959V960M41.5 959V961M42.5 960V961M43.5 959V961M44.5 959V961M45.5 960V961M46.5 959V961M47.5 959V961M48.5 959V961M49.5 959V960M50.5 959V960M51.5 959V960M52.5 959V960M53.5 959V960M54.5 959V960M55.5 959V960M56.5 959V960M57.5 959V960M58.5 959V961M59.5 960V961M60.5 960V961M61.5 959V961M62.5 960V961M63.5 960V961M64.5 959V961M65.5 959V960M66.5 959V960M67.5 959V961M68.5 960V961M69.5 960V961M70.5 960V961M71.5 960V961M72.5 960V961M73.5 960V961M74.5 960V961M75.5 960V961M76.5 960V961M77.5 960V961M78.5 960V961M79.5 959V961M80.5 960V961M81.5 960V961M82.5 960V961M83.5 959V961M84.5 959V961M85.5 959V961M86.5 959V961M87.5 959V961M88.5 959V961M89.5 959V960M90.5 959V961M91.5 960V961M92.5 959V961M93.5 959V961M94.5 960V961M95.5 960V961M96.5 960V961M97.5 960V961M98.5 960V961M99.5 960V961M100.5 960V961M101.5 960V961M102.5 960V961M103.5 960V961M104.5 960V961M105.5 960V961M106.5 960V961M107.5 960V961M108.5 960V961M109.5 960V961M110.5 960V961M111.5 960V961M112.5 960V961M113.5 960V961M114.5 960V961M115.5 960V961M116.5 960V961M117.5 960V961M118.5 960V961M119.5 960V961M120.5 960V961M121.5 960V961M122.5 960V961M123.5 960V961M124.5 960V961M125.5 960V961M126.5 960V961M127.5 960V961M128.5 960V961M129.5 960V961M130.5 960V961M131.5 959V961M132.5 959V961M133.5 960V961M134.5 960V961M135.5 960V961M136.5 960V961M137.5 960V961M138.5 960V961M139.5 960V961M140.5 960V961M141.5 960V961M142.5 960V961M143.5 960V961M144.5 960V961M145.5 960V961M146.5 960V961M147.5 960V961M148.5 960V961M149.5 960V961M150.5 960V961M151.5 960V961M152.5 960V961M153.5 960V961M154.5 960V961M155.5 960V961M156.5 960V961M157.5 960V961M158.5 960V961M159.5 960V961M160.5 960V961M161.5 960V961M162.5 960V961M163.5 960V961M164.5 960V961M165.5 960V962M166.5 960V961M167.5 960V961M168.5 960V961M169.5 960V962M170.5 960V962M171.5 960V962M172.5 961V962M173.5 961V962M174.5 961V962M175.5 961V962M176.5 961V962M177.5 961V962M178.5 961V962M179.5 961V962M180.5 961V962M181.5 961V962M182.5 961V962M183.5 961V962M184.5 961V962M185.5 960V962M186.5 961V962M187.5 960V962M188.5 961V962M189.5 961V962M190.5 961V962M191.5 961V962M192.5 961V962M193.5 961V962M194.5 961V962M195.5 961V962M196.5 961V962M197.5 961V962M198.5 961V962M199.5 961V962M200.5 961V962M201.5 961V962M202.5 961V962M203.5 961V962M204.5 961V962M205.5 961V962M206.5 961V962M207.5 961V962M208.5 961V962M209.5 961V962M210.5 961V962M211.5 961V962M212.5 961V962M213.5 961V962M214.5 961V962M215.5 961V962M216.5 961V962M217.5 961V962M218.5 961V962M219.5 961V962M220.5 961V962M221.5 961V962M222.5 961V962M223.5 961V962M224.5 961V962M225.5 961V962M226.5 961V962M227.5 961V962M228.5 961V963M229.5 961V963M230.5 961V963M231.5 961V963M232.5 961V963M233.5 961V963M234.5 962V963M235.5 962V963M236.5 962V963M237.5 962V963M238.5 962V963M239.5 962V963M240.5 962V963M241.5 961V963M242.5 962V963M243.5 962V963M244.5 962V963M245.5 962V963M246.5 962V963M247.5 962V963M248.5 962V963M249.5 962V963M250.5 962V963M251.5 962V963M252.5 962V963M253.5 962V963M254.5 962V963M255.5 962V963M256.5 962V963M257.5 962V963M258.5 962V963M259.5 962V963M260.5 962V963M261.5 962V963M262.5 962V963M263.5 962V963M264.5 962V963M265.5 962V963M266.5 962V963M267.5 962V963M268.5 962V963M269.5 962V963M270.5 962V963M271.5 962V963M272.5 962V963M273.5 962V963M274.5 962V963M275.5 962V963M276.5 962V963M277.5 962V963M278.5 962V963M279.5 962V963M280.5 962V963M281.5 962V963M282.5 962V963M283.5 962V963M284.5 962V963M285.5 962V963M286.5 962V963M287.5 962V963M288.5 962V963M289.5 962V964M290.5 963V964M291.5 963V964M292.5 962V964M293.5 962V964M294.5 962V964M295.5 962V964M296.5 962V963M297.5 962V963M298.5 962V964M299.5 963V964M300.5 963V964M301.5 962V964M302.5 963V964M303.5 963V964M304.5 963V964M305.5 963V964M306.5 963V964M307.5 963V964M308.5 963V964M309.5 963V964M310.5 963V964M311.5 963V964M312.5 963V964M313.5 963V964M314.5 963V964M315.5 963V964M316.5 963V964M317.5 963V964M318.5 963V965M319.5 961V967M320.5 964V970M321.5 964V968M322.5 964V966M323.5 965V966M324.5 965V966M325.5 965V966M326.5 965V966M327.5 965V966M328.5 965V966M329.5 965V966M330.5 965V966M331.5 965V966M332.5 965V966M333.5 965V967M334.5 965V966M335.5 965V966M336.5 965V966M337.5 965V966M338.5 965V966M339.5 965V966M340.5 965V966M341.5 965V966M342.5 965V966M343.5 965V966M344.5 965V966M345.5 964V966M346.5 964V966M347.5 964V966M348.5 964V965M349.5 964V966M350.5 965V966M351.5 965V966M352.5 965V966M353.5 965V966M354.5 965V966M355.5 965V966M356.5 965V966M357.5 965V966M358.5 965V966M359.5 965V966M360.5 965V967M361.5 965V966M362.5 965V966M363.5 965V966M364.5 965V966M365.5 965V966M366.5 965V966M367.5 965V966M368.5 964V966M369.5 963V965M370.5 963V965M371.5 964V965M372.5 964V965M373.5 964V965M374.5 963V965M375.5 963V965M376.5 964V965M377.5 964V965M378.5 964V965M379.5 964V966M380.5 964V966M381.5 964V965M382.5 964V966M383.5 964V965M384.5 964V966M385.5 964V966M386.5 964V966M387.5 964V966M388.5 964V966M389.5 964V965M390.5 964V965M391.5 964V965M392.5 964V965M393.5 964V965M394.5 964V965M395.5 964V966M396.5 964V965M397.5 964V965M398.5 964V966M399.5 964V966M400.5 964V966M401.5 964V965M402.5 964V965M403.5 964V965M404.5 964V965M405.5 964V965M406.5 964V965M407.5 964V965M408.5 964V965M409.5 964V965M410.5 964V965M411.5 964V965M412.5 964V966M413.5 964V965M414.5 964V965M415.5 964V965M416.5 964V965M417.5 964V965M418.5 964V965M419.5 964V965M420.5 964V965M421.5 964V965M422.5 964V965M423.5 964V965M424.5 964V965M425.5 964V966M426.5 965V966M427.5 965V966M428.5 965V966M429.5 965V966M430.5 965V966M431.5 965V966M432.5 964V966M433.5 965V966M434.5 965V966M435.5 965V966M436.5 965V966M437.5 965V966M438.5 965V966M439.5 965V966M440.5 964V966M441.5 964V966M442.5 965V966M443.5 965V966M444.5 965V966M445.5 965V966M446.5 965V966M447.5 965V966M448.5 965V966M449.5 965V966M450.5 965V966M451.5 964V966M452.5 965V966M453.5 965V966M454.5 964V966M455.5 964V966M456.5 965V966M457.5 964V966M458.5 964V965M459.5 964V965M460.5 964V966M461.5 965V966M462.5 965V966M463.5 965V966M464.5 965V966M465.5 965V966M466.5 965V966M467.5 965V966M468.5 964V966M469.5 964V966M470.5 964V966M471.5 965V966M472.5 965V966M473.5 964V966M474.5 964V966M475.5 964V966M476.5 964V965M477.5 964V966M478.5 964V966M479.5 964V966M480.5 965V966M481.5 964V966M482.5 964V965M483.5 964V965M484.5 964V965M485.5 964V965M486.5 964V965M487.5 964V965M488.5 964V965M489.5 964V966M490.5 964V965M491.5 964V965M492.5 964V965M493.5 964V965M494.5 964V966M495.5 964V965M496.5 963V965M497.5 962V964M498.5 961V963M499.5 960V962M500.5 959V961M501.5 959V960M502.5 958V960M503.5 958V959M504.5 957V959M505.5 957V958M506.5 956V958M507.5 956V958M508.5 956V958M509.5 955V957M510.5 955V956M511.5 955V956M512.5 955V956M513.5 955V956M514.5 954V956M515.5 953V955M516.5 954V955M517.5 952V955M518.5 952V954M519.5 952V953M520.5 952V953M521.5 952V954M522.5 951V953M523.5 951V952M524.5 951V952M525.5 950V952M526.5 950V951M527.5 949V951M528.5 949V950M529.5 948V950M530.5 948V950M531.5 948V949M532.5 947V949M533.5 947V948M534.5 946V948M535.5 946V947M536.5 945V947M537.5 945V946M538.5 945V946M539.5 944V946M540.5 944V946M541.5 944V945M542.5 943V945M543.5 943V944M544.5 943V944M545.5 943V944M546.5 942V944M547.5 942V943M548.5 941V943M549.5 941V942M550.5 940V942M551.5 940V941M552.5 940V941M553.5 940V941M554.5 939V941M555.5 939V940M556.5 939V940M557.5 939V940M558.5 939V940M559.5 938V940M560.5 937V939M561.5 937V938M562.5 937V939M563.5 937V938M564.5 937V938M565.5 937V938M566.5 936V938M567.5 936V937M568.5 936V937M569.5 935V937M570.5 935V936M571.5 935V936M572.5 935V936M573.5 935V936M574.5 934V936M575.5 934V936M576.5 934V935M577.5 934V935M578.5 934V935M579.5 933V935M580.5 933V934M581.5 933V935M582.5 933V934M583.5 933V934M584.5 932V934M585.5 932V934M586.5 932V933M587.5 932V933M588.5 932V933M589.5 932V933M590.5 931V933M591.5 931V933M592.5 931V933M593.5 931V932M594.5 931V932M595.5 930V932M596.5 930V932M597.5 930V931M598.5 930V931M599.5 930V931M600.5 929V931M601.5 928V930M602.5 928V929M603.5 928V930M604.5 928V929M605.5 927V929M606.5 928V929M607.5 927V929M608.5 926V928M609.5 926V927M610.5 926V927M611.5 926V927M612.5 926V927M613.5 925V927M614.5 925V927M615.5 925V927M616.5 925V927M617.5 925V926M618.5 924V926M619.5 924V925M620.5 924V925M621.5 924V925M622.5 923V925M623.5 923V924M624.5 923V924M625.5 923V924M626.5 923V924M627.5 922V924M628.5 922V923M629.5 921V923M630.5 921V922M631.5 921V923M632.5 921V922M633.5 920V922M634.5 920V922M635.5 920V921M636.5 920V921M637.5 920V921M638.5 920V921M639.5 919V921M640.5 919V920M641.5 918V920M642.5 918V920M643.5 918V920M644.5 918V919M645.5 918V919M646.5 918V919M647.5 917V919M648.5 917V918M649.5 917V918M650.5 916V918M651.5 916V917M652.5 915V917M653.5 915V917M654.5 915V917M655.5 915V917M656.5 915V916M657.5 914V916M658.5 914V916M659.5 915V916M660.5 915V916M661.5 914V916M662.5 913V915M663.5 913V914M664.5 913V914M665.5 913V914M666.5 912V914M667.5 912V914M668.5 912V913M669.5 912V913M670.5 911V913M671.5 911V912M672.5 910V912M673.5 911V912M674.5 910V912M675.5 910V912M676.5 910V911M677.5 910V911M678.5 910V911M679.5 910V912M680.5 910V911M681.5 909V911M682.5 909V910M683.5 909V910M684.5 908V910M685.5 908V910M686.5 908V910M687.5 908V909M688.5 907V909M689.5 907V909M690.5 907V909M691.5 907V908M692.5 907V908M693.5 907V908M694.5 906V908M695.5 906V908M696.5 905V907M697.5 905V907M698.5 905V907M699.5 905V906M700.5 905V907M701.5 905V906M702.5 904V906M703.5 905V906M704.5 904V906M705.5 904V905M706.5 903V905M707.5 903V904M708.5 903V904M709.5 902V904M710.5 903V904M711.5 902V904M712.5 902V904M713.5 902V904M714.5 902V904M715.5 902V904M716.5 902V904M717.5 902V903M718.5 902V903M719.5 902V903M720.5 902V903M721.5 901V903M722.5 900V902M723.5 900V902M724.5 900V902M725.5 900V901M726.5 900V901M727.5 899V901M728.5 899V901M729.5 899V900M730.5 899V900M731.5 899V900M732.5 899V900M733.5 898V900M734.5 898V900M735.5 898V899M736.5 898V899M737.5 898V899M738.5 898V899M739.5 898V899M740.5 897V899M741.5 897V899M742.5 897V899M743.5 897V899M744.5 897V898M745.5 896V898M746.5 897V898M747.5 896V898M748.5 896V897M749.5 896V897M750.5 895V897M751.5 895V896M752.5 894V896M753.5 894V896M754.5 894V896M755.5 894V895M756.5 894V895M757.5 894V895M758.5 894V895M759.5 893V895M760.5 893V895M761.5 893V894M762.5 893V894M763.5 892V894M764.5 892V893M765.5 892V894M766.5 892V893M767.5 892V893M768.5 891V893M769.5 891V892M770.5 891V892M771.5 891V892M772.5 890V892M773.5 890V891M774.5 889V891M775.5 889V891M776.5 889V891M777.5 889V891M778.5 889V890M779.5 888V890M780.5 888V890M781.5 887V889M782.5 887V888M783.5 887V888M784.5 886V888M785.5 887V888M786.5 886V888M787.5 886V888M788.5 886V887M789.5 885V887M790.5 885V886M791.5 885V887M792.5 885V886M793.5 884V886M794.5 884V886M795.5 884V886M796.5 883V885M797.5 884V885M798.5 884V885M799.5 883V885M800.5 883V885M801.5 882V884M802.5 882V884M803.5 882V884M804.5 882V883M805.5 882V884M806.5 882V883M807.5 881V883M808.5 881V883M809.5 881V882M810.5 880V882M811.5 880V881M812.5 880V881M813.5 879V881M814.5 879V881M815.5 879V880M816.5 879V880M817.5 878V880M818.5 878V879M819.5 878V879M820.5 878V879M821.5 877V879M822.5 877V879M823.5 877V878M824.5 876V878M825.5 876V878M826.5 876V877M827.5 876V877M828.5 876V877M829.5 875V877M830.5 876V877M831.5 875V877M832.5 874V876M833.5 874V876M834.5 874V876M835.5 874V875M836.5 874V875M837.5 874V875M838.5 873V875M839.5 873V874M840.5 873V874M841.5 873V874M842.5 872V874M843.5 872V873M844.5 872V873M845.5 872V873M846.5 871V873M847.5 871V873M848.5 871V873M849.5 871V872M850.5 871V872M851.5 871V872M852.5 871V872M853.5 870V872M854.5 870V872M855.5 870V872M856.5 870V871M857.5 870V871M858.5 869V871M859.5 869V870M860.5 868V870M861.5 869V870M862.5 868V870M863.5 867V869M864.5 868V869M865.5 868V869M866.5 867V869M867.5 867V868M868.5 867V868M869.5 867V868M870.5 867V868M871.5 866V868M872.5 866V867M873.5 865V867M874.5 865V867M875.5 865V867M876.5 865V866M877.5 864V866M878.5 864V865M879.5 863V865M880.5 863V865M881.5 863V865M882.5 863V865M883.5 863V864M884.5 862V864M885.5 862V863M886.5 862V863M887.5 861V863M888.5 861V863M889.5 861V863M890.5 861V863M891.5 861V862M892.5 861V862M893.5 861V862M894.5 861V863M895.5 861V863M896.5 861V862M897.5 860V862M898.5 859V861M899.5 859V861M900.5 859V861M901.5 858V860M902.5 858V859M903.5 857V859M904.5 857V858M905.5 857V858M906.5 857V858M907.5 856V858M908.5 856V857M909.5 855V857M910.5 855V857M911.5 855V856M912.5 855V856M913.5 854V856M914.5 854V856M915.5 854V856M916.5 854V856M917.5 854V855M918.5 854V855M919.5 854V855M920.5 853V855M921.5 853V855M922.5 853V854M923.5 853V854M924.5 853V854M925.5 853V854M926.5 852V854M927.5 851V853M928.5 851V853M929.5 850V852M930.5 850V851M931.5 850V852M932.5 850V851M933.5 850V851M934.5 849V851M935.5 848V850M936.5 847V850M937.5 847V849M938.5 847V849M939.5 847V848M940.5 847V848M941.5 846V848M942.5 846V848M943.5 846V848M944.5 846V848M945.5 846V847M946.5 846V847M947.5 846V847M948.5 846V847M949.5 846V847M950.5 846V847M951.5 846V847M952.5 846V847M953.5 846V847M954.5 845V847M955.5 845V847M956.5 845V847M957.5 845V846M958.5 845V846M959.5 845V847M960.5 845V847M961.5 845V847M962.5 845V847M963.5 844V846M964.5 844V846M965.5 844V845M966.5 843V845M967.5 843V845M968.5 843V845M969.5 843V844M970.5 843V845M971.5 843V845M972.5 843V845M973.5 844V845M974.5 843V845M975.5 843V845M976.5 843V844M977.5 842V844M978.5 842V844M979.5 842V844M980.5 842V843M981.5 842V843M982.5 842V843M983.5 842V843M984.5 841V843M985.5 841V843M986.5 841V843M987.5 842V843M988.5 842V844M989.5 842V843M990.5 842V843M991.5 841V843M992.5 841V843M993.5 841V842M994.5 841V843M995.5 842V844M996.5 842V844M997.5 841V843M998.5 841V842M999.5 840V842M1000.5 840V841M1001.5 839V841M1002.5 839V840M1003.5 837V840M1004.5 837V839M1005.5 836V838M1006.5 836V837M1007.5 836V838M1008.5 836V838M1009.5 835V837M1010.5 836V837M1011.5 835V837M1012.5 834V836M1013.5 835V836M1014.5 834V836M1015.5 834V836M1016.5 834V835M1017.5 834V835M1018.5 833V835M1019.5 833V834M1020.5 833V834M1021.5 832V834M1022.5 833V834M1023.5 833V834M1024.5 833V834M1025.5 832V834M1026.5 832V834M1027.5 832V834M1028.5 832V834M1029.5 832V834M1030.5 832V833M1031.5 832V833M1032.5 831V833M1033.5 831V833M1034.5 831V832M1035.5 830V832M1036.5 830V831M1037.5 829V831M1038.5 829V830M1039.5 829V830M1040.5 829V830M1041.5 829V830M1042.5 829V830M1043.5 828V830M1044.5 827V829M1045.5 827V828M1046.5 826V828M1047.5 826V828M1048.5 826V827M1049.5 825V827M1050.5 825V826M1051.5 825V827M1052.5 825V827M1053.5 824V826M1054.5 824V826M1055.5 824V826M1056.5 824V825M1057.5 824V826M1058.5 824V825M1059.5 824V825M1060.5 823V825M1061.5 823V824M1062.5 823V824M1063.5 823V824M1064.5 823V824M1065.5 822V824M1066.5 821V823M1067.5 821V823M1068.5 821V822M1069.5 821V822M1070.5 821V822M1071.5 821V822M1072.5 821V822M1073.5 821V822M1074.5 821V822M1075.5 820V822M1076.5 820V822M1077.5 819V821M1078.5 819V820M1079.5 819V820M1080.5 818V820M1081.5 818V820M1082.5 818V820M1083.5 818V820M1084.5 818V819M1085.5 818V819M1086.5 818V819M1087.5 817V819M1088.5 818V819M1089.5 817V819M1090.5 816V818M1091.5 816V817M1092.5 816V817M1093.5 814V817M1094.5 815V817M1095.5 815V817M1096.5 815V817M1097.5 815V817M1098.5 815V817M1099.5 815V816M1100.5 814V816M1101.5 814V816M1102.5 814V815M1103.5 814V815M1104.5 814V815M1105.5 813V815M1106.5 813V815M1107.5 813V815M1108.5 813V815M1109.5 813V814M1110.5 813V814M1111.5 812V814M1112.5 812V814M1113.5 812V813M1114.5 812V813M1115.5 812V813M1116.5 811V813M1117.5 811V812M1118.5 811V812M1119.5 810V812M1120.5 810V812M1121.5 810V811M1122.5 810V811M1123.5 810V811M1124.5 809V811M1125.5 809V810M1126.5 808V810M1127.5 808V810M1128.5 808V809M1129.5 808V810M1130.5 808V809M1131.5 807V809M1132.5 808V809M1133.5 807V809M1134.5 807V808M1135.5 807V808M1136.5 806V808M1137.5 806V808M1138.5 806V808M1139.5 805V808M1140.5 805V807M1141.5 806V807M1142.5 805V807M1143.5 805V807M1144.5 804V806M1145.5 804V806M1146.5 804V806M1147.5 805V806M1148.5 804V806M1149.5 805V806M1150.5 804V806M1151.5 804V806M1152.5 804V806M1153.5 804V806M1154.5 804V805M1155.5 803V805M1156.5 803V804M1157.5 803V804M1158.5 803V804M1159.5 803V804M1160.5 803V804M1161.5 803V804M1162.5 803V804M1163.5 803V804M1164.5 803V804M1165.5 802V804M1166.5 803V804M1167.5 803V804M1168.5 802V804M1169.5 802V803M1170.5 801V803M1171.5 801V803M1172.5 801V803M1173.5 802V803M1174.5 801V803M1175.5 801V803M1176.5 801V802M1177.5 800V802M1178.5 800V801M1179.5 800V801M1180.5 800V801M1181.5 800V801M1182.5 800V801M1183.5 800V801M1184.5 799V801M1185.5 799V801M1186.5 799V801M1187.5 799V800M1188.5 799V800M1189.5 799V800M1190.5 798V800M1191.5 798V800M1192.5 798V800M1193.5 798V799M1194.5 798V799M1195.5 798V799M1196.5 798V799M1197.5 798V799M1198.5 797V799M1199.5 797V799M1200.5 797V798M1201.5 797V799M1202.5 797V798M1203.5 796V798M1204.5 796V797M1205.5 796V798M1206.5 796V797M1207.5 796V798M1208.5 796V798M1209.5 796V797M1210.5 796V797M1211.5 796V797M1212.5 796V798M1213.5 795V797M1214.5 795V797M1215.5 794V796M1216.5 794V796M1217.5 795V796M1218.5 795V796M1219.5 794V796M1220.5 795V796M1221.5 795V797M1222.5 795V797M1223.5 795V796M1224.5 794V796M1225.5 794V796M1226.5 794V795M1227.5 794V796M1228.5 794V796M1229.5 794V795M1230.5 794V795M1231.5 794V795M1232.5 794V795M1233.5 794V795M1234.5 794V796M1235.5 794V796M1236.5 794V795M1237.5 794V796M1238.5 794V796M1239.5 793V795M1240.5 793V794M1241.5 793V794M1242.5 792V794M1243.5 792V794M1244.5 792V794M1245.5 792V794M1246.5 793V794M1247.5 792V794M1248.5 792V794M1249.5 792V794M1250.5 792V794M1251.5 792V794M1252.5 792V793M1253.5 791V793M1254.5 791V792M1255.5 791V792M1256.5 791V793M1257.5 792V793M1258.5 792V793M1259.5 792V793M1260.5 792V793M1261.5 791V793M1262.5 791V792M1263.5 791V792M1264.5 791V792M1265.5 791V793M1266.5 791V793M1267.5 791V793M1268.5 791V793M1269.5 792V793M1270.5 792V793M1271.5 791V793M1272.5 791V792M1273.5 791V793M1274.5 791V792M1275.5 791V793M1276.5 791V793M1277.5 791V793M1278.5 791V792M1279.5 791V792M1280.5 791V793M1281.5 791V793M1282.5 791V793M1283.5 791V792M1284.5 790V792M1285.5 790V792M1286.5 790V792M1287.5 790V792M1288.5 791V792M1289.5 791V792M1290.5 790V792M1291.5 790V792M1292.5 790V792M1293.5 790V792M1294.5 790V792M1295.5 790V791M1296.5 790V791M1297.5 790V791M1298.5 789V791M1299.5 790V791M1300.5 790V791M1301.5 790V792M1302.5 790V792M1303.5 790V792M1304.5 790V792M1305.5 791V792M1306.5 790V792M1307.5 790V792M1308.5 790V791M1309.5 790V791M1310.5 790V792M1311.5 790V792M1312.5 790V791M1313.5 790V791M1314.5 790V792M1315.5 791V793M1316.5 791V793M1317.5 791V793M1318.5 791V793M1319.5 791V793M1320.5 792V794M1321.5 793V794M1322.5 793V795M1323.5 793V795M1324.5 793V795M1325.5 792V794M1326.5 792V793M1327.5 792V794M1328.5 793V795M1329.5 792V794M1330.5 793V795M1331.5 794V796M1332.5 794V795M1333.5 793V795M1334.5 793V795M1335.5 793V795M1336.5 793V795M1337.5 793V795M1338.5 793V795M1339.5 793V796M1340.5 793V795M1341.5 783V795M1342.5 787V808M1343.5 807V822M1344.5 821V836M1345.5 835V848M1346.5 847V857M1347.5 856V866M1348.5 865V874M1349.5 873V881M1350.5 880V889M1351.5 888V896M1352.5 895V903M1353.5 902V908M1354.5 907V914M1355.5 913V919M1356.5 918V924M1357.5 923V928M1358.5 927V932M1359.5 931V936M1360.5 935V940M1361.5 939V943M1362.5 942V946M1363.5 945V948M1364.5 947V950M1365.5 949V952M1366.5 951V954M1367.5 953V955M1368.5 954V956M1369.5 955V958M1370.5 957V959M1371.5 958V960M1372.5 959V960M1373.5 959V961M1374.5 960V962M1375.5 961V962M1376.5 961V963M1377.5 962V963M1378.5 962V964M1379.5 963V964M1380.5 963V965M1381.5 964V965M1382.5 964V965M1383.5 964V966M1384.5 965V966M1385.5 965V966M1386.5 965V966M1387.5 965V966M1388.5 965V967M1389.5 965V967M1390.5 965V967M1391.5 966V967M1392.5 965V967M1393.5 965V967M1394.5 965V967M1395.5 965V967M1396.5 965V967M1397.5 966V967M1398.5 966V967M1399.5 966V967M1400.5 966V967M1401.5 966V967M1402.5 965V967M1403.5 965V967M1404.5 965V966M1405.5 965V966M1406.5 965V966M1407.5 965V966M1408.5 964V966M1409.5 964V965M1410.5 964V965M1411.5 964V965M1412.5 964V965M1413.5 964V965M1414.5 964V965M1415.5 964V965M1416.5 964V966M1417.5 965V966M1418.5 965V966M1419.5 965V967M1420.5 966V967M1421.5 966V967M1422.5 966V967M1423.5 966V967M1424.5 966V967M1425.5 966V967M1426.5 966V967M1427.5 966V967M1428.5 966V967M1429.5 966V967M1430.5 966V967M1431.5 966V967M1432.5 966V967M1433.5 966V967M1434.5 966V967M1435.5 966V967M1436.5 966V967M1437.5 966V967M1438.5 966V967M1439.5 966V967M1440.5 966V967M1441.5 966V967M1442.5 966V967M1443.5 966V967M1444.5 966V967M1445.5 966V967M1446.5 966V967M1447.5 966V967M1448.5 966V967M1449.5 966V967M1450.5 966V967M1451.5 966V967M1452.5 966V967M1453.5 966V967M1454.5 966V967M1455.5 966V967M1456.5 966V967M1457.5 966V967M1458.5 966V967M1459.5 966V968M1460.5 966V967M1461.5 966V967M1462.5 966V967M1463.5 966V967M1464.5 966V967M1465.5 966V967M1466.5 966V968M1467.5 966V968M1468.5 966V968M1469.5 967V968M1470.5 967V968M1471.5 966V968M1472.5 966V967M1473.5 966V967M1474.5 966V967M1475.5 966V967M1476.5 966V967M1477.5 966V967M1478.5 966V967M1479.5 966V967M1480.5 966V967M1481.5 966V967M1482.5 966V968M1483.5 966V968M1484.5 966V967M1485.5 966V967M1486.5 966V967M1487.5 966V967M1488.5 966V967M1489.5 966V967M1490.5 966V968M1491.5 966V968M1492.5 966V968M1493.5 966V968M1494.5 966V967M1495.5 966V967M1496.5 966V967M1497.5 966V967M1498.5 966V967M1499.5 966V967M1500.5 966V967M1501.5 966V967M1502.5 966V967M1503.5 966V967M1504.5 966V967M1505.5 966V967M1506.5 966V967M1507.5 966V967M1508.5 966V967M1509.5 966V967M1510.5 966V967M1511.5 966V967M1512.5 966V967M1513.5 966V967M1514.5 966V967M1515.5 966V968M1516.5 966V968M1517.5 966V968M1518.5 967V968M1519.5 967V968M1520.5 967V968M1521.5 966V968M1522.5 966V968M1523.5 966V967M1524.5 966V967M1525.5 966V967M1526.5 966V968M1527.5 966V968M1528.5 966V968M1529.5 967V968M1530.5 967V968M1531.5 967V968M1532.5 966V968M1533.5 966V968M1534.5 967V968M1535.5 967V968M1536.5 967V968M1537.5 967V968M1538.5 967V968M1539.5 967V968M1540.5 967V968M1541.5 967V968M1542.5 967V968M1543.5 966V968M1544.5 967V968M1545.5 967V968M1546.5 967V968M1547.5 967V968M1548.5 967V968M1549.5 967V968M1550.5 967V968M1551.5 967V968M1552.5 966V968M1553.5 967V968M1554.5 967V968M1555.5 966V968M1556.5 966V968M1557.5 967V968M1558.5 967V968M1559.5 967V968M1560.5 967V968M1561.5 967V968M1562.5 967V968M1563.5 967V968M1564.5 967V968M1565.5 967V968M1566.5 967V968M1567.5 967V968M1568.5 967V968M1569.5 967V968M1570.5 967V968M1571.5 967V968M1572.5 967V968M1573.5 967V968M1574.5 967V968M1575.5 967V968M1576.5 967V968M1577.5 967V968M1578.5 967V968M1579.5 967V968M1580.5 967V968M1581.5 967V968M1582.5 967V968M1583.5 967V968M1584.5 967V968M1585.5 967V968M1586.5 967V968M1587.5 967V968M1588.5 967V968M1589.5 967V968M1590.5 967V968M1591.5 967V968M1592.5 967V968M1593.5 967V968M1594.5 967V968M1595.5 967V968M1596.5 967V968M1597.5 967V968M1598.5 967V968M1599.5 967V968M1600.5 967V968M1601.5 967V968M1602.5 967V968M1603.5 967V968M1604.5 967V968M1605.5 967V968M1606.5 967V968M1607.5 967V968M1608.5 967V968M1609.5 967V968M1610.5 967V968M1611.5 967V968M1612.5 967V968M1613.5 967V968M1614.5 967V968M1615.5 967V968M1616.5 967V968M1617.5 967V969M1618.5 967V969M1619.5 968V969M1620.5 968V969M1621.5 968V969M1622.5 968V969M1623.5 968V969M1624.5 968V969M1625.5 968V969M1626.5 968V969M1627.5 968V969M1628.5 968V969M1629.5 968V969M1630.5 968V969M1631.5 968V969M1632.5 968V969M1633.5 968V969M1634.5 968V969M1635.5 968V969M1636.5 968V969M1637.5 968V969M1638.5 968V969M1639.5 968V969M1640.5 968V969M1641.5 968V969M1642.5 968V969M1643.5 968V969M1644.5 968V969M1645.5 968V969M1646.5 968V969M1647.5 968V969M1648.5 968V969M1649.5 968V970M1650.5 968V970M1651.5 968V969M1652.5 968V970M1653.5 968V969M1654.5 968V969M1655.5 968V969M1656.5 968V969M1657.5 968V969M1658.5 968V970M1659.5 968V970M1660.5 968V969M1661.5 968V969M1662.5 968V969M1663.5 968V969M1664.5 968V970M1665.5 968V969M1666.5 968V970M1667.5 968V969M1668.5 968V970M1669.5 968V970M1670.5 968V970M1671.5 968V970M1672.5 968V969M1673.5 968V969M1674.5 968V969M1675.5 968V969M1676.5 968V969M1677.5 968V969M1678.5 968V970M1679.5 968V970M1680.5 968V970M1681.5 968V970M1682.5 968V970M1683.5 969V970M1684.5 969V970M1685.5 969V970M1686.5 969V970M1687.5 969V970M1688.5 968V970M1689.5 968V969M1690.5 968V970M1691.5 969V970M1692.5 969V970M1693.5 969V970M1694.5 968V970M1695.5 968V970M1696.5 969V970M1697.5 969V970M1698.5 969V970M1699.5 969V970M1700.5 969V970M1701.5 969V970M1702.5 969V970M1703.5 969V970M1704.5 969V970M1705.5 969V970M1706.5 969V970M1707.5 969V970M1708.5 969V970M1709.5 969V970M1710.5 969V970M1711.5 969V970M1712.5 969V970M1713.5 969V970M1714.5 969V970M1715.5 969V970M1716.5 969V970M1717.5 969V970M1718.5 969V970M1719.5 969V970M1720.5 969V970M1721.5 969V970M1722.5 969V970M1723.5 969V970M1724.5 969V970M1725.5 969V970M1726.5 969V970M1727.5 969V970M1728.5 969V970M1729.5 969V970M1730.5 969V970M1731.5 969V970M1732.5 969V970M1733.5 969V970M1734.5 969V970M1735.5 969V970M1736.5 969V970M1737.5 969V970M1738.5 969V970M1739.5 969V970M1740.5 969V970M1741.5 969V970M1742.5 969V970M1743.5 969V970M1744.5 969V970M1745.5 969V970M1746.5 969V970M1747.5 969V970M1748.5 969V970M1749.5 969V970M1750.5 969V970" fill="none" stroke="#8233a0" stroke-width="1" shape-rendering="crispEdges"/>
<rect x="3" y="290" width="1748" height="2" fill="#727272"/>
<rect x="3" y="524" width="1748" height="2" fill="#727272"/>
<rect x="3" y="758" width="1748" height="2" fill="#727272"/>
<text x="1746.00" y="86.41" font-size="13" fill="#f9eb12" text-anchor="end">40 V</text>
<text x="1746.00" y="109.61" font-size="13" fill="#f9eb12" text-anchor="end">35 V</text>
<text x="1746.00" y="132.81" font-size="13" fill="#f9eb12" text-anchor="end">30 V</text>
<text x="1746.00" y="156.01" font-size="13" fill="#f9eb12" text-anchor="end">25 V</text>
<text x="1746.00" y="179.21" font-size="13" fill="#f9eb12" text-anchor="end">20 V</text>
<text x="1746.00" y="202.41" font-size="13" fill="#f9eb12" text-anchor="end">15 V</text>
<text x="1746.00" y="225.61" font-size="13" fill="#f9eb12" text-anchor="end">10 V</text>
<text x="1746.00" y="248.81" font-size="13" fill="#f9eb12" text-anchor="end">5 V</text>
<text x="1746.00" y="272.01" font-size="13" fill="#f9eb12" text-anchor="end">0 V</text>
<text x="1746.00" y="320.11" font-size="13" fill="#8ed030" text-anchor="end">1 V</text>
<text x="1746.00" y="343.31" font-size="13" fill="#8ed030" text-anchor="end" textLength="46.8" lengthAdjust="spacing">800 mV</text>
<text x="1746.00" y="366.51" font-size="13" fill="#8ed030" text-anchor="end" textLength="46.8" lengthAdjust="spacing">600 mV</text>
<text x="1746.00" y="389.71" font-size="13" fill="#8ed030" text-anchor="end" textLength="46.8" lengthAdjust="spacing">400 mV</text>
<text x="1746.00" y="412.91" font-size="13" fill="#8ed030" text-anchor="end" textLength="46.8" lengthAdjust="spacing">200 mV</text>
<text x="1746.00" y="436.11" font-size="13" fill="#8ed030" text-anchor="end">0 V</text>
<text x="1746.00" y="459.31" font-size="13" fill="#8ed030" text-anchor="end" textLength="51.3" lengthAdjust="spacing">-200 mV</text>
<text x="1746.00" y="482.51" font-size="13" fill="#8ed030" text-anchor="end" textLength="51.3" lengthAdjust="spacing">-400 mV</text>
<text x="1746.00" y="505.71" font-size="13" fill="#8ed030" text-anchor="end" textLength="51.3" lengthAdjust="spacing">-600 mV</text>
<text x="1746.00" y="554.41" font-size="13" fill="#f5911e" text-anchor="end" textLength="71.9" lengthAdjust="spacing">582.462 mT</text>
<text x="1746.00" y="577.61" font-size="13" fill="#f5911e" text-anchor="end" textLength="71.9" lengthAdjust="spacing">509.654 mT</text>
<text x="1746.00" y="600.81" font-size="13" fill="#f5911e" text-anchor="end" textLength="71.9" lengthAdjust="spacing">436.846 mT</text>
<text x="1746.00" y="624.01" font-size="13" fill="#f5911e" text-anchor="end" textLength="71.9" lengthAdjust="spacing">364.039 mT</text>
<text x="1746.00" y="647.21" font-size="13" fill="#f5911e" text-anchor="end" textLength="71.9" lengthAdjust="spacing">291.231 mT</text>
<text x="1746.00" y="670.41" font-size="13" fill="#f5911e" text-anchor="end" textLength="71.9" lengthAdjust="spacing">218.423 mT</text>
<text x="1746.00" y="693.61" font-size="13" fill="#f5911e" text-anchor="end" textLength="71.9" lengthAdjust="spacing">145.615 mT</text>
<text x="1746.00" y="716.81" font-size="13" fill="#f5911e" text-anchor="end" textLength="64.4" lengthAdjust="spacing">72.808 mT</text>
<text x="1746.00" y="740.01" font-size="13" fill="#f5911e" text-anchor="end">0 T</text>
<text x="1746.00" y="778.01" font-size="13" fill="#8a3aa6" text-anchor="end" textLength="75.9" lengthAdjust="spacing">7.678869 kA</text>
<text x="1746.00" y="801.26" font-size="13" fill="#8a3aa6" text-anchor="end" textLength="75.9" lengthAdjust="spacing">6.719010 kA</text>
<text x="1746.00" y="824.51" font-size="13" fill="#8a3aa6" text-anchor="end" textLength="75.9" lengthAdjust="spacing">5.759152 kA</text>
<text x="1746.00" y="847.76" font-size="13" fill="#8a3aa6" text-anchor="end" textLength="75.9" lengthAdjust="spacing">4.799293 kA</text>
<text x="1746.00" y="871.01" font-size="13" fill="#8a3aa6" text-anchor="end" textLength="75.9" lengthAdjust="spacing">3.839434 kA</text>
<text x="1746.00" y="894.26" font-size="13" fill="#8a3aa6" text-anchor="end" textLength="75.9" lengthAdjust="spacing">2.879576 kA</text>
<text x="1746.00" y="917.51" font-size="13" fill="#8a3aa6" text-anchor="end" textLength="75.9" lengthAdjust="spacing">1.919717 kA</text>
<text x="1746.00" y="940.76" font-size="13" fill="#8a3aa6" text-anchor="end" textLength="60.9" lengthAdjust="spacing">959.859 A</text>
<text x="1746.00" y="964.01" font-size="13" fill="#8a3aa6" text-anchor="end">0 A</text>
<text x="1746.00" y="988.19" font-size="13" fill="#8a3aa6" text-anchor="end" textLength="65.4" lengthAdjust="spacing">-959.859 A</text>
<text x="55.74" y="987.31" font-size="13" fill="#c6c6c6" text-anchor="middle">0 s</text>
<text x="230.54" y="987.31" font-size="13" fill="#c6c6c6" text-anchor="middle">4 ms</text>
<text x="405.34" y="987.31" font-size="13" fill="#c6c6c6" text-anchor="middle">8 ms</text>
<text x="580.14" y="987.31" font-size="13" fill="#c6c6c6" text-anchor="middle">12 ms</text>
<text x="754.94" y="987.31" font-size="13" fill="#c6c6c6" text-anchor="middle">16 ms</text>
<text x="929.74" y="987.31" font-size="13" fill="#c6c6c6" text-anchor="middle">20 ms</text>
<text x="1104.54" y="987.31" font-size="13" fill="#c6c6c6" text-anchor="middle">24 ms</text>
<text x="1279.34" y="987.31" font-size="13" fill="#c6c6c6" text-anchor="middle">28 ms</text>
<text x="1454.14" y="987.31" font-size="13" fill="#c6c6c6" text-anchor="middle">32 ms</text>
<text x="1628.94" y="987.31" font-size="13" fill="#c6c6c6" text-anchor="middle">36 ms</text>
<path d="M1710 65 H1742 Q1744 65 1744 67 V99 Z" fill="#4d4d4d"/>
<circle cx="1737.1" cy="71.9" r="4.2" fill="none" stroke="#b9b9b9" stroke-width="1.3"/>
<line x1="1733.2" y1="75.6" x2="1728.2" y2="80.6" stroke="#a4a4a4" stroke-width="2.4" stroke-linecap="round"/>
<path d="M45 58 H65.2 L55.1 67.8 Z" fill="#f68b1f"/>
<path d="M46.3 69.3 H63.7 V87.5 H59.2 L55.1 93.6 L51 87.5 H46.3 Z" fill="#000" stroke="#f68b1f" stroke-width="2.4" stroke-linejoin="miter"/>
<text x="55.10" y="83.59" font-size="16.4" fill="#f68b1f" text-anchor="middle" font-weight="bold">T</text>
<rect x="586" y="44" width="582" height="2" fill="#b6b6b6"/>
<path d="M593 36.5 H586.5 V52.5 H593" fill="none" stroke="#f0f0f0" stroke-width="1.2"/>
<path d="M1161 36.5 H1167.5 V52.5 H1161" fill="none" stroke="#f0f0f0" stroke-width="1.2"/>
<path d="M596 33 H611 L603.5 38 Z" fill="#f68b1f"/>
<path d="M597.6 40.8 H609.4 V52 H606 L603.5 56.2 L601 52 H597.6 Z" fill="#111" stroke="#f68b1f" stroke-width="1.5"/>
<text x="603.50" y="49.87" font-size="10" fill="#f68b1f" text-anchor="middle" font-weight="bold">T</text>
<path d="M9.5 162.1 H78 L84 174.8 L78 187.5 H9.5 Q6.6 187.5 6.6 184.5 V165.1 Q6.6 162.1 9.5 162.1 Z" fill="#1a1800" stroke="#f9eb12" stroke-width="1.7" stroke-linejoin="round"/>
<line x1="32.8" y1="162.1" x2="32.8" y2="187.5" stroke="#f9eb12" stroke-width="1.7"/>
<text x="19.60" y="178.99" font-size="11.5" fill="#f9eb12" text-anchor="middle" textLength="17.2" lengthAdjust="spacingAndGlyphs">C 1</text>
<text x="57.00" y="179.16" font-size="12" fill="#f9eb12" text-anchor="middle" textLength="25.0" lengthAdjust="spacing">20 V</text>
<text x="101.80" y="179.45" font-size="18" fill="#f9eb12" textLength="97.6" lengthAdjust="spacing">U_loop,coil</text>
<path d="M9.5 395.9 H78 L84 408.6 L78 421.3 H9.5 Q6.6 421.3 6.6 418.3 V398.9 Q6.6 395.9 9.5 395.9 Z" fill="#12160a" stroke="#8ed030" stroke-width="1.7" stroke-linejoin="round"/>
<line x1="32.8" y1="395.9" x2="32.8" y2="421.3" stroke="#8ed030" stroke-width="1.7"/>
<text x="19.60" y="412.79" font-size="11.5" fill="#8ed030" text-anchor="middle" textLength="17.2" lengthAdjust="spacingAndGlyphs">C 4</text>
<text x="57.00" y="412.96" font-size="12" fill="#8ed030" text-anchor="middle" textLength="42.0" lengthAdjust="spacing">200 mV</text>
<text x="101.80" y="413.25" font-size="18" fill="#8ed030" textLength="86.0" lengthAdjust="spacing">U_Photod</text>
<line x1="3" y1="734.3" x2="7" y2="734.3" stroke="#f5911e" stroke-width="1.4"/>
<path d="M9.5 722.6 H29.8 L41.8 734.9 L29.8 747.2 H9.5 Q6.6 747.2 6.6 744.2 V725.6 Q6.6 722.6 9.5 722.6 Z" fill="#1a1008" stroke="#f5911e" stroke-width="1.3" stroke-linejoin="round"/>
<text x="23.30" y="738.59" font-size="11.5" fill="#f5911e" text-anchor="middle" textLength="19.6" lengthAdjust="spacing">M 1</text>
<text x="53.40" y="739.65" font-size="18" fill="#f5911e" textLength="26.8" lengthAdjust="spacingAndGlyphs">B_t</text>
<path d="M9.0 946.3 H29.9 L42.3 959.0 L29.9 971.7 H9.0 Q6.1 971.7 6.1 968.7 V949.3 Q6.1 946.3 9.0 946.3 Z" fill="#6d2c8c"/>
<text x="23.30" y="962.69" font-size="11.5" fill="#ffffff" text-anchor="middle" textLength="19.6" lengthAdjust="spacing">M 2</text>
<text x="53.20" y="964.05" font-size="18" fill="#7e2f98" textLength="26.4" lengthAdjust="spacing">I_p</text>
<path d="M1920 29.5 H1769.5 V995.5 H1920" fill="none" stroke="#5d5855" stroke-width="1"/>
<circle cx="1762" cy="503.6" r="2.1" fill="#d2d2d2"/>
<circle cx="1762" cy="512.2" r="2.1" fill="#d2d2d2"/>
<circle cx="1762" cy="520.8" r="2.1" fill="#d2d2d2"/>
<g fill="#ffffff">
<text x="1785.3" y="26" font-size="31.5" font-weight="bold" textLength="17.8" lengthAdjust="spacingAndGlyphs">T</text>
<text x="1797.4" y="26" font-size="30" font-weight="bold" textLength="16.2" lengthAdjust="spacingAndGlyphs">e</text>
<rect x="1816.0" y="4.2" width="5.6" height="18"/>
<path d="M1834.9 4.2 H1836.0 V26 H1830.4 V9.4 Z"/>
<rect x="1830.6" y="10.2" width="10.4" height="3.8"/>
<path d="M1821.0 20.4 L1826.4 15.8 L1831.2 26 L1822.4 26 Z"/>
<text x="1838.2" y="26" font-size="30" font-weight="bold" textLength="65.2" lengthAdjust="spacingAndGlyphs">ronix</text>
</g>
<path d="M1814.9 26 L1821.4 26 L1830.5 9.5 L1825 9.5 Z" fill="#22b8dc"/>
<text x="1844.00" y="43.80" font-size="15" fill="#ececec" text-anchor="middle" font-weight="bold" textLength="84.0" lengthAdjust="spacing">Add New...</text>
<rect x="1778.5" y="54.5" width="62" height="36" fill="url(#gbtn)" rx="7" stroke="#6b625c" stroke-width="1"/>
<rect x="1850.5" y="54.5" width="62" height="36" fill="url(#gbtn)" rx="7" stroke="#6b625c" stroke-width="1"/>
<rect x="1778.5" y="100.5" width="62" height="36" fill="url(#gbtn)" rx="7" stroke="#6b625c" stroke-width="1"/>
<rect x="1850.5" y="100.5" width="62" height="36" fill="url(#gbtn)" rx="7" stroke="#6b625c" stroke-width="1"/>
<rect x="1778.5" y="146.5" width="62" height="36" fill="url(#gbtn)" rx="7" stroke="#6b625c" stroke-width="1"/>
<rect x="1850.5" y="146.5" width="62" height="36" fill="url(#gbtn)" rx="7" stroke="#6b625c" stroke-width="1"/>
<rect x="1778.5" y="196.5" width="62" height="36" fill="url(#gbtn)" rx="7" stroke="#6b625c" stroke-width="1"/>
<rect x="1850.5" y="196.5" width="62" height="36" fill="url(#gbtn)" rx="7" stroke="#6b625c" stroke-width="1"/>
<text x="1810.00" y="77.41" font-size="15" fill="#ffffff" text-anchor="middle" textLength="50.0" lengthAdjust="spacingAndGlyphs" stroke="#ffffff" stroke-width="0.15">Cursors</text>
<text x="1881.30" y="77.41" font-size="15" fill="#ffffff" text-anchor="middle" textLength="49.0" lengthAdjust="spacing" stroke="#ffffff" stroke-width="0.15">Callout</text>
<text x="1809.40" y="123.41" font-size="15" fill="#ffffff" text-anchor="middle" textLength="58.8" lengthAdjust="spacing" stroke="#ffffff" stroke-width="0.15">Measure</text>
<text x="1881.30" y="123.41" font-size="15" fill="#ffffff" text-anchor="middle" textLength="45.5" lengthAdjust="spacingAndGlyphs" stroke="#ffffff" stroke-width="0.15">Search</text>
<text x="1809.40" y="160.81" font-size="15" fill="#ffffff" text-anchor="middle" textLength="47.8" lengthAdjust="spacingAndGlyphs" stroke="#ffffff" stroke-width="0.15">Results</text>
<text x="1809.90" y="177.21" font-size="15" fill="#ffffff" text-anchor="middle" textLength="36.0" lengthAdjust="spacing" stroke="#ffffff" stroke-width="0.15">Table</text>
<text x="1881.20" y="169.41" font-size="15" fill="#ffffff" text-anchor="middle" textLength="27.7" lengthAdjust="spacing" stroke="#ffffff" stroke-width="0.15">Plot</text>
<text x="1881.50" y="219.41" font-size="15" fill="#ffffff" text-anchor="middle" textLength="49.8" lengthAdjust="spacing" stroke="#ffffff" stroke-width="0.15">More...</text>
<line x1="1773" y1="189.5" x2="1917" y2="189.5" stroke="#5d5855" stroke-width="1"/>
<line x1="1773" y1="241.5" x2="1917" y2="241.5" stroke="#5d5855" stroke-width="1"/>
<rect x="1798.6" y="203.3" width="21" height="18.5" fill="none" stroke="#bdbdbd" stroke-width="1.8" stroke-dasharray="3.4 2.4"/>
<circle cx="1811.2" cy="210.8" r="4.3" fill="none" stroke="#c4c4c4" stroke-width="1.5"/>
<line x1="1808" y1="214" x2="1803.4" y2="218" stroke="#bdbdbd" stroke-width="2.2" stroke-linecap="round"/>
<path d="M1815.4 217.6 L1815.6 226.6 L1818 224.4 L1820 228.2 L1821.6 227.4 L1819.8 223.6 L1823 223.4 Z" fill="#c8c8c8"/>
<clipPath id="cb3"><rect x="3" y="1003" width="90" height="76" rx="4.5"/></clipPath>
<g clip-path="url(#cb3)">
<rect x="3" y="1003" width="90" height="76" fill="#cbcbcb"/>
<rect x="3" y="1003" width="90" height="18.8" fill="#4a4623"/>
<rect x="3" y="1021.8" width="90" height="1.9" fill="#adadad"/>
</g>
<text x="8.20" y="1016.84" font-size="15.4" fill="#f6ea3c" textLength="29.0" lengthAdjust="spacingAndGlyphs" stroke="#f6ea3c" stroke-width="0.35">Ch 1</text>
<text x="8.00" y="1036.80" font-size="15" fill="#101010" textLength="43.6" lengthAdjust="spacingAndGlyphs">5 V/div</text>
<text x="8.00" y="1055.61" font-size="15" fill="#101010" textLength="36.0" lengthAdjust="spacingAndGlyphs">1 MΩ</text>
<text x="8.00" y="1074.61" font-size="15" fill="#101010" textLength="52.6" lengthAdjust="spacingAndGlyphs">200 kHz</text>
<text x="74.60" y="1068.52" font-size="9" fill="#101010" stroke="#101010" stroke-width="0.2">B</text>
<text x="80.60" y="1071.43" font-size="7" fill="#101010" stroke="#101010" stroke-width="0.2">W</text>
<clipPath id="cb98"><rect x="98" y="1003" width="90" height="76" rx="4.5"/></clipPath>
<g clip-path="url(#cb98)">
<rect x="98" y="1003" width="90" height="76" fill="#818181"/>
<rect x="98" y="1003" width="90" height="18.8" fill="#278286"/>
<rect x="98" y="1021.8" width="90" height="1.9" fill="#6f6f6f"/>
</g>
<text x="103.20" y="1016.84" font-size="15.4" fill="#161616" textLength="29.6" lengthAdjust="spacingAndGlyphs" stroke="#161616" stroke-width="0.35">Ch 2</text>
<text x="103.00" y="1036.80" font-size="15" fill="#2b2b2b" textLength="72.6" lengthAdjust="spacingAndGlyphs">250 mV/div</text>
<text x="103.00" y="1055.61" font-size="15" fill="#2b2b2b" textLength="36.0" lengthAdjust="spacingAndGlyphs">1 MΩ</text>
<text x="103.00" y="1074.61" font-size="15" fill="#2b2b2b" textLength="52.6" lengthAdjust="spacingAndGlyphs">200 kHz</text>
<text x="169.60" y="1068.52" font-size="9" fill="#2b2b2b" stroke="#2b2b2b" stroke-width="0.2">B</text>
<text x="175.60" y="1071.43" font-size="7" fill="#2b2b2b" stroke="#2b2b2b" stroke-width="0.2">W</text>
<clipPath id="cb193"><rect x="193" y="1003" width="90" height="76" rx="4.5"/></clipPath>
<g clip-path="url(#cb193)">
<rect x="193" y="1003" width="90" height="76" fill="#818181"/>
<rect x="193" y="1003" width="90" height="18.8" fill="#8e3b49"/>
<rect x="193" y="1021.8" width="90" height="1.9" fill="#6f6f6f"/>
</g>
<text x="198.20" y="1016.84" font-size="15.4" fill="#b8a9ab" textLength="29.6" lengthAdjust="spacingAndGlyphs" stroke="#b8a9ab" stroke-width="0.35">Ch 3</text>
<text x="198.00" y="1036.80" font-size="15" fill="#2b2b2b" textLength="72.6" lengthAdjust="spacingAndGlyphs">450 mV/div</text>
<text x="198.00" y="1055.61" font-size="15" fill="#2b2b2b" textLength="36.0" lengthAdjust="spacingAndGlyphs">1 MΩ</text>
<text x="198.00" y="1074.61" font-size="15" fill="#2b2b2b" textLength="52.6" lengthAdjust="spacingAndGlyphs">200 kHz</text>
<text x="264.60" y="1068.52" font-size="9" fill="#2b2b2b" stroke="#2b2b2b" stroke-width="0.2">B</text>
<text x="270.60" y="1071.43" font-size="7" fill="#2b2b2b" stroke="#2b2b2b" stroke-width="0.2">W</text>
<clipPath id="cb288"><rect x="288" y="1003" width="90" height="76" rx="4.5"/></clipPath>
<g clip-path="url(#cb288)">
<rect x="288" y="1003" width="90" height="76" fill="#cbcbcb"/>
<rect x="288" y="1003" width="90" height="18.8" fill="#334125"/>
<rect x="288" y="1021.8" width="90" height="1.9" fill="#adadad"/>
</g>
<text x="293.20" y="1016.84" font-size="15.4" fill="#8fd23c" textLength="29.8" lengthAdjust="spacingAndGlyphs" stroke="#8fd23c" stroke-width="0.35">Ch 4</text>
<text x="293.00" y="1036.80" font-size="15" fill="#101010" textLength="72.6" lengthAdjust="spacingAndGlyphs">200 mV/div</text>
<text x="293.00" y="1055.61" font-size="15" fill="#101010" textLength="36.0" lengthAdjust="spacingAndGlyphs">1 MΩ</text>
<text x="293.00" y="1074.61" font-size="15" fill="#101010" textLength="52.6" lengthAdjust="spacingAndGlyphs">200 kHz</text>
<text x="359.60" y="1068.52" font-size="9" fill="#101010" stroke="#101010" stroke-width="0.2">B</text>
<text x="365.60" y="1071.43" font-size="7" fill="#101010" stroke="#101010" stroke-width="0.2">W</text>
<clipPath id="cb383"><rect x="383" y="1003" width="90" height="76" rx="4.5"/></clipPath>
<g clip-path="url(#cb383)">
<rect x="383" y="1003" width="90" height="76" fill="#cbcbcb"/>
<rect x="383" y="1003" width="90" height="18.8" fill="#473323"/>
<rect x="383" y="1021.8" width="90" height="1.9" fill="#adadad"/>
</g>
<text x="388.20" y="1016.84" font-size="15.4" fill="#f5931f" textLength="48.0" lengthAdjust="spacing" stroke="#f5931f" stroke-width="0.35">Math 1</text>
<text x="388.00" y="1036.80" font-size="15" fill="#101010" textLength="75.0" lengthAdjust="spacingAndGlyphs">72.8 mT/div</text>
<text x="388.00" y="1055.61" font-size="15" fill="#101010" textLength="73.0" lengthAdjust="spacingAndGlyphs">Intg(Ch2)…</text>
<clipPath id="cb478"><rect x="478" y="1003" width="90" height="76" rx="4.5"/></clipPath>
<g clip-path="url(#cb478)">
<rect x="478" y="1003" width="90" height="76" fill="#cbcbcb"/>
<rect x="478" y="1003" width="90" height="18.8" fill="#6d2c8c"/>
<rect x="478" y="1021.8" width="90" height="1.9" fill="#adadad"/>
</g>
<text x="483.20" y="1016.84" font-size="15.4" fill="#ffffff" textLength="49.0" lengthAdjust="spacing" stroke="#ffffff" stroke-width="0.35">Math 2</text>
<text x="483.00" y="1036.80" font-size="15" fill="#101010" textLength="82.4" lengthAdjust="spacingAndGlyphs">959.85 A/div</text>
<text x="483.00" y="1055.61" font-size="15" fill="#101010" textLength="74.6" lengthAdjust="spacingAndGlyphs">-Intg(Ch3…</text>
<rect x="1023.5" y="999.5" width="39" height="79" fill="url(#gbtn)" rx="7" stroke="#6b625c" stroke-width="1"/>
<rect x="1027.2" y="1007.2" width="31.6" height="2" fill="#f7941d"/>
<rect x="1068.5" y="999.5" width="39" height="79" fill="url(#gbtn)" rx="7" stroke="#6b625c" stroke-width="1"/>
<rect x="1072.2" y="1007.2" width="31.6" height="2" fill="#2b2bd6"/>
<text x="1042.80" y="1049.84" font-size="20" fill="#f2f2f2" text-anchor="middle">5</text>
<text x="1087.80" y="1049.84" font-size="20" fill="#f2f2f2" text-anchor="middle">6</text>
<line x1="1118.5" y1="1000" x2="1118.5" y2="1078" stroke="#5d5855" stroke-width="1"/>
<rect x="1129.5" y="999.5" width="39" height="79" fill="url(#gbtn)" rx="7" stroke="#6b625c" stroke-width="1"/>
<rect x="1133.2" y="1007.2" width="31.6" height="2" fill="#b42222"/>
<rect x="1174.5" y="999.5" width="39" height="79" fill="url(#gbtn)" rx="7" stroke="#6b625c" stroke-width="1"/>
<rect x="1178.2" y="1007.2" width="31.6" height="2" fill="#c6c6d8"/>
<rect x="1219.5" y="999.5" width="39" height="79" fill="url(#gbtn)" rx="7" stroke="#6b625c" stroke-width="1"/>
<rect x="1223.2" y="1007.2" width="31.6" height="2" fill="#c758f7"/>
<text x="1148.80" y="1033.14" font-size="15.4" fill="#ffffff" text-anchor="middle" textLength="27.0" lengthAdjust="spacingAndGlyphs">Add</text>
<text x="1148.80" y="1049.14" font-size="15.4" fill="#ffffff" text-anchor="middle" textLength="29.0" lengthAdjust="spacingAndGlyphs">New</text>
<text x="1148.80" y="1065.14" font-size="15.4" fill="#ffffff" text-anchor="middle" textLength="33.0" lengthAdjust="spacingAndGlyphs">Math</text>
<text x="1193.80" y="1033.14" font-size="15.4" fill="#ffffff" text-anchor="middle" textLength="27.0" lengthAdjust="spacingAndGlyphs">Add</text>
<text x="1193.80" y="1049.14" font-size="15.4" fill="#ffffff" text-anchor="middle" textLength="29.0" lengthAdjust="spacingAndGlyphs">New</text>
<text x="1193.80" y="1065.14" font-size="15.4" fill="#ffffff" text-anchor="middle" textLength="20.6" lengthAdjust="spacingAndGlyphs">Ref</text>
<text x="1238.80" y="1033.14" font-size="15.4" fill="#ffffff" text-anchor="middle" textLength="27.0" lengthAdjust="spacingAndGlyphs">Add</text>
<text x="1238.80" y="1049.14" font-size="15.4" fill="#ffffff" text-anchor="middle" textLength="29.0" lengthAdjust="spacingAndGlyphs">New</text>
<text x="1238.80" y="1065.14" font-size="15.4" fill="#ffffff" text-anchor="middle" textLength="22.4" lengthAdjust="spacingAndGlyphs">Bus</text>
<line x1="1269.5" y1="1000" x2="1269.5" y2="1078" stroke="#5d5855" stroke-width="1"/>
<clipPath id="ib1280.5"><rect x="1280.5" y="1003.5" width="199" height="74.5" rx="4"/></clipPath>
<g clip-path="url(#ib1280.5)">
<rect x="1280.5" y="1003.5" width="199" height="74.5" fill="#cbcbcb"/>
<rect x="1280.5" y="1003.5" width="199" height="19.5" fill="#58595b"/>
<rect x="1280.5" y="1023.0" width="199" height="1.8" fill="#969696"/>
</g>
<rect x="1280.5" y="1003.5" width="199" height="74.5" fill="none" rx="4" stroke="#161616" stroke-width="1.2"/>
<text x="1285.90" y="1018.21" font-size="15" fill="#f4f4f4" textLength="73.0" lengthAdjust="spacing" stroke="#f4f4f4" stroke-width="0.1">Horizontal</text>
<text x="1285.40" y="1037.20" font-size="15" fill="#101010" textLength="53.0" lengthAdjust="spacingAndGlyphs">4 ms/div</text>
<text x="1391.00" y="1037.20" font-size="15" fill="#101010" textLength="39.0" lengthAdjust="spacingAndGlyphs">40 ms</text>
<text x="1285.40" y="1056.20" font-size="15" fill="#101010" textLength="67.0" lengthAdjust="spacingAndGlyphs">SR: 1 MS/s</text>
<text x="1392.00" y="1056.20" font-size="15" fill="#101010" textLength="43.0" lengthAdjust="spacingAndGlyphs">1 µs/pt</text>
<text x="1285.40" y="1075.00" font-size="15" fill="#101010" textLength="70.6" lengthAdjust="spacingAndGlyphs">RL: 40 kpts</text>
<text x="1405.40" y="1075.00" font-size="15" fill="#101010" textLength="22.0" lengthAdjust="spacing">3%</text>
<path d="M1391.8 1063.6 H1399.4 V1071 H1397.2 L1395.6 1074.2 L1394 1071 H1391.8 Z" fill="#111" stroke="#f68b1f" stroke-width="1.2"/>
<text x="1395.60" y="1069.80" font-size="7.5" fill="#ffffff" text-anchor="middle" font-weight="bold">T</text>
<clipPath id="ib1485.4"><rect x="1485.4" y="1003.5" width="159.2" height="74.5" rx="4"/></clipPath>
<g clip-path="url(#ib1485.4)">
<rect x="1485.4" y="1003.5" width="159.2" height="74.5" fill="#cbcbcb"/>
<rect x="1485.4" y="1003.5" width="159.2" height="19.5" fill="#58595b"/>
<rect x="1485.4" y="1023.0" width="159.2" height="1.8" fill="#969696"/>
</g>
<rect x="1485.4" y="1003.5" width="159.2" height="74.5" fill="none" rx="4" stroke="#161616" stroke-width="1.2"/>
<text x="1490.80" y="1018.21" font-size="15" fill="#f4f4f4" textLength="48.0" lengthAdjust="spacing" stroke="#f4f4f4" stroke-width="0.1">Trigger</text>
<rect x="1490.6" y="1025.2" width="29" height="15.4" fill="#2222c6" rx="5.5" stroke="#101030" stroke-width="1"/>
<text x="1505.00" y="1037.03" font-size="14.5" fill="#ffffff" text-anchor="middle">6</text>
<path d="M1530.4 1037.6 H1534.6 L1541.6 1027.4 H1546.2" fill="none" stroke="#3e3a9c" stroke-width="1.15"/>
<text x="1556.00" y="1037.20" font-size="15" fill="#101010" textLength="21.4" lengthAdjust="spacingAndGlyphs">3 V</text>
<clipPath id="ib1651"><rect x="1651" y="1003.5" width="148.4" height="74.5" rx="4"/></clipPath>
<g clip-path="url(#ib1651)">
<rect x="1651" y="1003.5" width="148.4" height="74.5" fill="#cbcbcb"/>
<rect x="1651" y="1003.5" width="148.4" height="19.5" fill="#58595b"/>
<rect x="1651" y="1023.0" width="148.4" height="1.8" fill="#969696"/>
</g>
<rect x="1651" y="1003.5" width="148.4" height="74.5" fill="none" rx="4" stroke="#161616" stroke-width="1.2"/>
<text x="1656.40" y="1018.21" font-size="15" fill="#f4f4f4" textLength="77.4" lengthAdjust="spacing" stroke="#f4f4f4" stroke-width="0.1">Acquisition</text>
<text x="1655.40" y="1037.20" font-size="15" fill="#101010" textLength="52.0" lengthAdjust="spacingAndGlyphs">Manual,</text>
<text x="1736.00" y="1037.20" font-size="15" fill="#101010" textLength="49.4" lengthAdjust="spacingAndGlyphs">Analyze</text>
<text x="1655.40" y="1056.20" font-size="15" fill="#101010" textLength="107.0" lengthAdjust="spacingAndGlyphs">High Res: 16 bits</text>
<text x="1655.40" y="1075.00" font-size="15" fill="#101010" textLength="70.0" lengthAdjust="spacingAndGlyphs">Single: 0 /1</text>
<line x1="1811.5" y1="1000" x2="1811.5" y2="1078" stroke="#5d5855" stroke-width="1"/>
<rect x="1822.5" y="999.5" width="89" height="35" fill="#fb1f28" rx="6" stroke="#8f7f7f" stroke-width="0.8"/>
<text x="1867.00" y="1020.31" font-size="13" fill="#ffffff" text-anchor="middle" font-weight="bold" textLength="53.6" lengthAdjust="spacing">Preview</text>
<rect x="1822.5" y="1040.5" width="89" height="37.5" fill="#cbcbcb" rx="5" stroke="#9a9a9a" stroke-width="1"/>
<text x="1867.00" y="1055.00" font-size="15" fill="#101010" text-anchor="middle" textLength="84.0" lengthAdjust="spacingAndGlyphs">13 May 2025</text>
<text x="1867.00" y="1071.90" font-size="15" fill="#101010" text-anchor="middle" textLength="84.0" lengthAdjust="spacingAndGlyphs">10:33:06 AM</text>
</svg>
</body></html>
